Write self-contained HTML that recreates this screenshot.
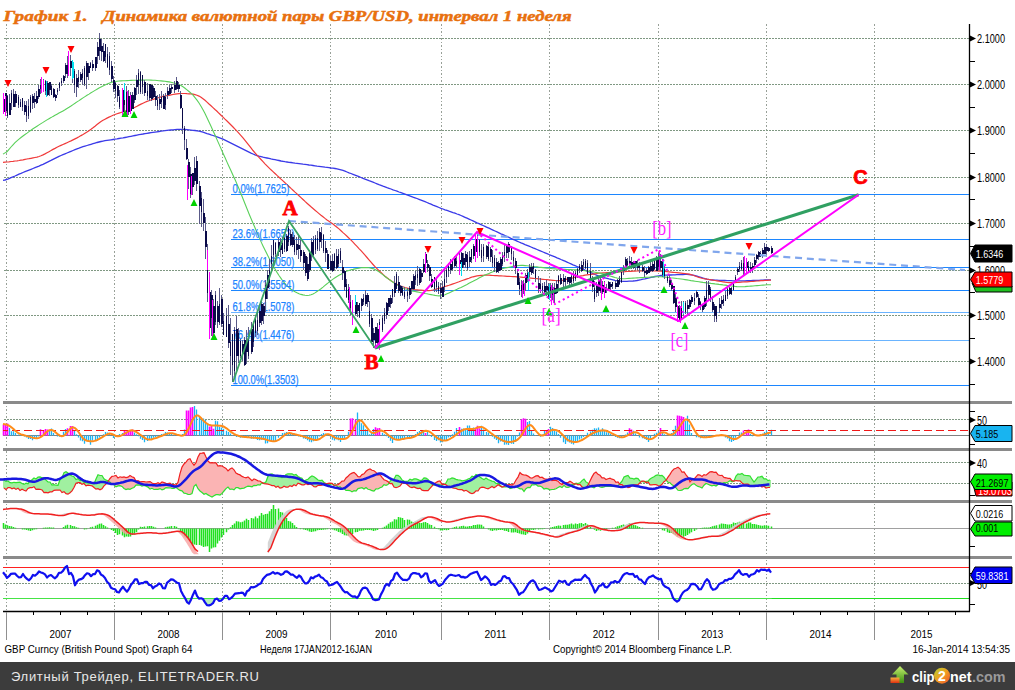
<!DOCTYPE html>
<html><head><meta charset="utf-8"><title>GBP/USD</title>
<style>html,body{margin:0;padding:0;background:#fff;width:1015px;height:690px;overflow:hidden;position:relative;font-family:"Liberation Sans",sans-serif}</style>
</head><body>
<svg width="1015" height="690" viewBox="0 0 1015 690" style="position:absolute;left:0;top:0"><path d="M6.5,24V611" stroke="#98a098" stroke-width="1" stroke-dasharray="1.5 2" shape-rendering="crispEdges"/><path d="M114.5,24V611" stroke="#98a098" stroke-width="1" stroke-dasharray="1.5 2" shape-rendering="crispEdges"/><path d="M222.5,24V611" stroke="#98a098" stroke-width="1" stroke-dasharray="1.5 2" shape-rendering="crispEdges"/><path d="M330.5,24V611" stroke="#98a098" stroke-width="1" stroke-dasharray="1.5 2" shape-rendering="crispEdges"/><path d="M441.5,24V611" stroke="#98a098" stroke-width="1" stroke-dasharray="1.5 2" shape-rendering="crispEdges"/><path d="M549.5,24V611" stroke="#98a098" stroke-width="1" stroke-dasharray="1.5 2" shape-rendering="crispEdges"/><path d="M658.5,24V611" stroke="#98a098" stroke-width="1" stroke-dasharray="1.5 2" shape-rendering="crispEdges"/><path d="M766.5,24V611" stroke="#98a098" stroke-width="1" stroke-dasharray="1.5 2" shape-rendering="crispEdges"/><path d="M874.5,24V611" stroke="#98a098" stroke-width="1" stroke-dasharray="1.5 2" shape-rendering="crispEdges"/><path d="M3,38.5H969" stroke="#7f9882" stroke-width="1" stroke-dasharray="2 1" stroke-dashoffset="2" shape-rendering="crispEdges"/><path d="M3,84.5H969" stroke="#7f9882" stroke-width="1" stroke-dasharray="2 1" stroke-dashoffset="2" shape-rendering="crispEdges"/><path d="M3,130.5H969" stroke="#7f9882" stroke-width="1" stroke-dasharray="2 1" stroke-dashoffset="2" shape-rendering="crispEdges"/><path d="M3,177.5H969" stroke="#7f9882" stroke-width="1" stroke-dasharray="2 1" stroke-dashoffset="2" shape-rendering="crispEdges"/><path d="M3,223.5H969" stroke="#7f9882" stroke-width="1" stroke-dasharray="2 1" stroke-dashoffset="2" shape-rendering="crispEdges"/><path d="M3,270.5H969" stroke="#7f9882" stroke-width="1" stroke-dasharray="2 1" stroke-dashoffset="2" shape-rendering="crispEdges"/><path d="M3,315.5H969" stroke="#7f9882" stroke-width="1" stroke-dasharray="2 1" stroke-dashoffset="2" shape-rendering="crispEdges"/><path d="M3,361.5H969" stroke="#7f9882" stroke-width="1" stroke-dasharray="2 1" stroke-dashoffset="2" shape-rendering="crispEdges"/><path d="M3,419.5H969" stroke="#7f9882" stroke-width="1" stroke-dasharray="2 1" stroke-dashoffset="2" shape-rendering="crispEdges"/><path d="M3,462.5H969" stroke="#7f9882" stroke-width="1" stroke-dasharray="2 1" stroke-dashoffset="2" shape-rendering="crispEdges"/><path d="M3,483.5H969" stroke="#7f9882" stroke-width="1" stroke-dasharray="2 1" stroke-dashoffset="2" shape-rendering="crispEdges"/><path d="M3,583.5H969" stroke="#7f9882" stroke-width="1" stroke-dasharray="2 1" stroke-dashoffset="2" shape-rendering="crispEdges"/><path d="M231,194.5H969" stroke="#1c86ff" stroke-width="1.2" shape-rendering="crispEdges"/><path d="M231,239.5H969" stroke="#1c86ff" stroke-width="1.2" shape-rendering="crispEdges"/><path d="M231,267.5H969" stroke="#1c86ff" stroke-width="1.2" shape-rendering="crispEdges"/><path d="M231,290.5H969" stroke="#1c86ff" stroke-width="1.2" shape-rendering="crispEdges"/><path d="M231,312.5H969" stroke="#6ab4ff" stroke-width="1.2" shape-rendering="crispEdges"/><path d="M231,340.5H969" stroke="#6ab4ff" stroke-width="1.2" shape-rendering="crispEdges"/><path d="M231,385.5H969" stroke="#1c86ff" stroke-width="1.2" shape-rendering="crispEdges"/><path d="M3.0,180.4 L5.0,180.0 L7.0,179.5 L9.0,178.6 L11.0,177.7 L13.0,176.8 L15.0,176.0 L17.0,175.1 L19.0,174.2 L21.0,173.4 L23.0,172.5 L25.0,171.7 L27.0,170.9 L29.0,170.1 L31.0,169.3 L33.0,168.5 L35.0,167.7 L37.0,166.9 L39.0,166.1 L41.0,165.2 L43.0,164.3 L45.0,163.3 L47.0,162.3 L49.0,161.3 L51.0,160.4 L53.0,159.4 L55.0,158.4 L57.0,157.4 L59.0,156.4 L61.0,155.5 L63.0,154.6 L65.0,153.8 L67.0,153.0 L69.0,152.2 L71.0,151.3 L73.0,150.5 L75.0,149.7 L77.0,148.9 L79.0,148.2 L81.0,147.4 L83.0,146.7 L85.0,146.1 L87.0,145.5 L89.0,144.9 L91.0,144.3 L93.0,143.7 L95.0,143.1 L97.0,142.5 L99.0,142.0 L101.0,141.5 L103.0,141.1 L105.0,140.7 L107.0,140.4 L109.0,140.1 L111.0,139.8 L113.0,139.5 L115.0,139.2 L117.0,138.9 L119.0,138.5 L121.0,138.2 L123.0,137.9 L125.0,137.5 L127.0,137.1 L129.0,136.7 L131.0,136.3 L133.0,135.9 L135.0,135.5 L137.0,135.1 L139.0,134.7 L141.0,134.3 L143.0,134.0 L145.0,133.6 L147.0,133.3 L149.0,133.0 L151.0,132.7 L153.0,132.4 L155.0,132.1 L157.0,131.8 L159.0,131.5 L161.0,131.2 L163.0,130.9 L165.0,130.7 L167.0,130.4 L169.0,130.2 L171.0,130.0 L173.0,129.8 L175.0,129.6 L177.0,129.4 L179.0,129.3 L181.0,129.3 L183.0,129.3 L185.0,129.5 L187.0,129.7 L189.0,129.9 L191.0,130.1 L193.0,130.3 L195.0,130.5 L197.0,130.8 L199.0,131.2 L201.0,131.7 L203.0,132.2 L205.0,132.9 L207.0,133.6 L209.0,134.2 L211.0,134.9 L213.0,135.5 L215.0,136.2 L217.0,136.9 L219.0,137.6 L221.0,138.3 L223.0,139.2 L225.0,140.1 L227.0,141.1 L229.0,142.1 L231.0,143.1 L233.0,144.1 L235.0,145.1 L237.0,146.1 L239.0,147.1 L241.0,148.1 L243.0,149.1 L245.0,150.1 L247.0,151.1 L249.0,152.1 L251.0,153.1 L253.0,154.0 L255.0,154.9 L257.0,155.6 L259.0,156.2 L261.0,156.7 L263.0,157.2 L265.0,157.6 L267.0,158.0 L269.0,158.4 L271.0,158.9 L273.0,159.3 L275.0,159.7 L277.0,160.1 L279.0,160.5 L281.0,161.0 L283.0,161.3 L285.0,161.7 L287.0,162.0 L289.0,162.3 L291.0,162.5 L293.0,162.8 L295.0,163.1 L297.0,163.3 L299.0,163.6 L301.0,163.9 L303.0,164.2 L305.0,164.4 L307.0,164.7 L309.0,165.0 L311.0,165.2 L313.0,165.5 L315.0,165.8 L317.0,166.1 L319.0,166.3 L321.0,166.6 L323.0,166.9 L325.0,167.2 L327.0,167.4 L329.0,167.7 L331.0,168.0 L333.0,168.2 L335.0,168.5 L337.0,168.8 L339.0,169.3 L341.0,169.8 L343.0,170.4 L345.0,171.2 L347.0,172.0 L349.0,172.8 L351.0,173.5 L353.0,174.3 L355.0,175.1 L357.0,175.9 L359.0,176.7 L361.0,177.5 L363.0,178.3 L365.0,179.1 L367.0,179.9 L369.0,180.7 L371.0,181.4 L373.0,182.2 L375.0,183.0 L377.0,183.8 L379.0,184.6 L381.0,185.3 L383.0,186.1 L385.0,186.8 L387.0,187.6 L389.0,188.3 L391.0,189.0 L393.0,189.8 L395.0,190.5 L397.0,191.2 L399.0,192.0 L401.0,192.7 L403.0,193.4 L405.0,194.1 L407.0,194.9 L409.0,195.6 L411.0,196.3 L413.0,197.1 L415.0,197.8 L417.0,198.5 L419.0,199.3 L421.0,200.1 L423.0,200.9 L425.0,201.7 L427.0,202.5 L429.0,203.4 L431.0,204.2 L433.0,205.1 L435.0,205.9 L437.0,206.7 L439.0,207.5 L441.0,208.3 L443.0,209.0 L445.0,209.8 L447.0,210.4 L449.0,211.2 L451.0,211.8 L453.0,212.6 L455.0,213.2 L457.0,214.0 L459.0,214.7 L461.0,215.5 L463.0,216.4 L465.0,217.3 L467.0,218.2 L469.0,219.1 L471.0,220.0 L473.0,220.9 L475.0,221.8 L477.0,222.8 L479.0,223.7 L481.0,224.6 L483.0,225.5 L485.0,226.4 L487.0,227.3 L489.0,228.2 L491.0,229.2 L493.0,230.1 L495.0,231.0 L497.0,231.9 L499.0,232.8 L501.0,233.8 L503.0,234.7 L505.0,235.6 L507.0,236.5 L509.0,237.4 L511.0,238.4 L513.0,239.3 L515.0,240.2 L517.0,241.1 L519.0,242.0 L521.0,242.9 L523.0,243.7 L525.0,244.6 L527.0,245.4 L529.0,246.2 L531.0,247.0 L533.0,247.9 L535.0,248.7 L537.0,249.5 L539.0,250.3 L541.0,251.2 L543.0,252.0 L545.0,252.8 L547.0,253.6 L549.0,254.5 L551.0,255.3 L553.0,256.1 L555.0,256.9 L557.0,257.8 L559.0,258.6 L561.0,259.5 L563.0,260.3 L565.0,261.2 L567.0,262.1 L569.0,263.0 L571.0,263.9 L573.0,264.8 L575.0,265.6 L577.0,266.5 L579.0,267.4 L581.0,268.3 L583.0,269.2 L585.0,270.1 L587.0,270.9 L589.0,271.8 L591.0,272.7 L593.0,273.6 L595.0,274.5 L597.0,275.3 L599.0,276.1 L601.0,276.8 L603.0,277.4 L605.0,277.9 L607.0,278.4 L609.0,278.9 L611.0,279.3 L613.0,279.8 L615.0,280.3 L617.0,280.7 L619.0,281.0 L621.0,281.2 L623.0,281.3 L625.0,281.3 L627.0,281.3 L629.0,281.2 L631.0,281.1 L633.0,281.0 L635.0,280.8 L637.0,280.5 L639.0,280.1 L641.0,279.7 L643.0,279.2 L645.0,278.8 L647.0,278.3 L649.0,277.9 L651.0,277.4 L653.0,277.0 L655.0,276.5 L657.0,276.1 L659.0,275.8 L661.0,275.5 L663.0,275.3 L665.0,275.2 L667.0,275.1 L669.0,275.0 L671.0,275.0 L673.0,274.9 L675.0,274.8 L677.0,274.7 L679.0,274.6 L681.0,274.6 L683.0,274.5 L685.0,274.4 L687.0,274.4 L689.0,274.5 L691.0,274.8 L693.0,275.1 L695.0,275.6 L697.0,276.2 L699.0,276.8 L701.0,277.4 L703.0,278.0 L705.0,278.6 L707.0,279.1 L709.0,279.5 L711.0,279.8 L713.0,280.0 L715.0,280.2 L717.0,280.2 L719.0,280.3 L721.0,280.4 L723.0,280.4 L725.0,280.5 L727.0,280.6 L729.0,280.6 L731.0,280.7 L733.0,280.8 L735.0,280.8 L737.0,280.9 L739.0,280.9 L741.0,280.9 L743.0,280.9 L745.0,280.8 L747.0,280.7 L749.0,280.7 L751.0,280.6 L753.0,280.5 L755.0,280.4 L757.0,280.3 L759.0,280.3 L761.0,280.2 L763.0,280.1 L765.0,280.0 L767.0,280.0 L769.0,279.9 L771.0,279.9" fill="none" stroke="#3a3ae8" stroke-width="1.3"/><path d="M3.0,162.3 L5.0,162.1 L7.0,162.0 L9.0,161.8 L11.0,161.5 L13.0,161.3 L15.0,161.0 L17.0,160.8 L19.0,160.5 L21.0,160.1 L23.0,159.8 L25.0,159.4 L27.0,159.0 L29.0,158.7 L31.0,158.3 L33.0,157.9 L35.0,157.5 L37.0,157.1 L39.0,156.5 L41.0,155.8 L43.0,154.9 L45.0,153.9 L47.0,152.8 L49.0,151.7 L51.0,150.6 L53.0,149.4 L55.0,148.4 L57.0,147.3 L59.0,146.3 L61.0,145.4 L63.0,144.5 L65.0,143.6 L67.0,142.7 L69.0,141.8 L71.0,140.9 L73.0,139.9 L75.0,138.9 L77.0,137.9 L79.0,136.8 L81.0,135.6 L83.0,134.5 L85.0,133.3 L87.0,132.1 L89.0,130.7 L91.0,129.3 L93.0,127.8 L95.0,126.2 L97.0,124.5 L99.0,123.0 L101.0,121.6 L103.0,120.3 L105.0,119.2 L107.0,118.1 L109.0,117.1 L111.0,116.2 L113.0,115.3 L115.0,114.5 L117.0,113.8 L119.0,113.1 L121.0,112.5 L123.0,111.9 L125.0,111.3 L127.0,110.6 L129.0,109.9 L131.0,109.0 L133.0,108.1 L135.0,107.2 L137.0,106.2 L139.0,105.1 L141.0,104.1 L143.0,103.2 L145.0,102.3 L147.0,101.4 L149.0,100.7 L151.0,100.0 L153.0,99.4 L155.0,98.7 L157.0,98.1 L159.0,97.5 L161.0,96.9 L163.0,96.4 L165.0,96.0 L167.0,95.6 L169.0,95.3 L171.0,94.9 L173.0,94.5 L175.0,94.2 L177.0,93.9 L179.0,93.7 L181.0,93.5 L183.0,93.5 L185.0,93.5 L187.0,93.7 L189.0,93.8 L191.0,93.9 L193.0,94.2 L195.0,94.7 L197.0,95.2 L199.0,96.1 L201.0,97.3 L203.0,98.7 L205.0,100.3 L207.0,102.1 L209.0,104.0 L211.0,105.8 L213.0,107.6 L215.0,109.5 L217.0,111.3 L219.0,113.3 L221.0,115.2 L223.0,117.1 L225.0,119.1 L227.0,121.0 L229.0,123.0 L231.0,125.0 L233.0,127.0 L235.0,129.1 L237.0,131.2 L239.0,133.4 L241.0,135.6 L243.0,137.9 L245.0,140.3 L247.0,142.8 L249.0,145.3 L251.0,147.9 L253.0,150.5 L255.0,152.9 L257.0,155.2 L259.0,157.4 L261.0,159.5 L263.0,161.6 L265.0,163.8 L267.0,165.8 L269.0,167.8 L271.0,169.8 L273.0,171.6 L275.0,173.5 L277.0,175.4 L279.0,177.2 L281.0,179.1 L283.0,180.9 L285.0,182.8 L287.0,184.6 L289.0,186.5 L291.0,188.4 L293.0,190.2 L295.0,192.1 L297.0,193.9 L299.0,195.8 L301.0,197.6 L303.0,199.5 L305.0,201.4 L307.0,203.2 L309.0,205.0 L311.0,206.8 L313.0,208.5 L315.0,210.2 L317.0,211.9 L319.0,213.6 L321.0,215.3 L323.0,216.8 L325.0,218.4 L327.0,219.9 L329.0,221.3 L331.0,222.7 L333.0,224.1 L335.0,225.7 L337.0,227.3 L339.0,228.9 L341.0,230.7 L343.0,232.6 L345.0,234.4 L347.0,236.3 L349.0,238.2 L351.0,240.2 L353.0,242.2 L355.0,244.3 L357.0,246.4 L359.0,248.6 L361.0,250.7 L363.0,252.9 L365.0,255.2 L367.0,257.5 L369.0,259.8 L371.0,262.2 L373.0,264.5 L375.0,266.7 L377.0,268.7 L379.0,270.7 L381.0,272.5 L383.0,274.4 L385.0,276.2 L387.0,277.8 L389.0,279.3 L391.0,280.7 L393.0,281.9 L395.0,283.1 L397.0,284.2 L399.0,285.2 L401.0,286.1 L403.0,286.8 L405.0,287.5 L407.0,288.0 L409.0,288.6 L411.0,289.0 L413.0,289.4 L415.0,289.7 L417.0,289.9 L419.0,290.1 L421.0,290.2 L423.0,290.4 L425.0,290.6 L427.0,290.7 L429.0,290.6 L431.0,290.4 L433.0,290.0 L435.0,289.5 L437.0,288.9 L439.0,288.3 L441.0,287.7 L443.0,287.1 L445.0,286.5 L447.0,285.9 L449.0,285.3 L451.0,284.6 L453.0,283.9 L455.0,283.2 L457.0,282.5 L459.0,281.8 L461.0,281.0 L463.0,280.3 L465.0,279.6 L467.0,278.9 L469.0,278.2 L471.0,277.4 L473.0,276.8 L475.0,276.3 L477.0,275.9 L479.0,275.6 L481.0,275.4 L483.0,275.3 L485.0,275.2 L487.0,275.2 L489.0,275.2 L491.0,275.3 L493.0,275.5 L495.0,275.6 L497.0,275.7 L499.0,275.8 L501.0,275.9 L503.0,276.0 L505.0,276.1 L507.0,276.3 L509.0,276.4 L511.0,276.5 L513.0,276.6 L515.0,276.7 L517.0,276.8 L519.0,277.0 L521.0,277.1 L523.0,277.3 L525.0,277.5 L527.0,277.7 L529.0,277.9 L531.0,278.1 L533.0,278.3 L535.0,278.5 L537.0,278.7 L539.0,278.9 L541.0,279.1 L543.0,279.3 L545.0,279.5 L547.0,279.7 L549.0,279.9 L551.0,280.1 L553.0,280.3 L555.0,280.5 L557.0,280.6 L559.0,280.6 L561.0,280.5 L563.0,280.2 L565.0,279.8 L567.0,279.2 L569.0,278.8 L571.0,278.2 L573.0,277.8 L575.0,277.2 L577.0,276.8 L579.0,276.3 L581.0,275.9 L583.0,275.6 L585.0,275.2 L587.0,274.9 L589.0,274.6 L591.0,274.4 L593.0,274.1 L595.0,273.8 L597.0,273.5 L599.0,273.2 L601.0,273.0 L603.0,272.9 L605.0,272.8 L607.0,272.6 L609.0,272.6 L611.0,272.4 L613.0,272.4 L615.0,272.2 L617.0,272.1 L619.0,272.0 L621.0,271.9 L623.0,271.8 L625.0,271.7 L627.0,271.5 L629.0,271.4 L631.0,271.3 L633.0,271.2 L635.0,271.1 L637.0,271.0 L639.0,271.0 L641.0,271.0 L643.0,271.0 L645.0,271.0 L647.0,271.0 L649.0,271.0 L651.0,271.0 L653.0,271.0 L655.0,271.0 L657.0,271.0 L659.0,271.1 L661.0,271.2 L663.0,271.3 L665.0,271.5 L667.0,271.7 L669.0,271.9 L671.0,272.1 L673.0,272.3 L675.0,272.5 L677.0,272.7 L679.0,272.9 L681.0,273.1 L683.0,273.3 L685.0,273.5 L687.0,273.8 L689.0,274.1 L691.0,274.6 L693.0,275.3 L695.0,276.0 L697.0,276.8 L699.0,277.4 L701.0,278.0 L703.0,278.5 L705.0,278.8 L707.0,279.2 L709.0,279.5 L711.0,279.8 L713.0,280.2 L715.0,280.5 L717.0,280.8 L719.0,281.2 L721.0,281.5 L723.0,281.8 L725.0,282.2 L727.0,282.5 L729.0,282.6 L731.0,282.7 L733.0,282.7 L735.0,282.6 L737.0,282.5 L739.0,282.3 L741.0,282.2 L743.0,282.0 L745.0,281.9 L747.0,281.8 L749.0,281.6 L751.0,281.5 L753.0,281.3 L755.0,281.2 L757.0,281.0 L759.0,280.9 L761.0,280.7 L763.0,280.6 L765.0,280.4 L767.0,280.3 L769.0,280.2 L771.0,280.1" fill="none" stroke="#f03a3a" stroke-width="1.2"/><path d="M3.0,154.1 L5.0,152.9 L7.0,151.7 L9.0,149.4 L11.0,147.0 L13.0,144.8 L15.0,142.7 L17.0,140.8 L19.0,139.1 L21.0,137.5 L23.0,136.0 L25.0,134.5 L27.0,133.1 L29.0,131.6 L31.0,130.2 L33.0,128.8 L35.0,127.5 L37.0,126.2 L39.0,124.9 L41.0,123.6 L43.0,122.4 L45.0,121.1 L47.0,119.9 L49.0,118.7 L51.0,117.6 L53.0,116.4 L55.0,115.3 L57.0,114.2 L59.0,113.1 L61.0,112.0 L63.0,110.9 L65.0,109.8 L67.0,108.5 L69.0,107.3 L71.0,106.0 L73.0,104.6 L75.0,103.3 L77.0,101.9 L79.0,100.6 L81.0,99.2 L83.0,97.9 L85.0,96.6 L87.0,95.3 L89.0,94.1 L91.0,92.8 L93.0,91.6 L95.0,90.4 L97.0,89.2 L99.0,88.0 L101.0,86.9 L103.0,85.9 L105.0,84.9 L107.0,84.1 L109.0,83.2 L111.0,82.5 L113.0,81.9 L115.0,81.5 L117.0,81.2 L119.0,81.0 L121.0,80.9 L123.0,80.8 L125.0,80.7 L127.0,80.6 L129.0,80.5 L131.0,80.4 L133.0,80.3 L135.0,80.2 L137.0,80.2 L139.0,80.1 L141.0,80.1 L143.0,80.1 L145.0,80.0 L147.0,80.0 L149.0,80.0 L151.0,80.1 L153.0,80.2 L155.0,80.3 L157.0,80.5 L159.0,80.7 L161.0,80.9 L163.0,81.1 L165.0,81.3 L167.0,81.6 L169.0,81.9 L171.0,82.3 L173.0,82.8 L175.0,83.2 L177.0,83.7 L179.0,84.5 L181.0,85.5 L183.0,86.7 L185.0,88.2 L187.0,89.8 L189.0,91.5 L191.0,93.2 L193.0,95.2 L195.0,97.6 L197.0,100.1 L199.0,103.0 L201.0,106.3 L203.0,109.8 L205.0,113.6 L207.0,117.7 L209.0,122.0 L211.0,126.3 L213.0,130.7 L215.0,135.1 L217.0,139.6 L219.0,144.1 L221.0,148.6 L223.0,153.2 L225.0,157.6 L227.0,162.1 L229.0,166.5 L231.0,170.8 L233.0,175.2 L235.0,179.6 L237.0,184.1 L239.0,188.8 L241.0,193.7 L243.0,198.7 L245.0,203.8 L247.0,208.8 L249.0,213.7 L251.0,218.5 L253.0,223.2 L255.0,227.8 L257.0,232.5 L259.0,237.1 L261.0,241.6 L263.0,245.9 L265.0,250.1 L267.0,254.1 L269.0,258.0 L271.0,261.9 L273.0,265.5 L275.0,269.0 L277.0,272.4 L279.0,275.5 L281.0,278.4 L283.0,281.2 L285.0,283.7 L287.0,285.8 L289.0,287.7 L291.0,289.2 L293.0,290.5 L295.0,291.8 L297.0,292.8 L299.0,293.7 L301.0,294.4 L303.0,294.9 L305.0,295.3 L307.0,295.5 L309.0,295.3 L311.0,294.8 L313.0,294.0 L315.0,292.9 L317.0,291.5 L319.0,290.1 L321.0,288.7 L323.0,287.1 L325.0,285.4 L327.0,283.8 L329.0,282.1 L331.0,280.6 L333.0,279.1 L335.0,277.7 L337.0,276.5 L339.0,275.3 L341.0,274.2 L343.0,273.0 L345.0,272.0 L347.0,271.1 L349.0,270.4 L351.0,269.8 L353.0,269.4 L355.0,268.9 L357.0,268.5 L359.0,268.1 L361.0,267.8 L363.0,267.6 L365.0,267.5 L367.0,267.6 L369.0,267.8 L371.0,268.1 L373.0,268.6 L375.0,269.5 L377.0,270.5 L379.0,271.9 L381.0,273.4 L383.0,274.9 L385.0,276.5 L387.0,278.0 L389.0,279.4 L391.0,280.8 L393.0,282.2 L395.0,283.6 L397.0,284.9 L399.0,286.0 L401.0,287.1 L403.0,287.9 L405.0,288.7 L407.0,289.3 L409.0,290.0 L411.0,290.6 L413.0,291.1 L415.0,291.5 L417.0,291.9 L419.0,292.3 L421.0,292.7 L423.0,293.1 L425.0,293.5 L427.0,293.8 L429.0,294.2 L431.0,294.6 L433.0,295.0 L435.0,295.4 L437.0,295.7 L439.0,295.9 L441.0,295.7 L443.0,295.3 L445.0,294.7 L447.0,293.8 L449.0,292.9 L451.0,292.0 L453.0,291.1 L455.0,290.2 L457.0,289.3 L459.0,288.3 L461.0,287.4 L463.0,286.4 L465.0,285.4 L467.0,284.4 L469.0,283.3 L471.0,282.3 L473.0,281.3 L475.0,280.2 L477.0,279.2 L479.0,278.1 L481.0,277.1 L483.0,276.1 L485.0,275.1 L487.0,274.2 L489.0,273.4 L491.0,272.6 L493.0,271.8 L495.0,271.0 L497.0,270.2 L499.0,269.6 L501.0,269.0 L503.0,268.4 L505.0,268.0 L507.0,267.6 L509.0,267.2 L511.0,266.8 L513.0,266.4 L515.0,266.0 L517.0,265.7 L519.0,265.5 L521.0,265.4 L523.0,265.4 L525.0,265.6 L527.0,265.8 L529.0,266.0 L531.0,266.3 L533.0,266.5 L535.0,266.7 L537.0,266.9 L539.0,267.2 L541.0,267.4 L543.0,267.6 L545.0,267.9 L547.0,268.1 L549.0,268.3 L551.0,268.5 L553.0,268.7 L555.0,268.9 L557.0,269.1 L559.0,269.2 L561.0,269.2 L563.0,269.3 L565.0,269.4 L567.0,269.5 L569.0,269.6 L571.0,269.6 L573.0,269.7 L575.0,269.8 L577.0,269.9 L579.0,270.0 L581.0,270.2 L583.0,270.5 L585.0,270.8 L587.0,271.1 L589.0,271.4 L591.0,271.6 L593.0,271.9 L595.0,272.2 L597.0,272.6 L599.0,273.0 L601.0,273.4 L603.0,273.9 L605.0,274.5 L607.0,275.1 L609.0,275.7 L611.0,276.3 L613.0,276.9 L615.0,277.5 L617.0,278.0 L619.0,278.4 L621.0,278.6 L623.0,278.7 L625.0,278.7 L627.0,278.5 L629.0,278.4 L631.0,278.3 L633.0,278.1 L635.0,278.0 L637.0,277.9 L639.0,277.8 L641.0,277.6 L643.0,277.5 L645.0,277.4 L647.0,277.3 L649.0,277.2 L651.0,277.0 L653.0,276.9 L655.0,276.8 L657.0,276.7 L659.0,276.7 L661.0,276.8 L663.0,276.9 L665.0,277.1 L667.0,277.3 L669.0,277.5 L671.0,277.8 L673.0,278.0 L675.0,278.2 L677.0,278.5 L679.0,278.7 L681.0,279.0 L683.0,279.3 L685.0,279.6 L687.0,279.9 L689.0,280.2 L691.0,280.6 L693.0,280.9 L695.0,281.2 L697.0,281.5 L699.0,281.8 L701.0,282.1 L703.0,282.4 L705.0,282.6 L707.0,282.9 L709.0,283.1 L711.0,283.4 L713.0,283.6 L715.0,283.9 L717.0,284.1 L719.0,284.4 L721.0,284.6 L723.0,284.9 L725.0,285.1 L727.0,285.4 L729.0,285.6 L731.0,285.9 L733.0,286.1 L735.0,286.4 L737.0,286.6 L739.0,286.7 L741.0,286.8 L743.0,286.7 L745.0,286.6 L747.0,286.4 L749.0,286.3 L751.0,286.1 L753.0,286.0 L755.0,285.8 L757.0,285.6 L759.0,285.5 L761.0,285.3 L763.0,285.1 L765.0,285.0 L767.0,284.8 L769.0,284.7 L771.0,284.7" fill="none" stroke="#5ad05a" stroke-width="1.1"/><text x="232.5" y="193" font-family="Liberation Sans, sans-serif" font-size="12.5" fill="#1c84ff" stroke="#1c84ff" stroke-width="0.25" textLength="57" lengthAdjust="spacingAndGlyphs">0.0%(1.7625)</text><text x="232.5" y="238" font-family="Liberation Sans, sans-serif" font-size="12.5" fill="#1c84ff" stroke="#1c84ff" stroke-width="0.25" textLength="62" lengthAdjust="spacingAndGlyphs">23.6%(1.6652)</text><text x="232.5" y="266" font-family="Liberation Sans, sans-serif" font-size="12.5" fill="#1c84ff" stroke="#1c84ff" stroke-width="0.25" textLength="62" lengthAdjust="spacingAndGlyphs">38.2%(1.6050)</text><text x="232.5" y="289" font-family="Liberation Sans, sans-serif" font-size="12.5" fill="#1c84ff" stroke="#1c84ff" stroke-width="0.25" textLength="62" lengthAdjust="spacingAndGlyphs">50.0%(1.5564)</text><text x="232.5" y="311" font-family="Liberation Sans, sans-serif" font-size="12.5" fill="#1c84ff" stroke="#1c84ff" stroke-width="0.25" textLength="62" lengthAdjust="spacingAndGlyphs">61.8%(1.5078)</text><text x="232.5" y="339" font-family="Liberation Sans, sans-serif" font-size="12.5" fill="#1c84ff" stroke="#1c84ff" stroke-width="0.25" textLength="62" lengthAdjust="spacingAndGlyphs">76.4%(1.4476)</text><text x="232.5" y="384" font-family="Liberation Sans, sans-serif" font-size="12.5" fill="#1c84ff" stroke="#1c84ff" stroke-width="0.25" textLength="66" lengthAdjust="spacingAndGlyphs">100.0%(1.3503)</text><path d="M3.5,92.6V112.5M5.5,92.5V115.4M7.5,94.6V118.2M9.5,94.1V115.1M11.5,90.1V110.3M13.5,89.4V107.4M15.5,91.3V106.7M18.5,95.2V108.0M20.5,98.5V106.9M22.5,97.6V111.4M24.5,100.8V115.3M26.5,101.4V122.0M28.5,99.1V118.9M30.5,95.2V113.2M32.5,93.8V108.7M34.5,93.2V107.6M36.5,90.5V104.2M38.5,84.9V98.6M40.5,78.6V94.2M43.5,79.1V92.4M45.5,79.8V95.3M47.5,80.8V95.5M49.5,82.2V95.8M51.5,84.4V95.4M53.5,88.3V97.5M55.5,94.4V100.6M57.5,88.4V95.1M59.5,82.4V91.3M61.5,77.9V86.0M63.5,74.9V83.1M65.5,63.2V78.2M67.5,55.5V78.1M70.5,54.9V76.3M72.5,62.7V83.2M74.5,69.3V93.0M76.5,73.6V96.5M78.5,69.8V88.2M80.5,71.9V82.4M82.5,69.2V85.0M84.5,65.9V86.2M86.5,61.4V88.5M88.5,62.5V79.8M90.5,62.2V68.2M92.5,59.9V70.9M95.5,56.5V71.2M97.5,41.7V64.0M99.5,32.7V59.8M101.5,38.5V61.3M103.5,43.3V62.4M105.5,43.7V62.5M107.5,47.3V68.3M109.5,52.2V74.8M111.5,61.4V82.1M113.5,75.8V91.6M115.5,82.4V98.2M117.5,85.3V102.1M119.5,90.1V109.0M122.5,88.8V112.2M124.5,83.4V116.7M126.5,85.7V117.0M128.5,90.1V114.5M130.5,92.2V113.5M132.5,92.4V109.3M134.5,86.9V103.3M136.5,75.4V94.5M138.5,69.4V93.6M140.5,71.0V93.5M142.5,74.7V94.4M144.5,79.7V95.9M147.5,83.4V100.1M149.5,83.6V100.7M151.5,84.9V100.9M153.5,86.4V98.2M155.5,91.4V105.8M157.5,94.8V110.3M159.5,93.6V109.7M161.5,91.3V108.0M163.5,94.1V109.0M165.5,93.0V110.0M167.5,86.7V98.7M169.5,84.5V94.8M171.5,84.4V93.2M174.5,81.2V92.8M176.5,76.7V90.3M178.5,82.0V91.8M180.5,90.9V109.4M182.5,107.5V133.7M184.5,125.8V150.1M186.5,139.3V160.4M188.5,158.6V188.7M190.5,167.3V197.7M192.5,173.2V194.6M194.5,157.3V184.5M196.5,155.6V191.1M199.5,180.5V224.0M201.5,192.4V226.9M203.5,199.1V231.3M205.5,216.8V258.6M207.5,243.5V302.2M209.5,272.8V336.6M211.5,290.4V336.2M213.5,299.1V334.9M215.5,291.3V325.4M217.5,301.1V327.9M219.5,287.9V325.3M221.5,295.1V327.3M223.5,312.5V334.7M226.5,308.3V336.7M228.5,304.7V348.3M230.5,317.5V374.7M232.5,333.5V381.5M234.5,327.3V376.4M236.5,316.1V370.3M238.5,327.8V362.9M240.5,338.8V357.9M242.5,339.5V360.5M244.5,337.4V365.6M246.5,330.1V363.5M248.5,327.0V359.3M251.5,322.0V354.4M253.5,321.2V346.6M255.5,315.4V336.5M257.5,309.7V334.6M259.5,304.6V327.3M261.5,301.3V325.1M263.5,302.9V323.7M265.5,279.6V312.2M267.5,269.8V298.5M269.5,258.9V286.5M271.5,244.7V271.9M273.5,239.6V263.5M275.5,241.8V257.4M278.5,238.3V256.1M280.5,237.7V256.8M282.5,236.5V254.4M284.5,237.3V252.3M286.5,233.5V251.7M288.5,226.1V245.6M290.5,229.5V245.6M292.5,232.4V246.7M294.5,234.6V254.7M296.5,237.0V255.4M298.5,236.3V258.5M300.5,240.0V261.7M303.5,249.9V269.9M305.5,253.8V276.2M307.5,256.8V281.3M309.5,250.1V271.8M311.5,237.5V261.2M313.5,236.4V258.0M315.5,234.8V254.0M317.5,231.2V250.6M319.5,228.0V250.8M321.5,227.3V248.4M323.5,233.7V253.4M325.5,240.6V262.2M327.5,249.9V269.0M330.5,255.5V271.4M332.5,253.7V272.1M334.5,252.5V269.5M336.5,248.8V268.8M338.5,249.3V266.5M340.5,248.0V263.4M342.5,259.8V279.5M344.5,270.0V291.1M346.5,278.8V297.7M348.5,284.4V303.3M350.5,294.8V315.3M352.5,301.3V322.3M355.5,295.7V315.3M357.5,301.6V317.2M359.5,302.5V318.2M361.5,297.5V311.2M363.5,293.7V305.2M365.5,289.9V306.4M367.5,293.0V307.0M369.5,301.1V326.7M371.5,313.8V342.2M373.5,328.4V347.5M375.5,326.5V346.1M377.5,322.9V344.8M379.5,319.4V340.5M382.5,315.0V332.4M384.5,308.1V323.8M386.5,302.2V318.5M388.5,298.0V310.5M390.5,295.1V307.9M392.5,288.5V302.5M394.5,276.4V296.9M396.5,271.6V289.4M398.5,276.1V292.8M400.5,284.5V296.0M402.5,286.4V295.8M404.5,287.3V298.6M407.5,287.5V301.9M409.5,285.5V299.4M411.5,280.7V293.9M413.5,274.0V289.6M415.5,270.7V285.2M417.5,266.4V285.9M419.5,268.0V285.0M421.5,270.1V281.6M423.5,259.2V272.9M425.5,252.1V268.2M427.5,259.5V271.9M429.5,264.6V281.2M431.5,273.5V287.6M434.5,277.3V292.1M436.5,278.6V292.4M438.5,282.1V293.5M440.5,283.0V298.8M442.5,280.8V297.3M444.5,270.4V292.0M446.5,266.2V283.1M448.5,263.0V276.5M450.5,259.3V273.7M452.5,260.0V270.6M454.5,256.4V268.2M456.5,255.2V268.4M459.5,252.3V270.1M461.5,252.2V269.6M463.5,252.9V268.1M465.5,251.1V268.0M467.5,251.6V269.5M469.5,251.2V266.6M471.5,248.6V263.2M473.5,243.5V258.8M475.5,237.7V258.0M477.5,234.2V255.4M479.5,238.8V256.1M481.5,243.5V261.7M483.5,244.2V262.4M486.5,244.5V259.2M488.5,243.7V261.4M490.5,246.9V262.3M492.5,250.4V267.3M494.5,255.2V271.7M496.5,258.1V272.5M498.5,260.5V272.5M500.5,257.1V271.2M502.5,252.4V265.7M504.5,245.4V261.8M506.5,245.4V257.9M508.5,242.1V257.5M511.5,246.3V259.8M513.5,251.4V266.5M515.5,258.2V274.3M517.5,268.9V285.2M519.5,278.1V295.4M521.5,280.1V297.2M523.5,279.9V293.5M525.5,272.6V290.8M527.5,268.9V281.6M529.5,263.9V276.9M531.5,263.0V274.9M533.5,263.3V274.0M535.5,268.6V281.5M538.5,275.9V293.3M540.5,278.3V292.8M542.5,282.5V293.3M544.5,281.9V294.0M546.5,280.1V296.0M548.5,283.4V298.8M550.5,282.6V297.6M552.5,282.7V299.6M554.5,283.1V302.6M556.5,280.4V293.8M558.5,275.3V289.2M560.5,274.3V285.4M563.5,273.7V286.9M565.5,275.7V285.7M567.5,276.9V283.9M569.5,276.5V287.4M571.5,274.0V285.2M573.5,270.9V283.3M575.5,270.8V280.7M577.5,267.8V277.8M579.5,264.4V272.8M581.5,261.4V271.9M583.5,258.7V268.7M585.5,258.7V269.0M587.5,260.4V274.4M590.5,263.3V281.1M592.5,275.6V292.2M594.5,281.1V301.6M596.5,281.8V296.9M598.5,278.1V295.5M600.5,278.0V293.2M602.5,281.3V293.5M604.5,280.7V296.5M606.5,283.6V293.3M608.5,280.7V289.9M610.5,281.5V291.4M612.5,281.6V288.7M615.5,280.2V288.8M617.5,279.3V286.9M619.5,276.1V284.5M621.5,272.1V282.7M623.5,265.4V274.5M625.5,256.7V267.7M627.5,257.9V266.0M629.5,256.3V268.3M631.5,256.9V269.3M633.5,260.5V268.8M635.5,260.8V269.7M637.5,260.1V269.6M639.5,262.2V272.9M642.5,265.1V272.3M644.5,265.7V277.1M646.5,268.1V274.5M648.5,266.1V273.4M650.5,262.2V271.6M652.5,259.7V271.7M654.5,258.6V269.8M656.5,256.4V270.9M658.5,253.1V269.9M660.5,254.2V271.3M662.5,258.6V276.5M664.5,266.3V278.5M667.5,275.7V283.1M669.5,274.7V287.3M671.5,279.8V290.5M673.5,286.0V303.7M675.5,293.2V311.6M677.5,305.2V318.3M679.5,304.5V321.4M681.5,301.0V319.9M683.5,301.1V315.9M685.5,301.3V313.6M687.5,299.8V314.5M689.5,299.2V309.4M691.5,294.8V303.5M694.5,292.7V304.9M696.5,290.0V298.0M698.5,294.1V306.5M700.5,301.0V309.6M702.5,304.2V312.0M704.5,295.9V309.2M706.5,280.8V305.8M708.5,280.5V300.1M710.5,287.2V301.8M712.5,295.7V311.8M714.5,303.7V322.2M716.5,305.5V321.8M719.5,298.0V312.7M721.5,296.1V309.2M723.5,294.7V305.7M725.5,291.2V300.8M727.5,285.6V298.8M729.5,286.6V295.4M731.5,286.9V294.9M733.5,282.9V291.2M735.5,274.8V280.8M737.5,267.1V275.0M739.5,261.6V272.4M741.5,259.9V271.2M743.5,257.2V274.8M746.5,258.5V273.4M748.5,260.7V273.4M750.5,261.8V273.0M752.5,262.8V272.6M754.5,257.0V267.7M756.5,253.8V263.2M758.5,250.9V259.7M760.5,251.1V257.4M762.5,248.0V258.1M764.5,242.6V254.3M766.5,243.7V255.0M768.5,246.5V252.1M771.5,245.5V254.2" fill="none" stroke="#5a5a88" stroke-width="1" shape-rendering="crispEdges"/><path d="M3.0,98.5h2V111.9h-2ZM5.0,92.9h2V111.0h-2ZM7.0,96.0h1V115.9h-1ZM9.0,103.3h2V114.7h-2ZM11.0,92.9h1V102.9h-1ZM13.0,93.9h2V106.9h-2ZM15.0,93.5h2V102.7h-2ZM18.0,96.6h1V104.7h-1ZM20.0,102.2h1V106.5h-1ZM22.0,97.8h1V107.3h-1ZM24.0,105.4h2V111.5h-2ZM26.0,105.8h1V115.9h-1ZM28.0,106.4h1V116.4h-1ZM30.0,96.6h1V112.3h-1ZM32.0,96.4h2V102.9h-2ZM34.0,98.5h2V102.0h-2ZM36.0,96.4h2V103.3h-2ZM38.0,88.5h2V97.0h-2ZM40.0,85.3h1V89.4h-1ZM43.0,84.5h1V87.7h-1ZM45.0,80.5h2V90.8h-2ZM47.0,83.0h2V95.1h-2ZM49.0,82.3h2V90.4h-2ZM51.0,86.2h1V94.8h-1ZM53.0,88.6h2V97.1h-2ZM55.0,94.5h2V97.9h-2ZM57.0,90.0h1V92.2h-1ZM59.0,83.1h1V88.2h-1ZM61.0,80.8h1V82.8h-1ZM63.0,75.7h2V81.2h-2ZM65.0,65.0h2V73.6h-2ZM67.0,65.2h2V74.4h-2ZM70.0,60.9h2V67.6h-2ZM72.0,63.5h1V77.1h-1ZM74.0,71.2h1V84.5h-1ZM76.0,77.7h2V86.7h-2ZM78.0,77.3h1V81.5h-1ZM80.0,73.6h2V79.9h-2ZM82.0,72.9h1V78.3h-1ZM84.0,68.2h1V83.6h-1ZM86.0,63.0h2V77.4h-2ZM88.0,65.8h2V72.7h-2ZM90.0,63.4h1V67.7h-1ZM92.0,63.5h2V68.1h-2ZM95.0,57.2h2V67.5h-2ZM97.0,47.3h2V56.4h-2ZM99.0,38.9h2V51.3h-2ZM101.0,45.6h2V52.3h-2ZM103.0,50.5h2V61.2h-2ZM105.0,44.3h1V56.8h-1ZM107.0,53.5h1V66.9h-1ZM109.0,56.2h1V69.8h-1ZM111.0,66.2h2V78.9h-2ZM113.0,79.8h2V88.5h-2ZM115.0,82.9h1V91.2h-1ZM117.0,85.6h2V96.2h-2ZM119.0,97.1h1V106.8h-1ZM122.0,89.7h2V111.6h-2ZM124.0,92.9h1V104.7h-1ZM126.0,92.1h1V112.2h-1ZM128.0,95.9h2V111.8h-2ZM130.0,95.2h2V110.5h-2ZM132.0,95.0h2V109.1h-2ZM134.0,88.3h2V99.8h-2ZM136.0,79.7h2V87.3h-2ZM138.0,73.1h1V84.6h-1ZM140.0,71.6h1V92.2h-1ZM142.0,75.4h1V86.9h-1ZM144.0,81.9h2V92.6h-2ZM147.0,90.7h1V96.0h-1ZM149.0,83.6h2V97.8h-2ZM151.0,84.9h2V99.0h-2ZM153.0,88.0h2V97.0h-2ZM155.0,96.1h2V100.1h-2ZM157.0,99.9h1V105.8h-1ZM159.0,98.9h2V103.8h-2ZM161.0,97.4h1V101.8h-1ZM163.0,95.6h2V108.8h-2ZM165.0,97.3h1V105.2h-1ZM167.0,91.0h2V94.7h-2ZM169.0,87.9h2V93.7h-2ZM171.0,87.3h2V89.3h-2ZM174.0,85.2h2V89.6h-2ZM176.0,81.3h2V88.5h-2ZM178.0,84.9h2V88.7h-2ZM180.0,94.8h2V108.4h-2ZM182.0,107.7h1V128.3h-1ZM184.0,128.1h1V139.8h-1ZM186.0,148.3h2V159.1h-2ZM188.0,161.7h2V176.5h-2ZM190.0,173.5h2V193.6h-2ZM192.0,173.2h2V187.4h-2ZM194.0,168.3h2V180.9h-2ZM196.0,161.4h2V184.3h-2ZM199.0,186.1h2V205.7h-2ZM201.0,198.2h1V212.1h-1ZM203.0,212.7h2V223.3h-2ZM205.0,231.0h2V246.5h-2ZM207.0,256.0h1V293.1h-1ZM209.0,291.6h2V328.0h-2ZM211.0,294.7h2V317.6h-2ZM213.0,306.3h2V332.6h-2ZM215.0,295.0h1V321.5h-1ZM217.0,306.1h2V321.6h-2ZM219.0,304.2h1V323.2h-1ZM221.0,299.0h2V323.7h-2ZM223.0,321.2h1V334.5h-1ZM226.0,315.8h1V336.7h-1ZM228.0,323.8h2V343.4h-2ZM230.0,341.7h1V356.1h-1ZM232.0,334.4h1V364.6h-1ZM234.0,330.1h1V370.8h-1ZM236.0,328.9h2V356.1h-2ZM238.0,332.6h1V355.6h-1ZM240.0,340.8h1V355.8h-1ZM242.0,344.2h2V354.1h-2ZM244.0,340.2h2V365.1h-2ZM246.0,342.1h2V352.4h-2ZM248.0,338.9h1V355.9h-1ZM251.0,329.2h2V351.7h-2ZM253.0,322.9h1V342.1h-1ZM255.0,316.0h1V332.8h-1ZM257.0,320.1h1V330.9h-1ZM259.0,311.4h2V323.4h-2ZM261.0,304.3h2V321.3h-2ZM263.0,306.2h2V316.0h-2ZM265.0,285.0h2V298.7h-2ZM267.0,275.1h2V288.0h-2ZM269.0,270.3h1V283.3h-1ZM271.0,256.4h1V264.4h-1ZM273.0,239.6h1V255.4h-1ZM275.0,243.4h1V254.1h-1ZM278.0,241.7h2V252.1h-2ZM280.0,244.7h2V250.1h-2ZM282.0,242.8h1V253.8h-1ZM284.0,237.5h1V248.6h-1ZM286.0,235.7h2V251.0h-2ZM288.0,228.2h1V242.0h-1ZM290.0,234.3h2V244.7h-2ZM292.0,237.2h2V245.4h-2ZM294.0,239.9h1V251.7h-1ZM296.0,243.7h2V250.0h-2ZM298.0,244.7h2V249.4h-2ZM300.0,249.5h2V256.0h-2ZM303.0,252.2h2V262.9h-2ZM305.0,256.0h2V272.5h-2ZM307.0,263.9h2V279.1h-2ZM309.0,253.1h2V269.9h-2ZM311.0,241.7h2V255.3h-2ZM313.0,240.4h1V255.2h-1ZM315.0,237.9h1V250.4h-1ZM317.0,237.6h1V248.8h-1ZM319.0,232.2h2V241.7h-2ZM321.0,233.4h1V239.8h-1ZM323.0,235.0h1V250.9h-1ZM325.0,248.4h2V252.8h-2ZM327.0,254.0h2V268.5h-2ZM330.0,261.4h2V270.3h-2ZM332.0,260.6h2V270.6h-2ZM334.0,253.5h1V267.6h-1ZM336.0,255.6h2V268.4h-2ZM338.0,254.1h1V264.1h-1ZM340.0,251.1h1V260.3h-1ZM342.0,266.6h2V272.6h-2ZM344.0,271.2h2V287.0h-2ZM346.0,284.2h1V297.0h-1ZM348.0,288.7h2V300.1h-2ZM350.0,301.5h1V307.8h-1ZM352.0,310.0h1V320.8h-1ZM355.0,302.4h2V313.9h-2ZM357.0,305.2h2V310.8h-2ZM359.0,302.7h1V316.9h-1ZM361.0,298.6h2V306.4h-2ZM363.0,298.2h1V302.3h-1ZM365.0,294.6h2V303.5h-2ZM367.0,295.2h2V302.2h-2ZM369.0,310.5h1V323.7h-1ZM371.0,317.8h2V342.2h-2ZM373.0,332.8h2V339.8h-2ZM375.0,326.5h2V342.9h-2ZM377.0,328.7h2V342.8h-2ZM379.0,321.7h1V339.1h-1ZM382.0,318.2h1V330.3h-1ZM384.0,312.6h1V320.6h-1ZM386.0,302.5h2V314.6h-2ZM388.0,298.1h2V307.4h-2ZM390.0,298.0h2V304.2h-2ZM392.0,288.8h1V296.9h-1ZM394.0,283.3h2V292.6h-2ZM396.0,273.5h1V289.1h-1ZM398.0,281.5h2V290.8h-2ZM400.0,285.9h2V292.7h-2ZM402.0,287.5h1V294.8h-1ZM404.0,291.7h1V296.9h-1ZM407.0,291.9h1V295.6h-1ZM409.0,288.3h2V294.9h-2ZM411.0,281.2h2V288.5h-2ZM413.0,276.4h2V288.6h-2ZM415.0,275.2h1V280.4h-1ZM417.0,273.6h1V278.1h-1ZM419.0,268.9h2V283.4h-2ZM421.0,273.4h2V277.3h-2ZM423.0,263.9h2V271.6h-2ZM425.0,254.1h2V263.0h-2ZM427.0,264.2h2V268.4h-2ZM429.0,267.2h2V275.9h-2ZM431.0,278.7h2V286.6h-2ZM434.0,277.3h1V288.9h-1ZM436.0,280.8h1V287.2h-1ZM438.0,285.7h1V290.9h-1ZM440.0,287.9h2V293.2h-2ZM442.0,287.4h2V296.7h-2ZM444.0,279.2h1V287.1h-1ZM446.0,270.3h1V277.4h-1ZM448.0,264.0h1V271.4h-1ZM450.0,264.3h2V270.0h-2ZM452.0,260.9h1V269.1h-1ZM454.0,257.7h2V266.4h-2ZM456.0,261.0h1V264.1h-1ZM459.0,260.2h2V263.7h-2ZM461.0,253.0h2V268.0h-2ZM463.0,257.6h2V264.7h-2ZM465.0,254.2h2V262.4h-2ZM467.0,255.0h1V267.7h-1ZM469.0,257.1h2V261.9h-2ZM471.0,249.2h1V260.4h-1ZM473.0,246.4h2V255.6h-2ZM475.0,239.3h2V252.0h-2ZM477.0,234.6h1V250.2h-1ZM479.0,239.5h1V251.6h-1ZM481.0,250.3h1V257.5h-1ZM483.0,247.4h1V256.2h-1ZM486.0,246.3h2V256.5h-2ZM488.0,246.5h1V259.3h-1ZM490.0,248.5h2V256.8h-2ZM492.0,256.5h1V262.5h-1ZM494.0,257.8h1V266.9h-1ZM496.0,261.6h2V271.7h-2ZM498.0,262.5h2V271.2h-2ZM500.0,258.9h2V269.7h-2ZM502.0,256.4h1V263.6h-1ZM504.0,252.1h1V256.0h-1ZM506.0,245.4h2V252.5h-2ZM508.0,243.8h2V252.1h-2ZM511.0,247.4h1V254.4h-1ZM513.0,256.8h1V260.8h-1ZM515.0,261.4h2V267.9h-2ZM517.0,272.5h2V284.8h-2ZM519.0,282.3h1V288.7h-1ZM521.0,285.2h2V290.7h-2ZM523.0,283.8h1V289.6h-1ZM525.0,275.3h2V282.8h-2ZM527.0,273.0h1V278.1h-1ZM529.0,267.0h2V272.4h-2ZM531.0,267.4h2V273.4h-2ZM533.0,265.7h1V269.3h-1ZM535.0,270.3h1V278.1h-1ZM538.0,282.8h2V289.0h-2ZM540.0,284.4h1V288.9h-1ZM542.0,285.5h1V290.3h-1ZM544.0,285.5h2V291.5h-2ZM546.0,285.7h2V289.5h-2ZM548.0,287.3h2V297.0h-2ZM550.0,286.9h1V291.3h-1ZM552.0,288.9h2V295.2h-2ZM554.0,288.3h2V294.4h-2ZM556.0,284.3h2V292.5h-2ZM558.0,276.0h1V283.1h-1ZM560.0,277.9h2V284.2h-2ZM563.0,277.9h2V281.8h-2ZM565.0,277.8h1V281.5h-1ZM567.0,276.9h2V281.8h-2ZM569.0,277.3h2V283.2h-2ZM571.0,276.2h1V281.8h-1ZM573.0,274.4h1V281.0h-1ZM575.0,273.3h1V279.4h-1ZM577.0,269.3h1V275.1h-1ZM579.0,266.0h1V269.5h-1ZM581.0,265.2h2V270.6h-2ZM583.0,262.4h1V264.7h-1ZM585.0,261.4h1V267.8h-1ZM587.0,262.6h1V273.9h-1ZM590.0,270.8h1V279.2h-1ZM592.0,277.5h2V286.6h-2ZM594.0,288.2h1V299.4h-1ZM596.0,285.0h2V292.9h-2ZM598.0,281.0h2V291.1h-2ZM600.0,284.8h1V290.6h-1ZM602.0,284.6h2V291.6h-2ZM604.0,286.9h2V293.0h-2ZM606.0,287.7h1V290.0h-1ZM608.0,281.6h2V289.1h-2ZM610.0,283.5h2V287.1h-2ZM612.0,282.0h1V285.6h-1ZM615.0,282.8h2V287.3h-2ZM617.0,280.0h2V286.7h-2ZM619.0,279.3h1V284.3h-1ZM621.0,272.4h1V282.0h-1ZM623.0,267.9h2V271.4h-2ZM625.0,259.1h2V266.8h-2ZM627.0,260.5h1V265.3h-1ZM629.0,261.0h2V263.5h-2ZM631.0,261.6h2V265.8h-2ZM633.0,262.8h2V268.2h-2ZM635.0,261.4h2V266.2h-2ZM637.0,263.7h2V268.2h-2ZM639.0,262.8h1V268.2h-1ZM642.0,266.6h2V271.4h-2ZM644.0,270.8h2V272.8h-2ZM646.0,270.2h2V273.6h-2ZM648.0,266.5h2V273.4h-2ZM650.0,266.1h2V270.7h-2ZM652.0,263.5h2V270.7h-2ZM654.0,260.0h1V268.7h-1ZM656.0,257.7h2V270.5h-2ZM658.0,259.2h1V267.4h-1ZM660.0,261.2h2V267.7h-2ZM662.0,261.5h1V275.1h-1ZM664.0,268.7h1V275.6h-1ZM667.0,276.8h1V280.7h-1ZM669.0,280.1h2V284.5h-2ZM671.0,284.4h2V289.4h-2ZM673.0,286.3h2V302.9h-2ZM675.0,298.0h2V307.3h-2ZM677.0,305.5h2V317.5h-2ZM679.0,307.6h1V320.4h-1ZM681.0,307.3h1V318.5h-1ZM683.0,306.7h1V312.4h-1ZM685.0,302.6h1V311.7h-1ZM687.0,305.2h2V308.9h-2ZM689.0,300.3h2V307.4h-2ZM691.0,296.5h2V301.5h-2ZM694.0,297.8h1V301.4h-1ZM696.0,292.3h2V297.1h-2ZM698.0,297.6h2V305.1h-2ZM700.0,302.2h1V307.1h-1ZM702.0,305.1h2V310.3h-2ZM704.0,297.7h2V306.8h-2ZM706.0,290.2h1V298.9h-1ZM708.0,284.6h2V295.3h-2ZM710.0,288.6h1V298.5h-1ZM712.0,301.9h2V310.1h-2ZM714.0,306.1h2V315.7h-2ZM716.0,306.0h1V318.9h-1ZM719.0,304.4h2V307.8h-2ZM721.0,299.7h2V304.2h-2ZM723.0,298.5h1V303.3h-1ZM725.0,294.9h1V300.7h-1ZM727.0,289.0h1V296.3h-1ZM729.0,288.4h2V293.6h-2ZM731.0,288.3h1V293.8h-1ZM733.0,283.6h1V290.1h-1ZM735.0,277.3h1V280.0h-1ZM737.0,268.7h2V271.8h-2ZM739.0,266.1h1V268.7h-1ZM741.0,263.4h1V269.2h-1ZM743.0,262.6h2V270.6h-2ZM746.0,262.3h2V267.5h-2ZM748.0,266.4h1V271.4h-1ZM750.0,266.7h2V268.9h-2ZM752.0,266.4h2V268.4h-2ZM754.0,259.5h2V265.2h-2ZM756.0,255.3h2V259.0h-2ZM758.0,252.1h2V256.9h-2ZM760.0,253.0h1V256.9h-1ZM762.0,250.4h2V253.5h-2ZM764.0,246.6h2V253.7h-2ZM766.0,246.8h2V250.9h-2ZM768.0,248.3h2V251.2h-2ZM771.0,247.8h2V252.8h-2Z" fill="#0a0a48" shape-rendering="crispEdges"/><path d="M3.5,93V114M5.5,96V116M41.5,77V93M43.5,80V92M68.5,51V76M122.5,88V116M127.5,91V116M130.5,95V114M187.5,165V200M191.5,176V195M207.5,250V270M209.5,272V339M212.5,300V337M349.5,287V310M352.5,300V325M379.5,325V350M425.5,253V273M459.5,255V275M475.5,233V262M477.5,236V258M522.5,281V298M524.5,283V296M551.5,285V305M553.5,287V303M601.5,279V300M604.5,282V298M659.5,250V270M677.5,305V322M680.5,306V323M744.5,256V275M746.5,258V274" stroke="#ff00ff" stroke-width="1.5" shape-rendering="crispEdges"/><path d="M46.5,81V97M72.5,60V79M73.5,62V78M124.5,83V100M355.5,295V305M461.5,262V276M528.5,272V290M549.5,284V300M663.5,259V277M683.5,302V314" stroke="#00e0f0" stroke-width="1.5" shape-rendering="crispEdges"/><path d="M289,221 L965,270" stroke="#80a6ec" stroke-width="2.2" stroke-dasharray="7 4.8" fill="none"/><path d="M233,382 L289,221 L375,348" stroke="#3aa464" stroke-width="1.8" fill="none"/><path d="M375,348 L858.6,194.7" stroke="#30a062" stroke-width="3.1" fill="none"/><path d="M375,348 L477,232 L679,321 L858.6,194.7" stroke="#ff00ff" stroke-width="2" fill="none"/><path d="M477,232 L555,304 L659,249 L685,318" stroke="#ff00ff" stroke-width="2" stroke-dasharray="2 3" fill="none"/><path d="M4.5,80 L11.5,80 L8,87ZM42.5,67 L49.5,67 L46,74ZM67.5,46 L74.5,46 L71,53ZM424.5,246 L431.5,246 L428,253ZM458.5,237 L465.5,237 L462,244ZM476.5,228 L483.5,228 L480,235ZM630.5,247 L637.5,247 L634,254ZM745.5,243 L752.5,243 L749,250Z" fill="#ff0000"/><path d="M121.5,117 L128.5,117 L125,110ZM130.5,118 L137.5,118 L134,111ZM190.5,206 L197.5,206 L194,199ZM210.5,340 L217.5,340 L214,333ZM352.5,333 L359.5,333 L356,326ZM377.5,362 L384.5,362 L381,355ZM524.5,304 L531.5,304 L528,297ZM545.5,315 L552.5,315 L549,308ZM602.5,312 L609.5,312 L606,305ZM660.5,293 L667.5,293 L664,286ZM681.5,329 L688.5,329 L685,322Z" fill="#00d000"/><text x="290" y="215" font-family="Liberation Serif, serif" font-weight="bold" font-size="21" fill="#ff0000" stroke="#ff0000" stroke-width="0.8" text-anchor="middle">A</text><text x="371.5" y="369" font-family="Liberation Serif, serif" font-weight="bold" font-size="21" fill="#ff0000" stroke="#ff0000" stroke-width="0.8" text-anchor="middle">B</text><text x="860.5" y="183.5" font-family="Liberation Sans, sans-serif" font-weight="bold" font-size="20" fill="#ff0000" stroke="#ff0000" stroke-width="0.7" text-anchor="middle">C</text><text x="551.1" y="321.5" font-family="Liberation Serif, serif" font-size="21" fill="#ff20ff" text-anchor="middle" textLength="19" lengthAdjust="spacingAndGlyphs">[a]</text><text x="661.9" y="235" font-family="Liberation Serif, serif" font-size="21" fill="#ff20ff" text-anchor="middle" textLength="19.5" lengthAdjust="spacingAndGlyphs">[b]</text><text x="679.4" y="347" font-family="Liberation Serif, serif" font-size="21" fill="#ff20ff" text-anchor="middle" textLength="18" lengthAdjust="spacingAndGlyphs">[c]</text><path d="M3,435.5H969" stroke="#808080" stroke-width="1" shape-rendering="crispEdges"/><path d="M9.5,435.5V428.1M11.5,435.5V431.2M13.5,435.5V431.2M15.5,435.5V433.0M18.5,435.5V434.4M20.5,435.5V434.9M24.5,435.5V436.4M26.5,435.5V437.5M28.5,435.5V438.9M30.5,435.5V438.9M32.5,435.5V440.3M34.5,435.5V438.7M36.5,435.5V438.7M38.5,435.5V436.4M49.5,435.5V429.9M51.5,435.5V428.6M53.5,435.5V433.1M57.5,435.5V436.5M59.5,435.5V436.8M61.5,435.5V436.2M63.5,435.5V431.7M65.5,435.5V429.0M74.5,435.5V430.5M76.5,435.5V434.3M78.5,435.5V437.6M80.5,435.5V440.4M82.5,435.5V441.2M84.5,435.5V443.7M86.5,435.5V441.1M88.5,435.5V442.0M90.5,435.5V444.7M92.5,435.5V440.6M95.5,435.5V440.3M97.5,435.5V439.6M99.5,435.5V437.6M103.5,435.5V434.2M105.5,435.5V432.0M107.5,435.5V432.6M109.5,435.5V433.6M113.5,435.5V437.9M115.5,435.5V437.0M119.5,435.5V434.0M122.5,435.5V433.1M134.5,435.5V432.5M136.5,435.5V434.3M138.5,435.5V436.2M140.5,435.5V438.8M142.5,435.5V440.0M144.5,435.5V442.3M147.5,435.5V441.1M149.5,435.5V439.5M151.5,435.5V439.0M153.5,435.5V437.7M155.5,435.5V437.1M157.5,435.5V436.6M161.5,435.5V434.1M163.5,435.5V433.7M165.5,435.5V431.9M167.5,435.5V432.4M169.5,435.5V432.9M171.5,435.5V434.0M174.5,435.5V434.8M180.5,435.5V436.3M182.5,435.5V434.1M184.5,435.5V429.4M194.5,435.5V406.0M196.5,435.5V409.4M199.5,435.5V416.9M201.5,435.5V419.2M203.5,435.5V418.6M205.5,435.5V420.0M207.5,435.5V424.6M215.5,435.5V420.8M217.5,435.5V421.3M219.5,435.5V426.9M221.5,435.5V427.6M223.5,435.5V428.8M226.5,435.5V430.8M228.5,435.5V432.1M230.5,435.5V433.4M232.5,435.5V434.9M236.5,435.5V436.9M238.5,435.5V436.7M240.5,435.5V437.7M242.5,435.5V437.6M244.5,435.5V438.1M246.5,435.5V437.6M248.5,435.5V438.1M251.5,435.5V438.8M253.5,435.5V438.4M255.5,435.5V437.9M257.5,435.5V439.9M259.5,435.5V440.3M261.5,435.5V439.8M263.5,435.5V439.6M265.5,435.5V443.5M267.5,435.5V443.3M269.5,435.5V441.0M271.5,435.5V442.0M273.5,435.5V441.0M275.5,435.5V441.4M278.5,435.5V437.8M280.5,435.5V436.1M282.5,435.5V432.9M284.5,435.5V432.7M286.5,435.5V432.0M288.5,435.5V433.1M290.5,435.5V433.3M292.5,435.5V434.0M294.5,435.5V435.0M298.5,435.5V436.6M300.5,435.5V437.1M303.5,435.5V438.6M305.5,435.5V439.1M307.5,435.5V440.2M309.5,435.5V441.8M311.5,435.5V442.3M313.5,435.5V441.2M315.5,435.5V439.4M317.5,435.5V439.6M319.5,435.5V436.5M321.5,435.5V434.1M323.5,435.5V433.1M325.5,435.5V433.6M327.5,435.5V434.7M330.5,435.5V436.9M332.5,435.5V439.8M334.5,435.5V440.4M336.5,435.5V439.2M338.5,435.5V440.3M340.5,435.5V441.9M342.5,435.5V440.1M344.5,435.5V438.3M346.5,435.5V436.1M348.5,435.5V431.7M357.5,435.5V412.4M359.5,435.5V420.6M361.5,435.5V423.3M363.5,435.5V425.2M365.5,435.5V429.2M367.5,435.5V430.6M369.5,435.5V434.2M371.5,435.5V432.5M373.5,435.5V428.9M382.5,435.5V432.8M384.5,435.5V434.3M386.5,435.5V436.3M388.5,435.5V438.0M390.5,435.5V440.7M392.5,435.5V443.1M394.5,435.5V439.9M396.5,435.5V440.1M398.5,435.5V439.8M400.5,435.5V438.9M402.5,435.5V438.2M404.5,435.5V438.4M407.5,435.5V437.9M409.5,435.5V438.4M411.5,435.5V437.0M415.5,435.5V433.9M417.5,435.5V432.1M419.5,435.5V431.0M421.5,435.5V430.5M423.5,435.5V429.9M427.5,435.5V431.7M429.5,435.5V434.7M431.5,435.5V436.9M434.5,435.5V440.0M436.5,435.5V441.1M438.5,435.5V440.2M440.5,435.5V442.6M442.5,435.5V442.3M444.5,435.5V440.1M446.5,435.5V440.0M448.5,435.5V437.6M450.5,435.5V436.9M452.5,435.5V434.2M454.5,435.5V431.7M456.5,435.5V428.1M461.5,435.5V428.8M463.5,435.5V428.6M465.5,435.5V429.3M467.5,435.5V425.5M469.5,435.5V425.4M471.5,435.5V428.3M473.5,435.5V427.5M481.5,435.5V425.7M483.5,435.5V429.6M486.5,435.5V431.9M488.5,435.5V432.6M492.5,435.5V436.8M494.5,435.5V438.7M496.5,435.5V439.9M498.5,435.5V443.2M500.5,435.5V441.6M502.5,435.5V441.4M504.5,435.5V444.8M506.5,435.5V444.5M508.5,435.5V444.9M511.5,435.5V443.7M513.5,435.5V443.9M515.5,435.5V441.9M517.5,435.5V436.5M519.5,435.5V432.5M527.5,435.5V422.1M529.5,435.5V421.0M531.5,435.5V430.0M533.5,435.5V433.6M535.5,435.5V434.9M540.5,435.5V436.8M542.5,435.5V434.4M544.5,435.5V430.3M550.5,435.5V426.8M552.5,435.5V428.0M554.5,435.5V429.9M556.5,435.5V431.5M558.5,435.5V434.0M560.5,435.5V437.7M563.5,435.5V442.2M565.5,435.5V444.0M567.5,435.5V441.4M569.5,435.5V442.5M571.5,435.5V443.8M573.5,435.5V444.4M575.5,435.5V442.4M577.5,435.5V440.9M579.5,435.5V439.4M581.5,435.5V438.4M583.5,435.5V436.9M585.5,435.5V434.9M587.5,435.5V432.7M590.5,435.5V431.4M592.5,435.5V429.7M594.5,435.5V428.2M596.5,435.5V428.5M598.5,435.5V427.5M600.5,435.5V430.4M602.5,435.5V428.3M604.5,435.5V430.0M606.5,435.5V432.2M608.5,435.5V433.0M610.5,435.5V434.1M615.5,435.5V437.0M617.5,435.5V437.8M619.5,435.5V438.3M621.5,435.5V437.5M625.5,435.5V434.5M627.5,435.5V432.6M633.5,435.5V430.8M635.5,435.5V433.5M639.5,435.5V437.4M642.5,435.5V438.3M644.5,435.5V438.7M646.5,435.5V439.9M648.5,435.5V442.1M650.5,435.5V438.6M654.5,435.5V433.7M656.5,435.5V432.7M658.5,435.5V431.6M662.5,435.5V432.5M664.5,435.5V434.2M669.5,435.5V434.5M671.5,435.5V433.0M673.5,435.5V429.7M675.5,435.5V425.8M685.5,435.5V420.9M687.5,435.5V415.7M689.5,435.5V424.4M691.5,435.5V432.9M696.5,435.5V437.2M698.5,435.5V437.3M700.5,435.5V438.3M702.5,435.5V437.8M704.5,435.5V438.1M706.5,435.5V437.0M708.5,435.5V437.1M710.5,435.5V436.1M719.5,435.5V434.9M725.5,435.5V437.6M727.5,435.5V438.6M729.5,435.5V441.2M731.5,435.5V441.9M733.5,435.5V441.0M735.5,435.5V437.7M739.5,435.5V432.4M741.5,435.5V432.4M750.5,435.5V434.0M752.5,435.5V436.3M754.5,435.5V436.1M760.5,435.5V433.9M762.5,435.5V433.7M764.5,435.5V432.1M766.5,435.5V430.4M768.5,435.5V432.0M771.5,435.5V429.8" stroke="#1ab4f4" stroke-width="1.3"/><path d="M3.5,435.5V424.6M5.5,435.5V424.8M7.5,435.5V423.5M40.5,435.5V429.2M43.5,435.5V429.9M45.5,435.5V429.0M47.5,435.5V429.4M67.5,435.5V428.3M70.5,435.5V426.0M72.5,435.5V426.1M124.5,435.5V430.0M126.5,435.5V431.4M128.5,435.5V430.0M130.5,435.5V429.9M132.5,435.5V429.5M186.5,435.5V410.6M188.5,435.5V410.5M190.5,435.5V407.5M192.5,435.5V407.1M209.5,435.5V426.4M211.5,435.5V425.7M213.5,435.5V428.7M350.5,435.5V418.6M352.5,435.5V418.2M355.5,435.5V419.8M375.5,435.5V427.3M377.5,435.5V428.3M379.5,435.5V428.0M425.5,435.5V433.0M459.5,435.5V427.0M475.5,435.5V428.4M477.5,435.5V425.7M479.5,435.5V428.3M521.5,435.5V419.2M523.5,435.5V418.3M525.5,435.5V418.7M546.5,435.5V431.1M548.5,435.5V429.1M629.5,435.5V428.3M631.5,435.5V429.5M660.5,435.5V428.0M677.5,435.5V415.6M679.5,435.5V415.8M681.5,435.5V416.2M683.5,435.5V417.0M743.5,435.5V430.4M746.5,435.5V431.7M748.5,435.5V429.5" stroke="#ff00ff" stroke-width="1.6"/><path d="M3,430.5H969" stroke="#f01818" stroke-width="1.5" stroke-dasharray="7.3 4.7" stroke-dashoffset="2.7" shape-rendering="crispEdges"/><path d="M3.0,424.0 L4.5,424.2 L6.0,424.5 L7.5,425.0 L9.0,425.7 L10.5,426.6 L12.0,427.7 L13.5,429.1 L15.0,430.5 L16.5,431.8 L18.0,432.9 L19.5,433.7 L21.0,434.4 L22.5,434.8 L24.0,435.2 L25.5,435.6 L27.0,436.1 L28.5,436.5 L30.0,436.9 L31.5,437.4 L33.0,437.8 L34.5,438.1 L36.0,438.3 L37.5,438.3 L39.0,437.9 L40.5,437.2 L42.0,436.2 L43.5,435.0 L45.0,433.5 L46.5,432.0 L48.0,430.9 L49.5,430.2 L51.0,430.0 L52.5,430.2 L54.0,431.1 L55.5,432.3 L57.0,433.6 L58.5,434.7 L60.0,435.6 L61.5,436.2 L63.0,436.1 L64.5,435.3 L66.0,433.8 L67.5,432.0 L69.0,430.2 L70.5,428.6 L72.0,427.5 L73.5,427.4 L75.0,428.2 L76.5,429.5 L78.0,431.3 L79.5,433.5 L81.0,435.7 L82.5,437.6 L84.0,439.1 L85.5,440.1 L87.0,440.8 L88.5,441.1 L90.0,441.2 L91.5,441.3 L93.0,441.2 L94.5,440.9 L96.0,440.5 L97.5,439.9 L99.0,439.0 L100.5,438.2 L102.0,437.3 L103.5,436.4 L105.0,435.5 L106.5,434.6 L108.0,433.9 L109.5,433.6 L111.0,433.7 L112.5,434.2 L114.0,434.9 L115.5,435.8 L117.0,436.2 L118.5,436.3 L120.0,436.1 L121.5,435.4 L123.0,434.6 L124.5,433.7 L126.0,432.9 L127.5,432.0 L129.0,431.0 L130.5,430.5 L132.0,430.3 L133.5,430.6 L135.0,431.2 L136.5,432.2 L138.0,433.2 L139.5,434.2 L141.0,435.3 L142.5,436.4 L144.0,437.4 L145.5,438.5 L147.0,439.1 L148.5,439.5 L150.0,439.6 L151.5,439.4 L153.0,438.9 L154.5,438.4 L156.0,438.0 L157.5,437.5 L159.0,436.9 L160.5,436.4 L162.0,435.8 L163.5,435.2 L165.0,434.5 L166.5,433.9 L168.0,433.5 L169.5,433.2 L171.0,433.2 L172.5,433.3 L174.0,433.7 L175.5,434.1 L177.0,434.6 L178.5,435.0 L180.0,435.4 L181.5,435.8 L183.0,435.6 L184.5,434.7 L186.0,433.1 L187.5,430.8 L189.0,427.8 L190.5,424.6 L192.0,421.3 L193.5,418.4 L195.0,416.5 L196.5,415.5 L198.0,415.4 L199.5,416.4 L201.0,418.0 L202.5,419.7 L204.0,421.2 L205.5,422.6 L207.0,423.7 L208.5,424.6 L210.0,425.1 L211.5,425.4 L213.0,425.6 L214.5,425.6 L216.0,425.6 L217.5,425.6 L219.0,425.7 L220.5,425.8 L222.0,426.0 L223.5,426.5 L225.0,427.3 L226.5,428.3 L228.0,429.5 L229.5,430.7 L231.0,431.9 L232.5,432.9 L234.0,433.8 L235.5,434.6 L237.0,435.3 L238.5,435.8 L240.0,436.2 L241.5,436.5 L243.0,436.8 L244.5,436.9 L246.0,437.0 L247.5,437.2 L249.0,437.3 L250.5,437.4 L252.0,437.6 L253.5,437.7 L255.0,437.8 L256.5,437.9 L258.0,438.1 L259.5,438.2 L261.0,438.4 L262.5,438.7 L264.0,439.0 L265.5,439.4 L267.0,439.9 L268.5,440.4 L270.0,440.7 L271.5,441.0 L273.0,441.2 L274.5,441.3 L276.0,441.0 L277.5,440.4 L279.0,439.6 L280.5,438.5 L282.0,437.2 L283.5,435.9 L285.0,434.7 L286.5,433.8 L288.0,433.3 L289.5,433.1 L291.0,433.3 L292.5,433.7 L294.0,434.0 L295.5,434.4 L297.0,434.8 L298.5,435.1 L300.0,435.5 L301.5,435.9 L303.0,436.4 L304.5,436.8 L306.0,437.2 L307.5,437.7 L309.0,438.2 L310.5,438.7 L312.0,439.2 L313.5,439.6 L315.0,439.9 L316.5,439.9 L318.0,439.6 L319.5,439.0 L321.0,438.0 L322.5,436.9 L324.0,435.9 L325.5,434.9 L327.0,434.3 L328.5,434.2 L330.0,434.6 L331.5,435.3 L333.0,436.3 L334.5,437.3 L336.0,438.1 L337.5,438.6 L339.0,438.8 L340.5,438.9 L342.0,439.1 L343.5,439.0 L345.0,438.8 L346.5,438.3 L348.0,437.3 L349.5,435.7 L351.0,433.5 L352.5,430.9 L354.0,427.7 L355.5,424.6 L357.0,422.1 L358.5,420.7 L360.0,420.2 L361.5,420.8 L363.0,422.3 L364.5,424.4 L366.0,426.4 L367.5,428.3 L369.0,430.2 L370.5,431.8 L372.0,432.7 L373.5,432.9 L375.0,432.7 L376.5,432.2 L378.0,431.4 L379.5,430.8 L381.0,430.6 L382.5,430.9 L384.0,431.6 L385.5,432.6 L387.0,433.9 L388.5,435.2 L390.0,436.3 L391.5,437.3 L393.0,438.3 L394.5,439.1 L396.0,439.6 L397.5,439.8 L399.0,439.8 L400.5,439.5 L402.0,439.1 L403.5,438.9 L405.0,438.6 L406.5,438.3 L408.0,438.1 L409.5,437.9 L411.0,437.7 L412.5,437.3 L414.0,436.7 L415.5,436.1 L417.0,435.2 L418.5,434.3 L420.0,433.4 L421.5,432.6 L423.0,431.7 L424.5,431.0 L426.0,430.7 L427.5,430.9 L429.0,431.4 L430.5,432.3 L432.0,433.5 L433.5,434.8 L435.0,436.0 L436.5,437.2 L438.0,438.3 L439.5,439.2 L441.0,440.0 L442.5,440.5 L444.0,440.6 L445.5,440.6 L447.0,440.2 L448.5,439.6 L450.0,438.9 L451.5,438.0 L453.0,437.1 L454.5,436.0 L456.0,434.8 L457.5,433.5 L459.0,432.3 L460.5,431.3 L462.0,430.5 L463.5,429.8 L465.0,429.3 L466.5,429.0 L468.0,428.9 L469.5,428.8 L471.0,428.9 L472.5,428.9 L474.0,428.8 L475.5,428.4 L477.0,427.7 L478.5,427.2 L480.0,426.9 L481.5,426.9 L483.0,427.4 L484.5,428.3 L486.0,429.4 L487.5,430.5 L489.0,431.6 L490.5,432.8 L492.0,433.9 L493.5,435.0 L495.0,436.0 L496.5,437.0 L498.0,437.9 L499.5,438.8 L501.0,439.6 L502.5,440.4 L504.0,441.0 L505.5,441.5 L507.0,441.8 L508.5,441.9 L510.0,441.9 L511.5,441.7 L513.0,441.4 L514.5,441.1 L516.0,440.5 L517.5,439.6 L519.0,438.3 L520.5,436.6 L522.0,434.4 L523.5,432.0 L525.0,429.6 L526.5,427.3 L528.0,425.8 L529.5,425.1 L531.0,425.2 L532.5,426.4 L534.0,428.3 L535.5,430.3 L537.0,432.1 L538.5,433.7 L540.0,435.0 L541.5,435.5 L543.0,435.4 L544.5,434.8 L546.0,433.9 L547.5,432.7 L549.0,431.5 L550.5,430.6 L552.0,430.0 L553.5,429.8 L555.0,429.9 L556.5,430.3 L558.0,430.9 L559.5,431.9 L561.0,433.2 L562.5,434.7 L564.0,436.4 L565.5,438.1 L567.0,439.4 L568.5,440.4 L570.0,441.1 L571.5,441.4 L573.0,441.7 L574.5,441.9 L576.0,441.9 L577.5,441.7 L579.0,441.4 L580.5,440.7 L582.0,440.0 L583.5,439.1 L585.0,438.2 L586.5,437.1 L588.0,436.1 L589.5,435.1 L591.0,434.2 L592.5,433.4 L594.0,432.7 L595.5,432.1 L597.0,431.5 L598.5,431.0 L600.0,430.7 L601.5,430.4 L603.0,430.3 L604.5,430.5 L606.0,430.8 L607.5,431.3 L609.0,432.0 L610.5,432.7 L612.0,433.5 L613.5,434.2 L615.0,434.9 L616.5,435.6 L618.0,436.3 L619.5,436.9 L621.0,437.2 L622.5,437.2 L624.0,437.0 L625.5,436.4 L627.0,435.6 L628.5,434.8 L630.0,434.0 L631.5,433.3 L633.0,432.5 L634.5,432.2 L636.0,432.2 L637.5,432.7 L639.0,433.6 L640.5,434.8 L642.0,435.8 L643.5,436.8 L645.0,437.6 L646.5,438.2 L648.0,438.9 L649.5,439.2 L651.0,439.1 L652.5,438.6 L654.0,437.7 L655.5,436.5 L657.0,435.3 L658.5,434.1 L660.0,433.1 L661.5,432.4 L663.0,432.2 L664.5,432.4 L666.0,432.9 L667.5,433.9 L669.0,434.6 L670.5,434.8 L672.0,434.5 L673.5,433.8 L675.0,432.7 L676.5,431.0 L678.0,429.1 L679.5,426.9 L681.0,424.6 L682.5,422.4 L684.0,420.5 L685.5,419.5 L687.0,419.6 L688.5,420.4 L690.0,422.1 L691.5,424.7 L693.0,427.5 L694.5,430.2 L696.0,432.6 L697.5,434.7 L699.0,436.0 L700.5,436.6 L702.0,437.0 L703.5,437.2 L705.0,437.2 L706.5,437.2 L708.0,437.1 L709.5,436.9 L711.0,436.7 L712.5,436.5 L714.0,436.1 L715.5,435.8 L717.0,435.6 L718.5,435.4 L720.0,435.2 L721.5,435.1 L723.0,435.2 L724.5,435.4 L726.0,435.8 L727.5,436.4 L729.0,437.1 L730.5,437.8 L732.0,438.6 L733.5,439.0 L735.0,439.1 L736.5,438.8 L738.0,438.0 L739.5,436.9 L741.0,435.6 L742.5,434.4 L744.0,433.5 L745.5,432.7 L747.0,432.0 L748.5,431.9 L750.0,432.1 L751.5,432.7 L753.0,433.6 L754.5,434.6 L756.0,435.3 L757.5,435.6 L759.0,435.6 L760.5,435.3 L762.0,435.0 L763.5,434.5 L765.0,434.1 L766.5,433.6 L768.0,433.0 L769.5,432.8 L771.0,432.5" fill="none" stroke="#ff8c1a" stroke-width="2"/><path d="M3.0,478.9 L4.0,479.9 L5.0,480.7 L6.0,481.4 L7.0,481.2 L8.0,481.0 L9.0,481.8 L10.0,482.6 L11.0,482.7 L12.0,482.9 L13.0,482.6 L14.0,482.3 L15.0,482.4 L16.0,482.6 L17.0,482.4 L18.0,482.3 L19.0,482.2 L20.0,482.2 L21.0,482.8 L22.0,483.5 L23.0,483.9 L24.0,484.4 L25.0,483.8 L26.0,483.2 L27.0,483.4 L28.0,483.7 L29.0,482.3 L30.0,481.0 L31.0,480.4 L32.0,479.7 L33.0,478.9 L34.0,478.0 L35.0,478.5 L36.0,479.0 L37.0,478.0 L38.0,477.1 L39.0,477.0 L40.0,476.9 L41.0,477.4 L42.0,477.8 L43.0,477.9 L44.0,477.9 L45.0,479.0 L46.0,480.1 L47.0,481.0 L48.0,481.9 L49.0,481.9 L50.0,482.0 L51.0,483.5 L52.0,485.0 L53.0,484.8 L54.0,484.6 L55.0,484.9 L56.0,485.2 L57.0,485.2 L58.0,485.3 L59.0,482.5 L60.0,479.7 L61.0,478.7 L62.0,477.7 L63.0,475.1 L64.0,472.6 L65.0,472.1 L66.0,471.7 L67.0,472.3 L68.0,472.9 L69.0,473.9 L70.0,475.0 L71.0,475.5 L72.0,476.0 L73.0,476.4 L74.0,476.8 L75.0,478.2 L76.0,479.5 L77.0,479.1 L78.0,478.6 L79.0,479.6 L80.0,480.6 L81.0,480.3 L82.0,479.9 L83.0,481.1 L84.0,482.4 L85.0,482.5 L86.0,482.7 L87.0,482.7 L88.0,482.8 L89.0,483.0 L90.0,483.2 L91.0,483.2 L92.0,483.2 L93.0,483.5 L94.0,483.9 L95.0,481.5 L96.0,479.0 L97.0,476.9 L98.0,474.8 L99.0,475.2 L100.0,475.5 L101.0,475.5 L102.0,475.5 L103.0,477.2 L104.0,478.8 L105.0,479.5 L106.0,480.2 L107.0,480.5 L108.0,480.7 L108.0,481.5 L107.0,482.8 L106.0,484.2 L105.0,485.0 L104.0,485.8 L103.0,487.3 L102.0,488.8 L101.0,489.3 L100.0,489.8 L99.0,489.3 L98.0,488.7 L97.0,488.9 L96.0,489.1 L95.0,488.3 L94.0,487.5 L93.0,486.7 L92.0,485.9 L91.0,485.7 L90.0,485.5 L89.0,485.3 L88.0,485.2 L87.0,485.5 L86.0,485.9 L85.0,484.7 L84.0,483.5 L83.0,484.0 L82.0,484.4 L81.0,483.5 L80.0,482.7 L79.0,482.6 L78.0,482.5 L77.0,482.9 L76.0,483.2 L75.0,485.3 L74.0,487.5 L73.0,489.2 L72.0,490.9 L71.0,491.8 L70.0,492.8 L69.0,493.5 L68.0,494.2 L67.0,493.9 L66.0,493.7 L65.0,492.7 L64.0,491.7 L63.0,492.1 L62.0,492.5 L61.0,491.3 L60.0,490.0 L59.0,490.0 L58.0,490.1 L57.0,490.1 L56.0,490.1 L55.0,490.2 L54.0,490.3 L53.0,491.1 L52.0,491.8 L51.0,491.8 L50.0,491.9 L49.0,492.3 L48.0,492.8 L47.0,492.6 L46.0,492.4 L45.0,492.5 L44.0,492.6 L43.0,491.3 L42.0,490.0 L41.0,489.6 L40.0,489.3 L39.0,489.2 L38.0,489.2 L37.0,489.3 L36.0,489.3 L35.0,488.0 L34.0,486.7 L33.0,487.2 L32.0,487.7 L31.0,487.7 L30.0,487.6 L29.0,488.1 L28.0,488.5 L27.0,489.8 L26.0,491.0 L25.0,490.7 L24.0,490.3 L23.0,489.8 L22.0,489.2 L21.0,489.8 L20.0,490.4 L19.0,489.3 L18.0,488.2 L17.0,488.8 L16.0,489.4 L15.0,488.7 L14.0,488.0 L13.0,488.4 L12.0,488.8 L11.0,488.1 L10.0,487.5 L9.0,487.6 L8.0,487.6 L7.0,488.6 L6.0,489.6 L5.0,488.8 L4.0,487.9 L3.0,488.4ZM262.0,482.4 L263.0,482.9 L264.0,483.3 L265.0,482.5 L266.0,481.8 L267.0,479.0 L268.0,476.2 L269.0,475.2 L270.0,474.3 L271.0,474.0 L272.0,473.8 L273.0,474.7 L274.0,475.5 L275.0,475.8 L276.0,476.1 L277.0,476.4 L278.0,476.6 L279.0,476.8 L280.0,477.0 L281.0,477.3 L282.0,477.7 L283.0,477.3 L284.0,477.0 L285.0,475.7 L286.0,474.5 L287.0,474.1 L288.0,473.8 L289.0,473.8 L290.0,473.8 L291.0,473.8 L292.0,473.8 L293.0,474.4 L294.0,475.0 L295.0,474.8 L296.0,474.5 L297.0,475.5 L298.0,476.4 L299.0,477.0 L300.0,477.6 L301.0,477.9 L302.0,478.3 L303.0,479.8 L304.0,481.3 L305.0,480.7 L306.0,480.0 L307.0,479.6 L308.0,479.2 L309.0,478.2 L310.0,477.3 L311.0,476.6 L312.0,475.9 L313.0,476.3 L314.0,476.7 L315.0,477.5 L316.0,478.2 L317.0,479.1 L318.0,480.0 L319.0,480.3 L320.0,480.6 L321.0,480.4 L322.0,480.2 L323.0,481.3 L324.0,482.5 L325.0,483.1 L326.0,483.6 L326.0,484.0 L325.0,483.7 L324.0,483.3 L323.0,484.3 L322.0,485.2 L321.0,485.3 L320.0,485.4 L319.0,485.4 L318.0,485.3 L317.0,486.1 L316.0,486.9 L315.0,486.7 L314.0,486.6 L313.0,485.7 L312.0,484.9 L311.0,484.4 L310.0,484.0 L309.0,484.3 L308.0,484.6 L307.0,484.1 L306.0,483.6 L305.0,484.2 L304.0,484.8 L303.0,484.8 L302.0,484.9 L301.0,484.4 L300.0,483.9 L299.0,483.6 L298.0,483.2 L297.0,484.5 L296.0,485.8 L295.0,485.3 L294.0,484.8 L293.0,485.7 L292.0,486.5 L291.0,486.1 L290.0,485.6 L289.0,486.4 L288.0,487.2 L287.0,487.1 L286.0,487.1 L285.0,486.6 L284.0,486.2 L283.0,487.0 L282.0,487.7 L281.0,487.9 L280.0,488.1 L279.0,487.1 L278.0,486.2 L277.0,486.7 L276.0,487.2 L275.0,486.4 L274.0,485.6 L273.0,485.6 L272.0,485.6 L271.0,485.2 L270.0,484.8 L269.0,484.4 L268.0,484.1 L267.0,484.0 L266.0,483.8 L265.0,483.7 L264.0,483.6 L263.0,483.1 L262.0,482.6ZM390.0,481.3 L391.0,480.3 L392.0,479.4 L393.0,479.3 L394.0,479.2 L395.0,477.2 L396.0,475.3 L397.0,475.4 L398.0,475.4 L399.0,476.1 L400.0,476.8 L401.0,478.3 L402.0,479.9 L403.0,480.5 L404.0,481.1 L405.0,481.2 L406.0,481.3 L407.0,481.2 L408.0,481.1 L409.0,480.1 L410.0,479.1 L411.0,479.5 L412.0,480.0 L413.0,479.4 L414.0,478.9 L415.0,478.9 L416.0,478.9 L417.0,479.2 L418.0,479.6 L419.0,480.1 L420.0,480.6 L421.0,480.4 L422.0,480.2 L423.0,479.0 L424.0,477.8 L425.0,477.9 L426.0,478.1 L427.0,478.7 L428.0,479.4 L429.0,480.8 L430.0,482.2 L431.0,483.2 L432.0,484.2 L433.0,484.7 L433.0,484.9 L432.0,486.1 L431.0,487.2 L430.0,488.4 L429.0,489.5 L428.0,490.7 L427.0,490.6 L426.0,490.6 L425.0,490.6 L424.0,490.6 L423.0,490.4 L422.0,490.2 L421.0,489.2 L420.0,488.1 L419.0,488.4 L418.0,488.6 L417.0,488.3 L416.0,487.9 L415.0,487.4 L414.0,486.9 L413.0,487.2 L412.0,487.6 L411.0,487.3 L410.0,487.0 L409.0,486.1 L408.0,485.2 L407.0,484.4 L406.0,483.6 L405.0,483.1 L404.0,482.6 L403.0,483.0 L402.0,483.3 L401.0,484.7 L400.0,486.1 L399.0,486.6 L398.0,487.0 L397.0,487.4 L396.0,487.7 L395.0,487.4 L394.0,487.1 L393.0,485.3 L392.0,483.4 L391.0,483.6 L390.0,483.7ZM445.0,483.7 L446.0,482.9 L447.0,480.9 L448.0,479.0 L449.0,479.0 L450.0,479.0 L451.0,478.5 L452.0,478.0 L453.0,478.2 L454.0,478.4 L455.0,478.9 L456.0,479.4 L457.0,479.6 L458.0,479.8 L459.0,479.9 L460.0,480.0 L461.0,480.4 L462.0,480.9 L463.0,480.7 L464.0,480.5 L465.0,480.3 L466.0,480.2 L467.0,479.6 L468.0,479.0 L469.0,478.7 L470.0,478.3 L471.0,477.3 L472.0,476.3 L473.0,476.6 L474.0,476.9 L475.0,475.8 L476.0,474.6 L477.0,475.1 L478.0,475.6 L479.0,476.4 L480.0,477.1 L481.0,477.8 L482.0,478.5 L483.0,479.0 L484.0,479.6 L485.0,478.8 L486.0,478.0 L487.0,478.7 L488.0,479.5 L489.0,479.8 L490.0,480.2 L491.0,480.7 L492.0,481.1 L493.0,481.3 L494.0,481.5 L495.0,482.5 L496.0,483.5 L497.0,483.4 L498.0,483.4 L499.0,484.2 L500.0,484.9 L501.0,486.0 L501.0,486.4 L500.0,485.9 L499.0,485.4 L498.0,484.8 L497.0,485.6 L496.0,486.4 L495.0,487.1 L494.0,487.8 L493.0,487.2 L492.0,486.5 L491.0,487.1 L490.0,487.7 L489.0,488.3 L488.0,488.8 L487.0,488.5 L486.0,488.2 L485.0,487.8 L484.0,487.4 L483.0,487.2 L482.0,487.1 L481.0,487.5 L480.0,487.9 L479.0,489.5 L478.0,491.0 L477.0,490.9 L476.0,490.9 L475.0,491.9 L474.0,492.9 L473.0,493.3 L472.0,493.7 L471.0,493.3 L470.0,492.9 L469.0,492.2 L468.0,491.5 L467.0,490.9 L466.0,490.3 L465.0,490.7 L464.0,491.1 L463.0,490.4 L462.0,489.7 L461.0,489.7 L460.0,489.6 L459.0,489.5 L458.0,489.5 L457.0,488.9 L456.0,488.4 L455.0,488.3 L454.0,488.2 L453.0,488.0 L452.0,487.8 L451.0,487.1 L450.0,486.4 L449.0,486.4 L448.0,486.4 L447.0,485.5 L446.0,484.7 L445.0,484.4ZM576.0,483.2 L577.0,483.4 L578.0,483.5 L579.0,483.2 L580.0,482.8 L581.0,481.7 L582.0,480.6 L583.0,479.9 L584.0,479.1 L585.0,480.5 L586.0,481.9 L587.0,482.5 L588.0,483.1 L588.0,485.2 L587.0,486.3 L586.0,487.3 L585.0,487.5 L584.0,487.7 L583.0,487.3 L582.0,486.9 L581.0,485.7 L580.0,484.5 L579.0,484.7 L578.0,484.9 L577.0,484.3 L576.0,483.8ZM620.0,483.5 L621.0,482.4 L622.0,481.2 L623.0,479.0 L624.0,476.9 L625.0,476.5 L626.0,476.1 L627.0,475.8 L628.0,475.5 L629.0,476.8 L630.0,478.1 L631.0,478.2 L632.0,478.3 L633.0,478.6 L634.0,479.0 L635.0,478.6 L636.0,478.2 L637.0,478.4 L638.0,478.6 L639.0,479.9 L640.0,481.2 L641.0,481.3 L641.0,481.9 L640.0,482.7 L639.0,483.7 L638.0,484.6 L637.0,484.8 L636.0,484.9 L635.0,484.9 L634.0,484.9 L633.0,485.2 L632.0,485.6 L631.0,486.5 L630.0,487.3 L629.0,487.5 L628.0,487.7 L627.0,486.7 L626.0,485.7 L625.0,486.1 L624.0,486.5 L623.0,485.5 L622.0,484.6 L621.0,484.6 L620.0,484.6ZM645.0,481.7 L646.0,481.3 L647.0,481.2 L648.0,481.1 L649.0,480.0 L650.0,479.0 L651.0,478.4 L652.0,477.8 L653.0,477.3 L654.0,476.8 L655.0,476.1 L656.0,475.3 L657.0,475.1 L658.0,474.8 L659.0,475.2 L660.0,475.6 L661.0,475.5 L662.0,475.4 L663.0,476.3 L664.0,477.2 L665.0,478.6 L666.0,480.0 L666.0,480.4 L665.0,481.1 L664.0,481.7 L663.0,483.0 L662.0,484.3 L661.0,485.1 L660.0,486.0 L659.0,485.8 L658.0,485.5 L657.0,485.1 L656.0,484.6 L655.0,484.6 L654.0,484.5 L653.0,484.7 L652.0,484.8 L651.0,484.8 L650.0,484.8 L649.0,483.4 L648.0,481.9 L647.0,482.2 L646.0,482.5 L645.0,481.8ZM734.0,481.0 L735.0,478.5 L736.0,476.1 L737.0,475.0 L738.0,473.9 L739.0,474.1 L740.0,474.4 L741.0,473.9 L742.0,473.4 L743.0,474.3 L744.0,475.2 L745.0,475.3 L746.0,475.5 L747.0,475.6 L748.0,475.6 L749.0,475.8 L750.0,476.0 L751.0,477.6 L752.0,479.2 L753.0,480.7 L754.0,482.1 L755.0,480.9 L756.0,479.6 L757.0,478.3 L758.0,477.0 L759.0,476.9 L760.0,476.8 L761.0,476.6 L762.0,476.3 L763.0,477.6 L764.0,478.9 L765.0,478.8 L766.0,478.8 L767.0,479.7 L768.0,480.6 L769.0,480.3 L770.0,480.0 L771.0,480.0 L771.0,487.3 L770.0,487.3 L769.0,487.4 L768.0,487.5 L767.0,487.8 L766.0,488.0 L765.0,487.1 L764.0,486.2 L763.0,486.6 L762.0,487.0 L761.0,486.0 L760.0,485.1 L759.0,485.8 L758.0,486.5 L757.0,486.1 L756.0,485.7 L755.0,485.5 L754.0,485.4 L753.0,485.9 L752.0,486.4 L751.0,485.9 L750.0,485.5 L749.0,484.8 L748.0,484.2 L747.0,484.1 L746.0,484.0 L745.0,484.1 L744.0,484.3 L743.0,483.7 L742.0,483.0 L741.0,481.9 L740.0,480.9 L739.0,480.9 L738.0,480.9 L737.0,480.7 L736.0,480.5 L735.0,480.8 L734.0,481.1Z" fill="#a0f0a0"/><path d="M109.0,481.5 L110.0,482.3 L111.0,483.2 L112.0,484.1 L113.0,484.4 L114.0,484.7 L115.0,485.8 L116.0,486.8 L117.0,486.4 L118.0,485.9 L119.0,485.8 L120.0,485.7 L121.0,486.0 L122.0,486.4 L123.0,487.4 L124.0,488.4 L125.0,489.0 L126.0,489.6 L127.0,489.2 L128.0,488.9 L129.0,489.1 L130.0,489.4 L131.0,488.8 L132.0,488.3 L133.0,487.9 L134.0,487.5 L135.0,486.3 L136.0,485.1 L137.0,484.9 L138.0,484.8 L139.0,485.0 L140.0,485.2 L141.0,485.6 L142.0,486.0 L143.0,485.7 L144.0,485.5 L145.0,485.8 L146.0,486.1 L147.0,486.6 L148.0,487.1 L149.0,488.1 L150.0,489.1 L151.0,488.7 L152.0,488.3 L153.0,488.9 L154.0,489.5 L155.0,489.5 L156.0,489.4 L157.0,489.4 L158.0,489.3 L159.0,489.0 L160.0,488.6 L161.0,489.2 L162.0,489.8 L163.0,489.5 L164.0,489.1 L165.0,488.3 L166.0,487.6 L167.0,487.7 L168.0,487.8 L169.0,487.8 L170.0,487.8 L171.0,488.1 L172.0,488.4 L173.0,488.4 L174.0,488.5 L175.0,487.8 L176.0,487.2 L177.0,488.1 L178.0,489.1 L179.0,489.7 L180.0,490.4 L181.0,490.7 L182.0,490.9 L183.0,492.0 L184.0,493.1 L185.0,493.3 L186.0,493.5 L187.0,493.9 L188.0,494.3 L189.0,494.4 L190.0,494.5 L191.0,494.1 L192.0,493.6 L193.0,490.0 L194.0,486.4 L195.0,485.5 L196.0,484.6 L197.0,486.7 L198.0,488.7 L199.0,489.8 L200.0,491.0 L201.0,491.7 L202.0,492.5 L203.0,493.4 L204.0,494.3 L205.0,493.9 L206.0,493.4 L207.0,494.1 L208.0,494.9 L209.0,495.4 L210.0,496.0 L211.0,496.5 L212.0,497.0 L213.0,496.3 L214.0,495.7 L215.0,495.2 L216.0,494.7 L217.0,494.6 L218.0,494.6 L219.0,494.8 L220.0,495.0 L221.0,494.2 L222.0,493.4 L223.0,492.2 L224.0,491.0 L225.0,489.8 L226.0,488.6 L227.0,487.8 L228.0,487.0 L229.0,488.2 L230.0,489.4 L231.0,489.2 L232.0,489.0 L233.0,489.4 L234.0,489.8 L235.0,488.8 L236.0,487.7 L237.0,487.7 L238.0,487.7 L239.0,488.3 L240.0,488.8 L241.0,488.5 L242.0,488.3 L243.0,488.2 L244.0,488.1 L245.0,487.5 L246.0,487.0 L247.0,486.6 L248.0,486.2 L249.0,486.3 L250.0,486.4 L251.0,486.6 L252.0,486.8 L253.0,486.1 L254.0,485.3 L255.0,485.5 L256.0,485.7 L257.0,485.1 L258.0,484.6 L259.0,484.8 L260.0,485.0 L261.0,483.7 L261.0,481.8 L260.0,481.0 L259.0,481.0 L258.0,480.9 L257.0,480.4 L256.0,479.8 L255.0,479.4 L254.0,479.0 L253.0,479.8 L252.0,480.6 L251.0,479.7 L250.0,478.8 L249.0,477.9 L248.0,476.9 L247.0,477.4 L246.0,477.8 L245.0,477.6 L244.0,477.3 L243.0,476.8 L242.0,476.4 L241.0,475.6 L240.0,474.9 L239.0,474.5 L238.0,474.1 L237.0,473.5 L236.0,473.0 L235.0,471.4 L234.0,469.8 L233.0,468.8 L232.0,467.9 L231.0,468.4 L230.0,469.0 L229.0,470.0 L228.0,470.9 L227.0,469.6 L226.0,468.4 L225.0,467.8 L224.0,467.3 L223.0,466.7 L222.0,466.0 L221.0,465.8 L220.0,465.6 L219.0,465.9 L218.0,466.1 L217.0,464.5 L216.0,462.9 L215.0,462.9 L214.0,462.8 L213.0,462.8 L212.0,462.7 L211.0,462.8 L210.0,462.8 L209.0,462.0 L208.0,461.1 L207.0,459.1 L206.0,457.1 L205.0,455.0 L204.0,452.8 L203.0,453.0 L202.0,453.2 L201.0,453.3 L200.0,453.4 L199.0,455.1 L198.0,456.9 L197.0,459.7 L196.0,462.6 L195.0,463.9 L194.0,465.2 L193.0,463.8 L192.0,462.5 L191.0,460.7 L190.0,458.8 L189.0,459.2 L188.0,459.5 L187.0,460.8 L186.0,462.1 L185.0,463.0 L184.0,464.0 L183.0,465.5 L182.0,467.1 L181.0,470.4 L180.0,473.7 L179.0,478.0 L178.0,482.3 L177.0,483.7 L176.0,485.2 L175.0,484.8 L174.0,484.5 L173.0,484.6 L172.0,484.7 L171.0,483.9 L170.0,483.2 L169.0,483.4 L168.0,483.7 L167.0,483.6 L166.0,483.4 L165.0,483.0 L164.0,482.6 L163.0,482.3 L162.0,482.0 L161.0,482.9 L160.0,483.7 L159.0,483.2 L158.0,482.7 L157.0,483.2 L156.0,483.7 L155.0,483.8 L154.0,483.8 L153.0,483.4 L152.0,483.0 L151.0,482.3 L150.0,481.6 L149.0,481.7 L148.0,481.8 L147.0,481.9 L146.0,482.0 L145.0,481.8 L144.0,481.7 L143.0,481.6 L142.0,481.5 L141.0,481.7 L140.0,481.8 L139.0,481.3 L138.0,480.7 L137.0,480.8 L136.0,481.0 L135.0,479.3 L134.0,477.6 L133.0,477.2 L132.0,476.8 L131.0,476.2 L130.0,475.6 L129.0,476.4 L128.0,477.2 L127.0,477.4 L126.0,477.6 L125.0,477.2 L124.0,476.9 L123.0,477.2 L122.0,477.4 L121.0,477.1 L120.0,476.8 L119.0,477.4 L118.0,478.0 L117.0,476.7 L116.0,475.4 L115.0,475.7 L114.0,476.0 L113.0,476.2 L112.0,476.4 L111.0,477.5 L110.0,478.5 L109.0,480.0ZM327.0,483.9 L328.0,484.2 L329.0,484.5 L330.0,484.9 L331.0,484.2 L332.0,483.6 L333.0,484.5 L334.0,485.4 L335.0,485.2 L336.0,485.1 L337.0,486.3 L338.0,487.4 L339.0,487.1 L340.0,486.7 L341.0,487.8 L342.0,488.8 L343.0,488.7 L344.0,488.6 L345.0,489.5 L346.0,490.5 L347.0,490.5 L348.0,490.4 L349.0,490.5 L350.0,490.6 L351.0,491.3 L352.0,491.9 L353.0,491.3 L354.0,490.7 L355.0,490.9 L356.0,491.1 L357.0,489.9 L358.0,488.6 L359.0,488.4 L360.0,488.1 L361.0,487.9 L362.0,487.7 L363.0,488.4 L364.0,489.1 L365.0,488.4 L366.0,487.6 L367.0,488.5 L368.0,489.3 L369.0,489.5 L370.0,489.6 L371.0,490.1 L372.0,490.7 L373.0,490.9 L374.0,491.2 L375.0,490.0 L376.0,488.9 L377.0,488.9 L378.0,489.0 L379.0,488.4 L380.0,487.8 L381.0,487.4 L382.0,487.0 L383.0,485.8 L384.0,484.7 L385.0,485.0 L386.0,485.3 L387.0,484.9 L388.0,484.6 L389.0,482.9 L389.0,482.7 L388.0,481.6 L387.0,481.1 L386.0,480.5 L385.0,480.1 L384.0,479.7 L383.0,478.5 L382.0,477.3 L381.0,476.0 L380.0,474.7 L379.0,474.9 L378.0,475.1 L377.0,473.7 L376.0,472.4 L375.0,471.5 L374.0,470.7 L373.0,470.5 L372.0,470.3 L371.0,469.6 L370.0,468.9 L369.0,469.3 L368.0,469.8 L367.0,470.5 L366.0,471.3 L365.0,472.5 L364.0,473.8 L363.0,474.2 L362.0,474.6 L361.0,475.7 L360.0,476.9 L359.0,476.7 L358.0,476.6 L357.0,475.4 L356.0,474.2 L355.0,473.3 L354.0,472.4 L353.0,472.8 L352.0,473.1 L351.0,473.7 L350.0,474.2 L349.0,475.2 L348.0,476.2 L347.0,477.1 L346.0,478.0 L345.0,479.5 L344.0,481.0 L343.0,481.1 L342.0,481.1 L341.0,482.1 L340.0,483.1 L339.0,483.8 L338.0,484.6 L337.0,484.8 L336.0,485.0 L335.0,485.1 L334.0,485.2 L333.0,484.3 L332.0,483.4 L331.0,483.3 L330.0,483.2 L329.0,483.3 L328.0,483.4 L327.0,483.7ZM434.0,485.1 L435.0,484.9 L436.0,484.7 L437.0,484.5 L438.0,484.4 L439.0,484.6 L440.0,484.9 L441.0,485.1 L442.0,485.4 L443.0,485.0 L444.0,484.6 L444.0,484.1 L443.0,484.2 L442.0,484.4 L441.0,482.7 L440.0,481.0 L439.0,481.2 L438.0,481.4 L437.0,482.0 L436.0,482.6 L435.0,483.1 L434.0,483.7ZM502.0,487.0 L503.0,487.0 L504.0,487.0 L505.0,486.9 L506.0,486.8 L507.0,486.6 L508.0,486.5 L509.0,487.5 L510.0,488.5 L511.0,488.2 L512.0,487.9 L513.0,487.3 L514.0,486.7 L515.0,486.8 L516.0,487.0 L517.0,487.4 L518.0,487.8 L519.0,488.3 L520.0,488.9 L521.0,488.9 L522.0,488.9 L523.0,490.1 L524.0,491.4 L525.0,490.0 L526.0,488.7 L527.0,488.0 L528.0,487.3 L529.0,487.4 L530.0,487.5 L531.0,486.1 L532.0,484.7 L533.0,484.9 L534.0,485.0 L535.0,484.8 L536.0,484.5 L537.0,485.3 L538.0,486.2 L539.0,486.1 L540.0,486.0 L541.0,486.5 L542.0,487.0 L543.0,488.0 L544.0,489.0 L545.0,488.7 L546.0,488.4 L547.0,488.7 L548.0,488.9 L549.0,489.4 L550.0,489.8 L551.0,489.7 L552.0,489.5 L553.0,489.4 L554.0,489.3 L555.0,489.1 L556.0,488.8 L557.0,488.2 L558.0,487.6 L559.0,487.0 L560.0,486.4 L561.0,487.0 L562.0,487.6 L563.0,486.4 L564.0,485.3 L565.0,486.2 L566.0,487.1 L567.0,487.2 L568.0,487.3 L569.0,487.0 L570.0,486.7 L571.0,485.5 L572.0,484.4 L573.0,484.7 L574.0,484.9 L575.0,484.0 L575.0,483.9 L574.0,484.1 L573.0,483.2 L572.0,482.4 L571.0,481.9 L570.0,481.3 L569.0,481.9 L568.0,482.6 L567.0,482.5 L566.0,482.5 L565.0,482.6 L564.0,482.7 L563.0,483.6 L562.0,484.4 L561.0,483.9 L560.0,483.3 L559.0,482.3 L558.0,481.2 L557.0,480.8 L556.0,480.4 L555.0,480.3 L554.0,480.1 L553.0,480.3 L552.0,480.5 L551.0,479.3 L550.0,478.1 L549.0,478.7 L548.0,479.4 L547.0,479.3 L546.0,479.2 L545.0,478.9 L544.0,478.6 L543.0,477.9 L542.0,477.2 L541.0,477.3 L540.0,477.5 L539.0,476.6 L538.0,475.7 L537.0,475.8 L536.0,475.9 L535.0,476.4 L534.0,477.0 L533.0,477.6 L532.0,478.2 L531.0,477.9 L530.0,477.6 L529.0,476.9 L528.0,476.1 L527.0,475.7 L526.0,475.2 L525.0,475.1 L524.0,475.0 L523.0,474.7 L522.0,474.4 L521.0,473.5 L520.0,472.5 L519.0,474.8 L518.0,477.1 L517.0,478.6 L516.0,480.0 L515.0,481.9 L514.0,483.7 L513.0,484.4 L512.0,485.1 L511.0,484.8 L510.0,484.4 L509.0,484.7 L508.0,484.9 L507.0,484.9 L506.0,484.9 L505.0,485.7 L504.0,486.5 L503.0,486.7 L502.0,487.0ZM589.0,484.6 L590.0,486.0 L591.0,486.5 L592.0,487.0 L593.0,487.4 L594.0,487.8 L595.0,487.0 L596.0,486.3 L597.0,485.9 L598.0,485.5 L599.0,486.2 L600.0,487.0 L601.0,487.2 L602.0,487.4 L603.0,487.2 L604.0,486.9 L605.0,486.5 L606.0,486.1 L607.0,486.2 L608.0,486.4 L609.0,486.4 L610.0,486.5 L611.0,486.5 L612.0,486.5 L613.0,485.9 L614.0,485.3 L615.0,485.8 L616.0,486.2 L617.0,485.9 L618.0,485.6 L619.0,484.6 L619.0,483.3 L618.0,482.0 L617.0,482.2 L616.0,482.4 L615.0,481.1 L614.0,479.7 L613.0,479.5 L612.0,479.2 L611.0,478.7 L610.0,478.2 L609.0,478.5 L608.0,478.8 L607.0,479.1 L606.0,479.5 L605.0,478.7 L604.0,477.8 L603.0,477.8 L602.0,477.9 L601.0,476.6 L600.0,475.3 L599.0,474.8 L598.0,474.3 L597.0,473.2 L596.0,472.1 L595.0,472.8 L594.0,473.4 L593.0,475.2 L592.0,476.9 L591.0,479.0 L590.0,481.0 L589.0,483.1ZM642.0,481.4 L643.0,481.8 L644.0,482.2 L644.0,481.1 L643.0,481.1 L642.0,481.1ZM667.0,481.1 L668.0,482.2 L669.0,482.5 L670.0,482.8 L671.0,483.8 L672.0,484.8 L673.0,485.4 L674.0,486.1 L675.0,487.0 L676.0,487.8 L677.0,489.1 L678.0,490.3 L679.0,490.4 L680.0,490.5 L681.0,490.4 L682.0,490.2 L683.0,489.5 L684.0,488.7 L685.0,488.5 L686.0,488.3 L687.0,488.5 L688.0,488.7 L689.0,487.5 L690.0,486.3 L691.0,485.4 L692.0,484.5 L693.0,484.1 L694.0,483.6 L695.0,484.4 L696.0,485.2 L697.0,485.8 L698.0,486.4 L699.0,486.7 L700.0,487.0 L701.0,487.5 L702.0,488.0 L703.0,486.6 L704.0,485.2 L705.0,484.4 L706.0,483.5 L707.0,483.8 L708.0,484.2 L709.0,484.6 L710.0,485.1 L711.0,485.5 L712.0,485.8 L713.0,485.5 L714.0,485.2 L715.0,485.7 L716.0,486.1 L717.0,485.4 L718.0,484.6 L719.0,483.7 L720.0,482.8 L721.0,483.2 L722.0,483.5 L723.0,483.1 L724.0,482.7 L725.0,482.8 L726.0,482.8 L727.0,482.4 L728.0,482.0 L729.0,481.4 L730.0,480.7 L731.0,481.3 L732.0,481.8 L733.0,481.4 L733.0,480.9 L732.0,480.7 L731.0,479.5 L730.0,478.3 L729.0,478.4 L728.0,478.4 L727.0,478.1 L726.0,477.8 L725.0,477.6 L724.0,477.4 L723.0,476.4 L722.0,475.4 L721.0,475.5 L720.0,475.5 L719.0,475.1 L718.0,474.7 L717.0,473.5 L716.0,472.2 L715.0,472.3 L714.0,472.4 L713.0,472.1 L712.0,471.7 L711.0,471.8 L710.0,471.8 L709.0,472.6 L708.0,473.5 L707.0,474.3 L706.0,475.2 L705.0,474.9 L704.0,474.6 L703.0,475.5 L702.0,476.4 L701.0,475.8 L700.0,475.1 L699.0,474.9 L698.0,474.7 L697.0,475.8 L696.0,476.9 L695.0,478.0 L694.0,479.1 L693.0,479.4 L692.0,479.6 L691.0,480.7 L690.0,481.8 L689.0,479.6 L688.0,477.3 L687.0,476.1 L686.0,474.8 L685.0,473.4 L684.0,472.0 L683.0,472.1 L682.0,472.2 L681.0,470.5 L680.0,468.8 L679.0,468.1 L678.0,467.3 L677.0,467.7 L676.0,468.2 L675.0,468.6 L674.0,469.0 L673.0,470.0 L672.0,471.0 L671.0,472.7 L670.0,474.3 L669.0,475.7 L668.0,477.1 L667.0,478.7Z" fill="#fbb4b4"/><path d="M4.0,479.9 L6.0,481.4 L8.0,481.0 L10.0,482.6 L12.0,482.9 L14.0,482.3 L16.0,482.6 L18.0,482.3 L20.0,482.2 L22.0,483.5 L24.0,484.4 L26.0,483.2 L28.0,483.7 L30.0,481.0 L32.0,479.7 L34.0,478.0 L36.0,479.0 L38.0,477.1 L40.0,476.9 L42.0,477.8 L44.0,477.9 L46.0,480.1 L48.0,481.9 L50.0,482.0 L52.0,485.0 L54.0,484.6 L56.0,485.2 L58.0,485.3 L60.0,479.7 L62.0,477.7 L64.0,472.6 L66.0,471.7 L68.0,472.9 L70.0,475.0 L72.0,476.0 L74.0,476.8 L76.0,479.5 L78.0,478.6 L80.0,480.6 L82.0,479.9 L84.0,482.4 L86.0,482.7 L88.0,482.8 L90.0,483.2 L92.0,483.2 L94.0,483.9 L96.0,479.0 L98.0,474.8 L100.0,475.5 L102.0,475.5 L104.0,478.8 L106.0,480.2 L108.0,480.7 L110.0,482.3 L112.0,484.1 L114.0,484.7 L116.0,486.8 L118.0,485.9 L120.0,485.7 L122.0,486.4 L124.0,488.4 L126.0,489.6 L128.0,488.9 L130.0,489.4 L132.0,488.3 L134.0,487.5 L136.0,485.1 L138.0,484.8 L140.0,485.2 L142.0,486.0 L144.0,485.5 L146.0,486.1 L148.0,487.1 L150.0,489.1 L152.0,488.3 L154.0,489.5 L156.0,489.4 L158.0,489.3 L160.0,488.6 L162.0,489.8 L164.0,489.1 L166.0,487.6 L168.0,487.8 L170.0,487.8 L172.0,488.4 L174.0,488.5 L176.0,487.2 L178.0,489.1 L180.0,490.4 L182.0,490.9 L184.0,493.1 L186.0,493.5 L188.0,494.3 L190.0,494.5 L192.0,493.6 L194.0,486.4 L196.0,484.6 L198.0,488.7 L200.0,491.0 L202.0,492.5 L204.0,494.3 L206.0,493.4 L208.0,494.9 L210.0,496.0 L212.0,497.0 L214.0,495.7 L216.0,494.7 L218.0,494.6 L220.0,495.0 L222.0,493.4 L224.0,491.0 L226.0,488.6 L228.0,487.0 L230.0,489.4 L232.0,489.0 L234.0,489.8 L236.0,487.7 L238.0,487.7 L240.0,488.8 L242.0,488.3 L244.0,488.1 L246.0,487.0 L248.0,486.2 L250.0,486.4 L252.0,486.8 L254.0,485.3 L256.0,485.7 L258.0,484.6 L260.0,485.0 L262.0,482.4 L264.0,483.3 L266.0,481.8 L268.0,476.2 L270.0,474.3 L272.0,473.8 L274.0,475.5 L276.0,476.1 L278.0,476.6 L280.0,477.0 L282.0,477.7 L284.0,477.0 L286.0,474.5 L288.0,473.8 L290.0,473.8 L292.0,473.8 L294.0,475.0 L296.0,474.5 L298.0,476.4 L300.0,477.6 L302.0,478.3 L304.0,481.3 L306.0,480.0 L308.0,479.2 L310.0,477.3 L312.0,475.9 L314.0,476.7 L316.0,478.2 L318.0,480.0 L320.0,480.6 L322.0,480.2 L324.0,482.5 L326.0,483.6 L328.0,484.2 L330.0,484.9 L332.0,483.6 L334.0,485.4 L336.0,485.1 L338.0,487.4 L340.0,486.7 L342.0,488.8 L344.0,488.6 L346.0,490.5 L348.0,490.4 L350.0,490.6 L352.0,491.9 L354.0,490.7 L356.0,491.1 L358.0,488.6 L360.0,488.1 L362.0,487.7 L364.0,489.1 L366.0,487.6 L368.0,489.3 L370.0,489.6 L372.0,490.7 L374.0,491.2 L376.0,488.9 L378.0,489.0 L380.0,487.8 L382.0,487.0 L384.0,484.7 L386.0,485.3 L388.0,484.6 L390.0,481.3 L392.0,479.4 L394.0,479.2 L396.0,475.3 L398.0,475.4 L400.0,476.8 L402.0,479.9 L404.0,481.1 L406.0,481.3 L408.0,481.1 L410.0,479.1 L412.0,480.0 L414.0,478.9 L416.0,478.9 L418.0,479.6 L420.0,480.6 L422.0,480.2 L424.0,477.8 L426.0,478.1 L428.0,479.4 L430.0,482.2 L432.0,484.2 L434.0,485.1 L436.0,484.7 L438.0,484.4 L440.0,484.9 L442.0,485.4 L444.0,484.6 L446.0,482.9 L448.0,479.0 L450.0,479.0 L452.0,478.0 L454.0,478.4 L456.0,479.4 L458.0,479.8 L460.0,480.0 L462.0,480.9 L464.0,480.5 L466.0,480.2 L468.0,479.0 L470.0,478.3 L472.0,476.3 L474.0,476.9 L476.0,474.6 L478.0,475.6 L480.0,477.1 L482.0,478.5 L484.0,479.6 L486.0,478.0 L488.0,479.5 L490.0,480.2 L492.0,481.1 L494.0,481.5 L496.0,483.5 L498.0,483.4 L500.0,484.9 L502.0,487.0 L504.0,487.0 L506.0,486.8 L508.0,486.5 L510.0,488.5 L512.0,487.9 L514.0,486.7 L516.0,487.0 L518.0,487.8 L520.0,488.9 L522.0,488.9 L524.0,491.4 L526.0,488.7 L528.0,487.3 L530.0,487.5 L532.0,484.7 L534.0,485.0 L536.0,484.5 L538.0,486.2 L540.0,486.0 L542.0,487.0 L544.0,489.0 L546.0,488.4 L548.0,488.9 L550.0,489.8 L552.0,489.5 L554.0,489.3 L556.0,488.8 L558.0,487.6 L560.0,486.4 L562.0,487.6 L564.0,485.3 L566.0,487.1 L568.0,487.3 L570.0,486.7 L572.0,484.4 L574.0,484.9 L576.0,483.2 L578.0,483.5 L580.0,482.8 L582.0,480.6 L584.0,479.1 L586.0,481.9 L588.0,483.1 L590.0,486.0 L592.0,487.0 L594.0,487.8 L596.0,486.3 L598.0,485.5 L600.0,487.0 L602.0,487.4 L604.0,486.9 L606.0,486.1 L608.0,486.4 L610.0,486.5 L612.0,486.5 L614.0,485.3 L616.0,486.2 L618.0,485.6 L620.0,483.5 L622.0,481.2 L624.0,476.9 L626.0,476.1 L628.0,475.5 L630.0,478.1 L632.0,478.3 L634.0,479.0 L636.0,478.2 L638.0,478.6 L640.0,481.2 L642.0,481.4 L644.0,482.2 L646.0,481.3 L648.0,481.1 L650.0,479.0 L652.0,477.8 L654.0,476.8 L656.0,475.3 L658.0,474.8 L660.0,475.6 L662.0,475.4 L664.0,477.2 L666.0,480.0 L668.0,482.2 L670.0,482.8 L672.0,484.8 L674.0,486.1 L676.0,487.8 L678.0,490.3 L680.0,490.5 L682.0,490.2 L684.0,488.7 L686.0,488.3 L688.0,488.7 L690.0,486.3 L692.0,484.5 L694.0,483.6 L696.0,485.2 L698.0,486.4 L700.0,487.0 L702.0,488.0 L704.0,485.2 L706.0,483.5 L708.0,484.2 L710.0,485.1 L712.0,485.8 L714.0,485.2 L716.0,486.1 L718.0,484.6 L720.0,482.8 L722.0,483.5 L724.0,482.7 L726.0,482.8 L728.0,482.0 L730.0,480.7 L732.0,481.8 L734.0,481.0 L736.0,476.1 L738.0,473.9 L740.0,474.4 L742.0,473.4 L744.0,475.2 L746.0,475.5 L748.0,475.6 L750.0,476.0 L752.0,479.2 L754.0,482.1 L756.0,479.6 L758.0,477.0 L760.0,476.8 L762.0,476.3 L764.0,478.9 L766.0,478.8 L768.0,480.6 L770.0,480.0" fill="none" stroke="#30e030" stroke-width="1.2"/><path d="M4.0,487.9 L6.0,489.6 L8.0,487.6 L10.0,487.5 L12.0,488.8 L14.0,488.0 L16.0,489.4 L18.0,488.2 L20.0,490.4 L22.0,489.2 L24.0,490.3 L26.0,491.0 L28.0,488.5 L30.0,487.6 L32.0,487.7 L34.0,486.7 L36.0,489.3 L38.0,489.2 L40.0,489.3 L42.0,490.0 L44.0,492.6 L46.0,492.4 L48.0,492.8 L50.0,491.9 L52.0,491.8 L54.0,490.3 L56.0,490.1 L58.0,490.1 L60.0,490.0 L62.0,492.5 L64.0,491.7 L66.0,493.7 L68.0,494.2 L70.0,492.8 L72.0,490.9 L74.0,487.5 L76.0,483.2 L78.0,482.5 L80.0,482.7 L82.0,484.4 L84.0,483.5 L86.0,485.9 L88.0,485.2 L90.0,485.5 L92.0,485.9 L94.0,487.5 L96.0,489.1 L98.0,488.7 L100.0,489.8 L102.0,488.8 L104.0,485.8 L106.0,484.2 L108.0,481.5 L110.0,478.5 L112.0,476.4 L114.0,476.0 L116.0,475.4 L118.0,478.0 L120.0,476.8 L122.0,477.4 L124.0,476.9 L126.0,477.6 L128.0,477.2 L130.0,475.6 L132.0,476.8 L134.0,477.6 L136.0,481.0 L138.0,480.7 L140.0,481.8 L142.0,481.5 L144.0,481.7 L146.0,482.0 L148.0,481.8 L150.0,481.6 L152.0,483.0 L154.0,483.8 L156.0,483.7 L158.0,482.7 L160.0,483.7 L162.0,482.0 L164.0,482.6 L166.0,483.4 L168.0,483.7 L170.0,483.2 L172.0,484.7 L174.0,484.5 L176.0,485.2 L178.0,482.3 L180.0,473.7 L182.0,467.1 L184.0,464.0 L186.0,462.1 L188.0,459.5 L190.0,458.8 L192.0,462.5 L194.0,465.2 L196.0,462.6 L198.0,456.9 L200.0,453.4 L202.0,453.2 L204.0,452.8 L206.0,457.1 L208.0,461.1 L210.0,462.8 L212.0,462.7 L214.0,462.8 L216.0,462.9 L218.0,466.1 L220.0,465.6 L222.0,466.0 L224.0,467.3 L226.0,468.4 L228.0,470.9 L230.0,469.0 L232.0,467.9 L234.0,469.8 L236.0,473.0 L238.0,474.1 L240.0,474.9 L242.0,476.4 L244.0,477.3 L246.0,477.8 L248.0,476.9 L250.0,478.8 L252.0,480.6 L254.0,479.0 L256.0,479.8 L258.0,480.9 L260.0,481.0 L262.0,482.6 L264.0,483.6 L266.0,483.8 L268.0,484.1 L270.0,484.8 L272.0,485.6 L274.0,485.6 L276.0,487.2 L278.0,486.2 L280.0,488.1 L282.0,487.7 L284.0,486.2 L286.0,487.1 L288.0,487.2 L290.0,485.6 L292.0,486.5 L294.0,484.8 L296.0,485.8 L298.0,483.2 L300.0,483.9 L302.0,484.9 L304.0,484.8 L306.0,483.6 L308.0,484.6 L310.0,484.0 L312.0,484.9 L314.0,486.6 L316.0,486.9 L318.0,485.3 L320.0,485.4 L322.0,485.2 L324.0,483.3 L326.0,484.0 L328.0,483.4 L330.0,483.2 L332.0,483.4 L334.0,485.2 L336.0,485.0 L338.0,484.6 L340.0,483.1 L342.0,481.1 L344.0,481.0 L346.0,478.0 L348.0,476.2 L350.0,474.2 L352.0,473.1 L354.0,472.4 L356.0,474.2 L358.0,476.6 L360.0,476.9 L362.0,474.6 L364.0,473.8 L366.0,471.3 L368.0,469.8 L370.0,468.9 L372.0,470.3 L374.0,470.7 L376.0,472.4 L378.0,475.1 L380.0,474.7 L382.0,477.3 L384.0,479.7 L386.0,480.5 L388.0,481.6 L390.0,483.7 L392.0,483.4 L394.0,487.1 L396.0,487.7 L398.0,487.0 L400.0,486.1 L402.0,483.3 L404.0,482.6 L406.0,483.6 L408.0,485.2 L410.0,487.0 L412.0,487.6 L414.0,486.9 L416.0,487.9 L418.0,488.6 L420.0,488.1 L422.0,490.2 L424.0,490.6 L426.0,490.6 L428.0,490.7 L430.0,488.4 L432.0,486.1 L434.0,483.7 L436.0,482.6 L438.0,481.4 L440.0,481.0 L442.0,484.4 L444.0,484.1 L446.0,484.7 L448.0,486.4 L450.0,486.4 L452.0,487.8 L454.0,488.2 L456.0,488.4 L458.0,489.5 L460.0,489.6 L462.0,489.7 L464.0,491.1 L466.0,490.3 L468.0,491.5 L470.0,492.9 L472.0,493.7 L474.0,492.9 L476.0,490.9 L478.0,491.0 L480.0,487.9 L482.0,487.1 L484.0,487.4 L486.0,488.2 L488.0,488.8 L490.0,487.7 L492.0,486.5 L494.0,487.8 L496.0,486.4 L498.0,484.8 L500.0,485.9 L502.0,487.0 L504.0,486.5 L506.0,484.9 L508.0,484.9 L510.0,484.4 L512.0,485.1 L514.0,483.7 L516.0,480.0 L518.0,477.1 L520.0,472.5 L522.0,474.4 L524.0,475.0 L526.0,475.2 L528.0,476.1 L530.0,477.6 L532.0,478.2 L534.0,477.0 L536.0,475.9 L538.0,475.7 L540.0,477.5 L542.0,477.2 L544.0,478.6 L546.0,479.2 L548.0,479.4 L550.0,478.1 L552.0,480.5 L554.0,480.1 L556.0,480.4 L558.0,481.2 L560.0,483.3 L562.0,484.4 L564.0,482.7 L566.0,482.5 L568.0,482.6 L570.0,481.3 L572.0,482.4 L574.0,484.1 L576.0,483.8 L578.0,484.9 L580.0,484.5 L582.0,486.9 L584.0,487.7 L586.0,487.3 L588.0,485.2 L590.0,481.0 L592.0,476.9 L594.0,473.4 L596.0,472.1 L598.0,474.3 L600.0,475.3 L602.0,477.9 L604.0,477.8 L606.0,479.5 L608.0,478.8 L610.0,478.2 L612.0,479.2 L614.0,479.7 L616.0,482.4 L618.0,482.0 L620.0,484.6 L622.0,484.6 L624.0,486.5 L626.0,485.7 L628.0,487.7 L630.0,487.3 L632.0,485.6 L634.0,484.9 L636.0,484.9 L638.0,484.6 L640.0,482.7 L642.0,481.1 L644.0,481.1 L646.0,482.5 L648.0,481.9 L650.0,484.8 L652.0,484.8 L654.0,484.5 L656.0,484.6 L658.0,485.5 L660.0,486.0 L662.0,484.3 L664.0,481.7 L666.0,480.4 L668.0,477.1 L670.0,474.3 L672.0,471.0 L674.0,469.0 L676.0,468.2 L678.0,467.3 L680.0,468.8 L682.0,472.2 L684.0,472.0 L686.0,474.8 L688.0,477.3 L690.0,481.8 L692.0,479.6 L694.0,479.1 L696.0,476.9 L698.0,474.7 L700.0,475.1 L702.0,476.4 L704.0,474.6 L706.0,475.2 L708.0,473.5 L710.0,471.8 L712.0,471.7 L714.0,472.4 L716.0,472.2 L718.0,474.7 L720.0,475.5 L722.0,475.4 L724.0,477.4 L726.0,477.8 L728.0,478.4 L730.0,478.3 L732.0,480.7 L734.0,481.1 L736.0,480.5 L738.0,480.9 L740.0,480.9 L742.0,483.0 L744.0,484.3 L746.0,484.0 L748.0,484.2 L750.0,485.5 L752.0,486.4 L754.0,485.4 L756.0,485.7 L758.0,486.5 L760.0,485.1 L762.0,487.0 L764.0,486.2 L766.0,488.0 L768.0,487.5 L770.0,487.3" fill="none" stroke="#f02020" stroke-width="1.2"/><path d="M0.0,479.5 L1.5,479.5 L3.0,479.4 L4.5,479.3 L6.0,479.2 L7.5,479.1 L9.0,479.0 L10.5,478.9 L12.0,478.8 L13.5,478.8 L15.0,478.7 L16.5,478.8 L18.0,478.9 L19.5,479.0 L21.0,479.1 L22.5,479.3 L24.0,479.5 L25.5,479.8 L27.0,480.2 L28.5,480.7 L30.0,481.2 L31.5,481.6 L33.0,481.8 L34.5,481.7 L36.0,481.4 L37.5,480.8 L39.0,480.2 L40.5,479.6 L42.0,479.0 L43.5,478.5 L45.0,478.2 L46.5,478.2 L48.0,478.3 L49.5,478.6 L51.0,479.0 L52.5,479.4 L54.0,479.8 L55.5,479.9 L57.0,479.7 L58.5,479.3 L60.0,478.7 L61.5,477.7 L63.0,476.9 L64.5,476.1 L66.0,475.4 L67.5,474.7 L69.0,474.1 L70.5,473.7 L72.0,473.6 L73.5,473.9 L75.0,474.5 L76.5,475.5 L78.0,476.7 L79.5,477.9 L81.0,478.9 L82.5,479.8 L84.0,480.6 L85.5,481.2 L87.0,481.6 L88.5,481.9 L90.0,482.3 L91.5,482.7 L93.0,483.0 L94.5,483.0 L96.0,483.0 L97.5,482.8 L99.0,482.4 L100.5,482.1 L102.0,482.0 L103.5,482.1 L105.0,482.3 L106.5,482.7 L108.0,483.2 L109.5,483.6 L111.0,483.9 L112.5,484.0 L114.0,484.0 L115.5,483.8 L117.0,483.5 L118.5,483.2 L120.0,482.9 L121.5,482.5 L123.0,482.2 L124.5,481.8 L126.0,481.3 L127.5,480.9 L129.0,480.5 L130.5,480.3 L132.0,480.3 L133.5,480.6 L135.0,481.1 L136.5,481.8 L138.0,482.5 L139.5,483.2 L141.0,483.8 L142.5,484.2 L144.0,484.5 L145.5,484.7 L147.0,484.8 L148.5,484.9 L150.0,485.0 L151.5,485.1 L153.0,485.2 L154.5,485.3 L156.0,485.4 L157.5,485.4 L159.0,485.3 L160.5,485.2 L162.0,485.1 L163.5,484.9 L165.0,484.8 L166.5,484.8 L168.0,484.9 L169.5,485.2 L171.0,485.5 L172.5,486.0 L174.0,486.4 L175.5,486.6 L177.0,486.4 L178.5,485.8 L180.0,484.9 L181.5,483.6 L183.0,482.2 L184.5,480.7 L186.0,479.1 L187.5,477.4 L189.0,475.6 L190.5,473.8 L192.0,472.3 L193.5,471.0 L195.0,470.0 L196.5,469.2 L198.0,468.4 L199.5,467.4 L201.0,466.2 L202.5,464.8 L204.0,463.2 L205.5,461.5 L207.0,459.9 L208.5,458.3 L210.0,456.9 L211.5,455.5 L213.0,454.2 L214.5,453.3 L216.0,452.7 L217.5,452.3 L219.0,452.3 L220.5,452.4 L222.0,452.5 L223.5,452.6 L225.0,452.7 L226.5,452.9 L228.0,453.2 L229.5,453.5 L231.0,453.8 L232.5,454.2 L234.0,454.7 L235.5,455.2 L237.0,455.8 L238.5,456.5 L240.0,457.2 L241.5,458.0 L243.0,458.8 L244.5,459.6 L246.0,460.6 L247.5,461.7 L249.0,462.9 L250.5,464.1 L252.0,465.3 L253.5,466.5 L255.0,467.6 L256.5,468.7 L258.0,469.8 L259.5,470.8 L261.0,471.9 L262.5,472.9 L264.0,473.7 L265.5,474.3 L267.0,474.7 L268.5,475.0 L270.0,475.1 L271.5,475.3 L273.0,475.4 L274.5,475.6 L276.0,475.7 L277.5,475.8 L279.0,476.0 L280.5,476.1 L282.0,476.2 L283.5,476.3 L285.0,476.5 L286.5,476.6 L288.0,476.8 L289.5,476.9 L291.0,477.1 L292.5,477.2 L294.0,477.4 L295.5,477.7 L297.0,478.2 L298.5,478.7 L300.0,479.4 L301.5,480.1 L303.0,480.9 L304.5,481.6 L306.0,482.3 L307.5,482.8 L309.0,483.2 L310.5,483.3 L312.0,483.4 L313.5,483.3 L315.0,483.3 L316.5,483.2 L318.0,483.2 L319.5,483.4 L321.0,483.6 L322.5,484.0 L324.0,484.5 L325.5,485.0 L327.0,485.5 L328.5,486.0 L330.0,486.4 L331.5,486.8 L333.0,487.1 L334.5,487.5 L336.0,487.8 L337.5,488.1 L339.0,488.4 L340.5,488.7 L342.0,488.8 L343.5,488.4 L345.0,487.8 L346.5,486.8 L348.0,485.5 L349.5,484.2 L351.0,482.9 L352.5,481.9 L354.0,481.1 L355.5,480.5 L357.0,480.2 L358.5,480.1 L360.0,479.9 L361.5,479.7 L363.0,479.4 L364.5,479.0 L366.0,478.5 L367.5,477.9 L369.0,477.3 L370.5,476.7 L372.0,476.1 L373.5,475.5 L375.0,474.9 L376.5,474.4 L378.0,473.8 L379.5,473.6 L381.0,473.6 L382.5,474.0 L384.0,474.6 L385.5,475.6 L387.0,476.5 L388.5,477.5 L390.0,478.4 L391.5,479.1 L393.0,479.7 L394.5,480.2 L396.0,480.6 L397.5,481.0 L399.0,481.4 L400.5,481.7 L402.0,482.1 L403.5,482.3 L405.0,482.6 L406.5,482.7 L408.0,482.9 L409.5,483.0 L411.0,483.1 L412.5,483.2 L414.0,483.3 L415.5,483.2 L417.0,483.0 L418.5,482.7 L420.0,482.4 L421.5,482.0 L423.0,481.6 L424.5,481.2 L426.0,481.1 L427.5,481.2 L429.0,481.6 L430.5,482.1 L432.0,482.9 L433.5,483.7 L435.0,484.4 L436.5,485.1 L438.0,485.7 L439.5,486.2 L441.0,486.6 L442.5,486.8 L444.0,486.9 L445.5,487.1 L447.0,487.1 L448.5,487.1 L450.0,486.9 L451.5,486.7 L453.0,486.3 L454.5,485.8 L456.0,485.4 L457.5,485.0 L459.0,484.6 L460.5,484.1 L462.0,483.7 L463.5,483.1 L465.0,482.6 L466.5,482.0 L468.0,481.4 L469.5,480.8 L471.0,480.1 L472.5,479.3 L474.0,478.3 L475.5,477.1 L477.0,476.2 L478.5,475.4 L480.0,475.0 L481.5,474.9 L483.0,475.0 L484.5,475.1 L486.0,475.2 L487.5,475.4 L489.0,475.7 L490.5,476.3 L492.0,477.0 L493.5,478.0 L495.0,479.1 L496.5,480.2 L498.0,481.1 L499.5,482.1 L501.0,482.9 L502.5,483.6 L504.0,484.4 L505.5,485.1 L507.0,485.9 L508.5,486.5 L510.0,486.8 L511.5,487.0 L513.0,487.1 L514.5,486.9 L516.0,486.6 L517.5,486.2 L519.0,485.6 L520.5,484.8 L522.0,483.9 L523.5,483.1 L525.0,482.5 L526.5,482.1 L528.0,482.0 L529.5,482.1 L531.0,482.4 L532.5,482.6 L534.0,482.9 L535.5,483.1 L537.0,483.1 L538.5,482.9 L540.0,482.7 L541.5,482.2 L543.0,481.7 L544.5,481.2 L546.0,480.7 L547.5,480.3 L549.0,479.8 L550.5,479.4 L552.0,479.0 L553.5,478.6 L555.0,478.3 L556.5,478.4 L558.0,478.7 L559.5,479.4 L561.0,480.4 L562.5,481.5 L564.0,482.5 L565.5,483.3 L567.0,484.1 L568.5,484.8 L570.0,485.3 L571.5,485.9 L573.0,486.5 L574.5,487.1 L576.0,487.6 L577.5,488.2 L579.0,488.5 L580.5,488.7 L582.0,488.6 L583.5,488.3 L585.0,487.9 L586.5,487.5 L588.0,487.0 L589.5,486.6 L591.0,486.3 L592.5,486.1 L594.0,485.9 L595.5,485.7 L597.0,485.6 L598.5,485.5 L600.0,485.3 L601.5,485.3 L603.0,485.2 L604.5,485.2 L606.0,485.2 L607.5,485.2 L609.0,485.2 L610.5,485.3 L612.0,485.5 L613.5,485.7 L615.0,485.9 L616.5,486.2 L618.0,486.5 L619.5,486.8 L621.0,486.9 L622.5,486.9 L624.0,486.8 L625.5,486.5 L627.0,486.2 L628.5,485.9 L630.0,485.7 L631.5,485.6 L633.0,485.6 L634.5,485.7 L636.0,486.0 L637.5,486.3 L639.0,486.6 L640.5,486.9 L642.0,487.2 L643.5,487.5 L645.0,487.8 L646.5,488.1 L648.0,488.4 L649.5,488.7 L651.0,488.8 L652.5,488.9 L654.0,488.7 L655.5,488.5 L657.0,488.0 L658.5,487.6 L660.0,487.1 L661.5,486.9 L663.0,486.8 L664.5,487.0 L666.0,487.3 L667.5,487.8 L669.0,488.3 L670.5,488.3 L672.0,488.0 L673.5,487.3 L675.0,486.2 L676.5,484.9 L678.0,483.7 L679.5,482.6 L681.0,481.6 L682.5,480.7 L684.0,480.0 L685.5,479.3 L687.0,478.9 L688.5,478.6 L690.0,478.6 L691.5,478.9 L693.0,479.2 L694.5,479.5 L696.0,479.6 L697.5,479.6 L699.0,479.5 L700.5,479.4 L702.0,479.5 L703.5,479.7 L705.0,480.0 L706.5,480.5 L708.0,481.1 L709.5,481.6 L711.0,482.0 L712.5,482.4 L714.0,482.7 L715.5,482.9 L717.0,483.2 L718.5,483.4 L720.0,483.7 L721.5,484.0 L723.0,484.3 L724.5,484.7 L726.0,485.1 L727.5,485.5 L729.0,486.0 L730.5,486.4 L732.0,486.7 L733.5,486.8 L735.0,486.8 L736.5,486.7 L738.0,486.4 L739.5,486.1 L741.0,485.8 L742.5,485.6 L744.0,485.5 L745.5,485.5 L747.0,485.6 L748.5,485.8 L750.0,485.9 L751.5,486.0 L753.0,486.0 L754.5,485.9 L756.0,485.8 L757.5,485.7 L759.0,485.5 L760.5,485.4 L762.0,485.2 L763.5,485.1 L765.0,484.9 L766.5,484.7 L768.0,484.6 L769.5,484.5" fill="none" stroke="#1818e0" stroke-width="2.5"/><path d="M3,528.5H969" stroke="#a0a0a0" stroke-width="1" shape-rendering="crispEdges"/><path d="M3.5,528.5V523.0M5.5,528.5V524.5M7.5,528.5V525.3M9.5,528.5V525.9M11.5,528.5V526.3M13.5,528.5V527.1M15.5,528.5V527.8M22.5,528.5V529.4M24.5,528.5V529.6M26.5,528.5V530.1M28.5,528.5V530.4M30.5,528.5V531.0M32.5,528.5V530.2M34.5,528.5V529.5M36.5,528.5V529.2M43.5,528.5V527.7M45.5,528.5V527.5M47.5,528.5V527.6M49.5,528.5V527.3M51.5,528.5V527.4M53.5,528.5V527.6M63.5,528.5V526.9M65.5,528.5V525.6M67.5,528.5V524.7M70.5,528.5V524.9M72.5,528.5V526.0M74.5,528.5V526.3M76.5,528.5V527.3M78.5,528.5V527.8M84.5,528.5V529.6M86.5,528.5V529.3M90.5,528.5V527.3M92.5,528.5V526.7M95.5,528.5V525.7M97.5,528.5V524.7M99.5,528.5V523.8M101.5,528.5V523.6M103.5,528.5V525.1M105.5,528.5V526.3M107.5,528.5V527.6M111.5,528.5V530.1M113.5,528.5V531.1M115.5,528.5V532.9M117.5,528.5V534.9M119.5,528.5V534.2M122.5,528.5V535.5M124.5,528.5V537.3M126.5,528.5V536.5M128.5,528.5V536.8M130.5,528.5V536.5M132.5,528.5V534.9M134.5,528.5V534.4M136.5,528.5V532.3M138.5,528.5V529.6M140.5,528.5V526.8M142.5,528.5V527.1M144.5,528.5V526.6M147.5,528.5V526.3M149.5,528.5V526.0M151.5,528.5V526.1M153.5,528.5V526.8M155.5,528.5V527.5M165.5,528.5V527.3M167.5,528.5V526.8M169.5,528.5V526.4M171.5,528.5V525.9M174.5,528.5V525.9M176.5,528.5V526.8M178.5,528.5V529.3M180.5,528.5V531.5M182.5,528.5V534.3M184.5,528.5V536.6M186.5,528.5V537.9M188.5,528.5V540.2M190.5,528.5V541.5M192.5,528.5V546.0M194.5,528.5V544.6M196.5,528.5V544.9M199.5,528.5V545.0M201.5,528.5V545.7M203.5,528.5V547.1M205.5,528.5V546.4M207.5,528.5V546.2M209.5,528.5V552.0M211.5,528.5V548.4M213.5,528.5V547.5M215.5,528.5V547.2M217.5,528.5V543.5M219.5,528.5V540.7M221.5,528.5V537.6M223.5,528.5V535.1M226.5,528.5V532.2M228.5,528.5V529.6M230.5,528.5V527.3M232.5,528.5V524.9M234.5,528.5V523.6M236.5,528.5V521.3M238.5,528.5V521.6M240.5,528.5V522.3M242.5,528.5V521.7M244.5,528.5V520.4M246.5,528.5V518.7M248.5,528.5V519.9M251.5,528.5V518.0M253.5,528.5V518.5M255.5,528.5V516.4M257.5,528.5V518.3M259.5,528.5V515.8M261.5,528.5V513.0M263.5,528.5V514.8M265.5,528.5V514.0M267.5,528.5V513.7M269.5,528.5V511.3M271.5,528.5V509.1M273.5,528.5V504.9M275.5,528.5V509.0M278.5,528.5V508.6M280.5,528.5V512.0M282.5,528.5V512.6M284.5,528.5V514.5M286.5,528.5V517.9M288.5,528.5V520.9M290.5,528.5V521.4M292.5,528.5V523.0M294.5,528.5V525.3M296.5,528.5V527.1M300.5,528.5V529.2M303.5,528.5V529.6M305.5,528.5V530.1M307.5,528.5V530.6M309.5,528.5V531.5M311.5,528.5V532.0M313.5,528.5V531.4M315.5,528.5V531.2M317.5,528.5V530.3M319.5,528.5V530.0M321.5,528.5V529.9M323.5,528.5V529.7M325.5,528.5V529.4M327.5,528.5V529.3M332.5,528.5V529.4M334.5,528.5V530.3M336.5,528.5V530.8M338.5,528.5V532.1M340.5,528.5V532.5M342.5,528.5V533.9M344.5,528.5V535.2M346.5,528.5V535.6M348.5,528.5V535.7M350.5,528.5V533.6M352.5,528.5V534.0M355.5,528.5V532.2M357.5,528.5V532.0M359.5,528.5V530.8M361.5,528.5V530.8M363.5,528.5V530.5M365.5,528.5V529.9M367.5,528.5V529.9M369.5,528.5V530.1M371.5,528.5V530.3M373.5,528.5V530.9M375.5,528.5V530.4M377.5,528.5V529.9M382.5,528.5V527.7M384.5,528.5V526.7M386.5,528.5V525.5M388.5,528.5V523.8M390.5,528.5V522.2M392.5,528.5V521.6M394.5,528.5V519.3M396.5,528.5V519.4M398.5,528.5V516.9M400.5,528.5V517.4M402.5,528.5V518.1M404.5,528.5V520.1M407.5,528.5V519.6M409.5,528.5V519.8M411.5,528.5V521.5M413.5,528.5V522.0M415.5,528.5V521.6M417.5,528.5V520.9M419.5,528.5V522.7M421.5,528.5V523.1M423.5,528.5V522.3M425.5,528.5V522.1M427.5,528.5V523.0M429.5,528.5V524.6M431.5,528.5V524.9M434.5,528.5V526.7M436.5,528.5V527.9M438.5,528.5V529.2M440.5,528.5V530.4M442.5,528.5V530.4M444.5,528.5V530.1M446.5,528.5V530.2M448.5,528.5V529.9M452.5,528.5V527.8M454.5,528.5V527.0M456.5,528.5V526.4M459.5,528.5V526.4M461.5,528.5V525.9M463.5,528.5V525.8M465.5,528.5V526.4M467.5,528.5V526.5M469.5,528.5V525.9M471.5,528.5V526.1M473.5,528.5V525.1M475.5,528.5V525.1M477.5,528.5V524.6M479.5,528.5V524.6M481.5,528.5V524.8M483.5,528.5V526.6M488.5,528.5V529.4M490.5,528.5V530.4M492.5,528.5V530.9M494.5,528.5V530.2M496.5,528.5V530.4M498.5,528.5V530.1M500.5,528.5V530.1M502.5,528.5V530.1M504.5,528.5V530.8M506.5,528.5V531.1M508.5,528.5V531.9M511.5,528.5V532.4M513.5,528.5V532.5M515.5,528.5V532.3M517.5,528.5V532.9M519.5,528.5V533.5M521.5,528.5V534.3M523.5,528.5V534.5M525.5,528.5V534.9M527.5,528.5V533.5M529.5,528.5V530.9M531.5,528.5V529.8M533.5,528.5V529.9M535.5,528.5V529.5M538.5,528.5V529.5M540.5,528.5V529.2M542.5,528.5V529.3M544.5,528.5V529.1M550.5,528.5V527.4M552.5,528.5V527.1M554.5,528.5V526.5M556.5,528.5V526.0M558.5,528.5V525.4M560.5,528.5V525.8M563.5,528.5V525.0M565.5,528.5V524.8M567.5,528.5V524.7M569.5,528.5V524.3M571.5,528.5V523.6M573.5,528.5V524.4M575.5,528.5V523.4M577.5,528.5V524.0M579.5,528.5V523.2M581.5,528.5V522.9M583.5,528.5V523.9M585.5,528.5V523.0M587.5,528.5V524.6M590.5,528.5V526.9M594.5,528.5V529.7M596.5,528.5V531.1M598.5,528.5V530.3M600.5,528.5V530.7M602.5,528.5V530.0M604.5,528.5V530.1M606.5,528.5V529.4M612.5,528.5V527.8M615.5,528.5V527.2M617.5,528.5V526.3M619.5,528.5V525.8M621.5,528.5V525.1M623.5,528.5V524.4M625.5,528.5V525.1M627.5,528.5V524.4M629.5,528.5V523.0M631.5,528.5V523.4M633.5,528.5V525.1M635.5,528.5V525.3M637.5,528.5V526.3M639.5,528.5V526.9M642.5,528.5V527.8M662.5,528.5V530.2M664.5,528.5V530.8M667.5,528.5V532.3M669.5,528.5V533.0M671.5,528.5V533.0M673.5,528.5V534.0M675.5,528.5V534.9M677.5,528.5V536.5M679.5,528.5V535.9M681.5,528.5V535.6M683.5,528.5V536.7M685.5,528.5V535.9M687.5,528.5V534.9M689.5,528.5V533.5M691.5,528.5V532.2M694.5,528.5V531.0M696.5,528.5V529.5M700.5,528.5V527.9M702.5,528.5V527.7M704.5,528.5V527.5M706.5,528.5V527.4M708.5,528.5V527.4M710.5,528.5V526.9M712.5,528.5V526.3M714.5,528.5V525.8M716.5,528.5V525.2M719.5,528.5V524.4M721.5,528.5V523.6M723.5,528.5V523.7M725.5,528.5V523.9M727.5,528.5V524.4M729.5,528.5V524.5M731.5,528.5V524.1M733.5,528.5V522.6M735.5,528.5V523.0M737.5,528.5V522.4M739.5,528.5V521.8M741.5,528.5V522.4M743.5,528.5V521.0M746.5,528.5V523.4M748.5,528.5V522.6M750.5,528.5V522.5M752.5,528.5V524.0M754.5,528.5V523.9M756.5,528.5V524.6M758.5,528.5V525.1M760.5,528.5V525.5M762.5,528.5V525.8M764.5,528.5V525.3M766.5,528.5V525.5M768.5,528.5V525.7M771.5,528.5V526.5" stroke="#20e020" stroke-width="1.5"/><path d="M12.0,508.5 L13.0,508.5 L14.0,508.4 L15.0,508.4 L16.0,508.4 L17.0,508.5 L18.0,508.6 L19.0,508.8 L20.0,508.9 L21.0,509.1 L22.0,509.3 L23.0,509.5 L24.0,509.9 L25.0,510.3 L26.0,510.8 L27.0,511.4 L28.0,511.9 L29.0,512.4 L30.0,512.9 L31.0,513.3 L32.0,513.6 L33.0,513.7 L34.0,513.8 L35.0,513.8 L36.0,513.8 L37.0,513.8 L38.0,513.8 L39.0,513.8 L40.0,513.8 L41.0,513.9 L42.0,513.9 L43.0,513.9 L44.0,514.0 L45.0,514.0 L46.0,514.0 L47.0,514.1 L48.0,514.1 L49.0,514.1 L50.0,514.2 L51.0,514.3 L52.0,514.4 L53.0,514.6 L54.0,514.8 L55.0,515.0 L56.0,515.2 L57.0,515.4 L58.0,515.5 L58.0,515.5 L57.0,515.6 L56.0,515.7 L55.0,515.7 L54.0,515.6 L53.0,515.5 L52.0,515.4 L51.0,515.2 L50.0,515.0 L49.0,514.8 L48.0,514.6 L47.0,514.4 L46.0,514.3 L45.0,514.2 L44.0,514.1 L43.0,514.1 L42.0,514.1 L41.0,514.0 L40.0,514.0 L39.0,514.0 L38.0,513.9 L37.0,513.9 L36.0,513.9 L35.0,513.8 L34.0,513.8 L33.0,513.8 L32.0,513.8 L31.0,513.8 L30.0,513.8 L29.0,513.8 L28.0,513.7 L27.0,513.6 L26.0,513.3 L25.0,512.9 L24.0,512.4 L23.0,511.9 L22.0,511.4 L21.0,510.8 L20.0,510.3 L19.0,509.9 L18.0,509.5 L17.0,509.3 L16.0,509.1 L15.0,508.9 L14.0,508.8 L13.0,508.6 L12.0,508.5ZM69.0,513.6 L70.0,513.3 L71.0,513.2 L72.0,513.1 L73.0,513.2 L74.0,513.3 L75.0,513.5 L76.0,513.7 L77.0,513.9 L78.0,514.1 L79.0,514.2 L80.0,514.4 L81.0,514.5 L82.0,514.7 L83.0,514.8 L84.0,515.0 L85.0,515.1 L85.0,515.2 L84.0,515.3 L83.0,515.3 L82.0,515.3 L81.0,515.2 L80.0,515.1 L79.0,515.0 L78.0,514.8 L77.0,514.7 L76.0,514.5 L75.0,514.4 L74.0,514.2 L73.0,514.1 L72.0,513.9 L71.0,513.7 L70.0,513.5 L69.0,513.3ZM98.0,514.3 L99.0,514.0 L100.0,513.8 L101.0,513.7 L102.0,513.7 L103.0,513.8 L104.0,514.0 L105.0,514.2 L106.0,514.4 L107.0,514.6 L108.0,515.0 L109.0,515.5 L110.0,516.2 L111.0,517.0 L112.0,517.8 L113.0,518.6 L114.0,519.5 L115.0,520.3 L116.0,521.2 L117.0,522.1 L118.0,522.9 L119.0,523.8 L120.0,524.7 L121.0,525.6 L122.0,526.5 L123.0,527.4 L124.0,528.4 L125.0,529.4 L126.0,530.4 L127.0,531.5 L128.0,532.5 L129.0,533.3 L130.0,533.8 L130.0,533.9 L129.0,534.0 L128.0,534.2 L127.0,534.3 L126.0,534.2 L125.0,533.8 L124.0,533.3 L123.0,532.5 L122.0,531.5 L121.0,530.4 L120.0,529.4 L119.0,528.4 L118.0,527.4 L117.0,526.5 L116.0,525.6 L115.0,524.7 L114.0,523.8 L113.0,522.9 L112.0,522.1 L111.0,521.2 L110.0,520.3 L109.0,519.5 L108.0,518.6 L107.0,517.8 L106.0,517.0 L105.0,516.2 L104.0,515.5 L103.0,515.0 L102.0,514.6 L101.0,514.4 L100.0,514.2 L99.0,514.0 L98.0,513.8ZM147.0,532.8 L148.0,532.8 L149.0,532.7 L150.0,532.7 L151.0,532.7 L152.0,532.8 L153.0,532.9 L154.0,533.0 L155.0,533.0 L156.0,533.1 L157.0,533.2 L158.0,533.3 L158.0,533.4 L157.0,533.5 L156.0,533.5 L155.0,533.4 L154.0,533.4 L153.0,533.3 L152.0,533.2 L151.0,533.1 L150.0,533.0 L149.0,533.0 L148.0,532.9 L147.0,532.8ZM175.0,531.5 L176.0,531.3 L177.0,531.1 L178.0,531.0 L179.0,531.0 L180.0,531.2 L181.0,531.5 L182.0,532.0 L183.0,532.5 L184.0,533.1 L185.0,534.0 L186.0,535.1 L187.0,536.3 L188.0,537.8 L189.0,539.3 L190.0,540.8 L191.0,542.3 L192.0,543.8 L193.0,545.4 L194.0,547.1 L195.0,548.8 L196.0,550.6 L197.0,552.4 L198.0,553.3 L198.0,554.2 L197.0,554.2 L196.0,554.2 L195.0,554.2 L194.0,554.2 L193.0,553.3 L192.0,552.4 L191.0,550.6 L190.0,548.8 L189.0,547.1 L188.0,545.4 L187.0,543.8 L186.0,542.3 L185.0,540.8 L184.0,539.3 L183.0,537.8 L182.0,536.3 L181.0,535.1 L180.0,534.0 L179.0,533.1 L178.0,532.5 L177.0,532.0 L176.0,531.5 L175.0,531.2Z" fill="#f8a0a0" opacity="0.8"/><path d="M3.0,509.6 L4.0,509.4 L5.0,509.3 L6.0,509.1 L7.0,508.9 L8.0,508.8 L9.0,508.7 L10.0,508.7 L11.0,508.6 L12.0,508.5 L12.0,508.5 L11.0,508.4 L10.0,508.4 L9.0,508.4 L8.0,508.5 L7.0,508.5 L6.0,508.6 L5.0,508.7 L4.0,508.7 L3.0,508.8ZM58.0,515.5 L59.0,515.6 L60.0,515.7 L61.0,515.7 L62.0,515.6 L63.0,515.5 L64.0,515.4 L65.0,515.2 L66.0,514.9 L67.0,514.5 L68.0,514.1 L69.0,513.6 L69.0,513.3 L68.0,513.2 L67.0,513.1 L66.0,513.2 L65.0,513.3 L64.0,513.6 L63.0,514.1 L62.0,514.5 L61.0,514.9 L60.0,515.2 L59.0,515.4 L58.0,515.5ZM85.0,515.1 L86.0,515.2 L87.0,515.3 L88.0,515.3 L89.0,515.3 L90.0,515.2 L91.0,515.1 L92.0,515.1 L93.0,515.0 L94.0,515.0 L95.0,514.9 L96.0,514.7 L97.0,514.5 L98.0,514.3 L98.0,513.8 L97.0,513.7 L96.0,513.7 L95.0,513.8 L94.0,514.0 L93.0,514.3 L92.0,514.5 L91.0,514.7 L90.0,514.9 L89.0,515.0 L88.0,515.0 L87.0,515.1 L86.0,515.1 L85.0,515.2ZM130.0,533.8 L131.0,534.2 L132.0,534.3 L133.0,534.2 L134.0,534.0 L135.0,533.9 L136.0,533.8 L137.0,533.7 L138.0,533.6 L139.0,533.5 L140.0,533.4 L141.0,533.3 L142.0,533.3 L143.0,533.2 L144.0,533.1 L145.0,533.0 L146.0,532.9 L147.0,532.8 L147.0,532.8 L146.0,532.7 L145.0,532.7 L144.0,532.7 L143.0,532.8 L142.0,532.8 L141.0,532.9 L140.0,533.0 L139.0,533.1 L138.0,533.2 L137.0,533.3 L136.0,533.3 L135.0,533.4 L134.0,533.5 L133.0,533.6 L132.0,533.7 L131.0,533.8 L130.0,533.9ZM158.0,533.3 L159.0,533.4 L160.0,533.4 L161.0,533.5 L162.0,533.5 L163.0,533.4 L164.0,533.3 L165.0,533.2 L166.0,533.0 L167.0,532.9 L168.0,532.8 L169.0,532.6 L170.0,532.5 L171.0,532.3 L172.0,532.1 L173.0,531.9 L174.0,531.7 L175.0,531.5 L175.0,531.2 L174.0,531.0 L173.0,531.0 L172.0,531.1 L171.0,531.3 L170.0,531.5 L169.0,531.7 L168.0,531.9 L167.0,532.1 L166.0,532.3 L165.0,532.5 L164.0,532.6 L163.0,532.8 L162.0,532.9 L161.0,533.0 L160.0,533.2 L159.0,533.3 L158.0,533.4ZM198.0,553.3 L199.0,554.2 L199.0,554.2 L198.0,554.2Z" fill="#d0d0d0" opacity="0.9"/><path d="M295.8,509.3 L296.8,509.2 L297.8,509.1 L298.8,509.1 L299.8,509.2 L300.8,509.3 L301.8,509.5 L302.8,509.7 L303.8,510.0 L304.8,510.4 L305.8,510.9 L306.8,511.6 L307.8,512.2 L308.8,512.8 L309.8,513.3 L310.8,513.8 L311.8,514.1 L312.8,514.3 L313.8,514.5 L314.8,514.7 L315.8,514.9 L316.8,515.1 L317.8,515.3 L318.8,515.5 L319.8,515.6 L320.8,515.8 L321.8,515.9 L322.8,516.1 L323.8,516.2 L324.8,516.4 L325.8,516.5 L326.8,516.7 L327.8,517.0 L328.8,517.4 L329.8,518.0 L330.8,518.6 L331.8,519.2 L332.8,519.8 L333.8,520.4 L334.8,521.0 L335.8,521.6 L336.8,522.2 L337.8,522.7 L338.8,523.2 L339.8,523.7 L340.8,524.2 L341.8,524.8 L342.8,525.4 L343.8,526.2 L344.8,527.0 L345.8,528.0 L346.8,529.2 L347.8,530.3 L348.8,531.4 L349.8,532.5 L350.8,533.6 L351.8,534.6 L352.8,535.7 L353.8,536.7 L354.8,537.7 L355.8,538.7 L356.8,539.7 L357.8,540.7 L358.8,541.5 L359.8,542.1 L360.8,542.6 L361.8,543.0 L362.8,543.2 L363.8,543.5 L364.8,543.8 L365.8,544.0 L366.8,544.3 L367.8,544.6 L368.8,545.0 L369.8,545.3 L370.8,545.7 L371.8,546.1 L372.8,546.5 L373.8,546.9 L374.8,547.3 L375.8,547.7 L376.8,548.2 L377.8,548.7 L378.8,549.2 L378.8,549.5 L377.8,549.8 L376.8,549.9 L375.8,549.8 L374.8,549.6 L373.8,549.2 L372.8,548.7 L371.8,548.2 L370.8,547.7 L369.8,547.3 L368.8,546.9 L367.8,546.5 L366.8,546.1 L365.8,545.7 L364.8,545.3 L363.8,545.0 L362.8,544.6 L361.8,544.3 L360.8,544.0 L359.8,543.8 L358.8,543.5 L357.8,543.2 L356.8,543.0 L355.8,542.6 L354.8,542.1 L353.8,541.5 L352.8,540.7 L351.8,539.7 L350.8,538.7 L349.8,537.7 L348.8,536.7 L347.8,535.7 L346.8,534.6 L345.8,533.6 L344.8,532.5 L343.8,531.4 L342.8,530.3 L341.8,529.2 L340.8,528.0 L339.8,527.0 L338.8,526.2 L337.8,525.4 L336.8,524.8 L335.8,524.2 L334.8,523.7 L333.8,523.2 L332.8,522.7 L331.8,522.2 L330.8,521.6 L329.8,521.0 L328.8,520.4 L327.8,519.8 L326.8,519.2 L325.8,518.6 L324.8,518.0 L323.8,517.4 L322.8,517.0 L321.8,516.7 L320.8,516.5 L319.8,516.4 L318.8,516.2 L317.8,516.1 L316.8,515.9 L315.8,515.8 L314.8,515.6 L313.8,515.5 L312.8,515.3 L311.8,515.1 L310.8,514.9 L309.8,514.7 L308.8,514.5 L307.8,514.3 L306.8,514.1 L305.8,513.8 L304.8,513.3 L303.8,512.8 L302.8,512.2 L301.8,511.6 L300.8,510.9 L299.8,510.4 L298.8,510.0 L297.8,509.7 L296.8,509.5 L295.8,509.3ZM427.8,517.0 L428.8,516.9 L429.8,516.8 L430.8,516.8 L431.8,516.9 L432.8,517.0 L433.8,517.3 L434.8,517.6 L435.8,518.1 L436.8,518.6 L437.8,519.0 L438.8,519.5 L439.8,520.0 L440.8,520.4 L441.8,520.8 L442.8,521.2 L443.8,521.5 L444.8,521.8 L444.8,521.9 L443.8,521.9 L442.8,522.0 L441.8,522.0 L440.8,521.9 L439.8,521.8 L438.8,521.5 L437.8,521.2 L436.8,520.8 L435.8,520.4 L434.8,520.0 L433.8,519.5 L432.8,519.0 L431.8,518.6 L430.8,518.1 L429.8,517.6 L428.8,517.3 L427.8,517.0ZM475.8,516.3 L476.8,516.1 L477.8,516.0 L478.8,516.0 L479.8,516.0 L480.8,516.0 L481.8,516.1 L482.8,516.2 L483.8,516.3 L484.8,516.4 L485.8,516.5 L486.8,516.7 L487.8,516.8 L488.8,517.1 L489.8,517.3 L490.8,517.7 L491.8,518.0 L492.8,518.4 L493.8,518.8 L494.8,519.1 L495.8,519.5 L496.8,519.8 L497.8,520.1 L498.8,520.3 L499.8,520.6 L500.8,520.9 L501.8,521.1 L502.8,521.3 L503.8,521.5 L504.8,521.7 L505.8,521.9 L506.8,522.0 L507.8,522.1 L508.8,522.2 L509.8,522.3 L510.8,522.4 L511.8,522.5 L512.8,522.7 L513.8,523.1 L514.8,523.6 L515.8,524.3 L516.8,525.1 L517.8,526.0 L518.8,526.9 L519.8,527.8 L520.8,528.5 L521.8,529.2 L522.8,529.7 L523.8,530.1 L524.8,530.3 L525.8,530.6 L526.8,530.8 L527.8,531.1 L528.8,531.3 L529.8,531.5 L530.8,531.7 L531.8,531.9 L532.8,532.0 L533.8,532.1 L534.8,532.2 L535.8,532.4 L536.8,532.5 L537.8,532.7 L538.8,532.9 L539.8,533.1 L540.8,533.4 L541.8,533.6 L542.8,533.9 L543.8,534.1 L544.8,534.4 L545.8,534.6 L546.8,534.8 L547.8,535.1 L548.8,535.3 L549.8,535.6 L550.8,535.8 L551.8,536.1 L552.8,536.3 L553.8,536.6 L553.8,536.8 L552.8,537.0 L551.8,537.1 L550.8,537.1 L549.8,536.9 L548.8,536.6 L547.8,536.3 L546.8,536.1 L545.8,535.8 L544.8,535.6 L543.8,535.3 L542.8,535.1 L541.8,534.8 L540.8,534.6 L539.8,534.4 L538.8,534.1 L537.8,533.9 L536.8,533.6 L535.8,533.4 L534.8,533.1 L533.8,532.9 L532.8,532.7 L531.8,532.5 L530.8,532.4 L529.8,532.2 L528.8,532.1 L527.8,532.0 L526.8,531.9 L525.8,531.7 L524.8,531.5 L523.8,531.3 L522.8,531.1 L521.8,530.8 L520.8,530.6 L519.8,530.3 L518.8,530.1 L517.8,529.7 L516.8,529.2 L515.8,528.5 L514.8,527.8 L513.8,526.9 L512.8,526.0 L511.8,525.1 L510.8,524.3 L509.8,523.6 L508.8,523.1 L507.8,522.7 L506.8,522.5 L505.8,522.4 L504.8,522.3 L503.8,522.2 L502.8,522.1 L501.8,522.0 L500.8,521.9 L499.8,521.7 L498.8,521.5 L497.8,521.3 L496.8,521.1 L495.8,520.9 L494.8,520.6 L493.8,520.3 L492.8,520.1 L491.8,519.8 L490.8,519.5 L489.8,519.1 L488.8,518.8 L487.8,518.4 L486.8,518.0 L485.8,517.7 L484.8,517.3 L483.8,517.1 L482.8,516.8 L481.8,516.7 L480.8,516.5 L479.8,516.4 L478.8,516.3 L477.8,516.2 L476.8,516.1 L475.8,516.0ZM587.8,526.2 L588.8,525.8 L589.8,525.5 L590.8,525.3 L591.8,525.4 L592.8,525.7 L593.8,526.1 L594.8,526.5 L595.8,526.9 L596.8,527.3 L597.8,527.7 L598.8,528.1 L599.8,528.5 L600.8,528.8 L601.8,529.1 L602.8,529.3 L603.8,529.5 L604.8,529.7 L605.8,529.9 L606.8,530.1 L607.8,530.3 L608.8,530.5 L609.8,530.7 L609.8,530.7 L608.8,530.8 L607.8,530.8 L606.8,530.8 L605.8,530.8 L604.8,530.7 L603.8,530.5 L602.8,530.3 L601.8,530.1 L600.8,529.9 L599.8,529.7 L598.8,529.5 L597.8,529.3 L596.8,529.1 L595.8,528.8 L594.8,528.5 L593.8,528.1 L592.8,527.7 L591.8,527.3 L590.8,526.9 L589.8,526.5 L588.8,526.1 L587.8,525.7ZM638.8,522.6 L639.8,522.5 L640.8,522.4 L641.8,522.4 L642.8,522.5 L643.8,522.6 L644.8,522.6 L645.8,522.7 L646.8,522.8 L647.8,522.8 L648.8,522.9 L649.8,523.0 L650.8,523.1 L651.8,523.1 L652.8,523.2 L653.8,523.2 L653.8,523.2 L652.8,523.2 L651.8,523.2 L650.8,523.2 L649.8,523.2 L648.8,523.2 L647.8,523.2 L646.8,523.1 L645.8,523.1 L644.8,523.0 L643.8,522.9 L642.8,522.8 L641.8,522.8 L640.8,522.7 L639.8,522.6 L638.8,522.6ZM655.8,523.2 L656.8,523.2 L657.8,523.2 L658.8,523.2 L659.8,523.2 L660.8,523.2 L661.8,523.3 L662.8,523.4 L663.8,523.7 L664.8,524.0 L665.8,524.4 L666.8,524.8 L667.8,525.3 L668.8,525.7 L669.8,526.2 L670.8,526.9 L671.8,527.7 L672.8,528.6 L673.8,529.7 L674.8,530.8 L675.8,532.0 L676.8,533.0 L677.8,534.0 L678.8,534.8 L679.8,535.6 L680.8,536.3 L681.8,536.9 L682.8,537.6 L683.8,538.1 L684.8,538.6 L685.8,538.9 L686.8,539.3 L687.8,539.6 L687.8,539.8 L686.8,539.9 L685.8,540.0 L684.8,540.0 L683.8,539.8 L682.8,539.6 L681.8,539.3 L680.8,538.9 L679.8,538.6 L678.8,538.1 L677.8,537.6 L676.8,536.9 L675.8,536.3 L674.8,535.6 L673.8,534.8 L672.8,534.0 L671.8,533.0 L670.8,532.0 L669.8,530.8 L668.8,529.7 L667.8,528.6 L666.8,527.7 L665.8,526.9 L664.8,526.2 L663.8,525.7 L662.8,525.3 L661.8,524.8 L660.8,524.4 L659.8,524.0 L658.8,523.7 L657.8,523.4 L656.8,523.3 L655.8,523.2Z" fill="#f8a0a0" opacity="0.8"/><path d="M267.8,553.3 L268.8,552.0 L269.8,550.6 L270.8,548.0 L271.8,545.3 L272.8,542.6 L273.8,540.0 L274.8,537.5 L275.8,535.0 L276.8,532.6 L277.8,530.2 L278.8,528.0 L279.8,525.9 L280.8,524.0 L281.8,522.3 L282.8,520.8 L283.8,519.4 L284.8,518.1 L285.8,516.9 L286.8,515.7 L287.8,514.6 L288.8,513.5 L289.8,512.6 L290.8,511.6 L291.8,510.8 L292.8,510.2 L293.8,509.8 L294.8,509.5 L295.8,509.3 L295.8,509.3 L294.8,509.2 L293.8,509.1 L292.8,509.1 L291.8,509.2 L290.8,509.3 L289.8,509.5 L288.8,509.8 L287.8,510.2 L286.8,510.8 L285.8,511.6 L284.8,512.6 L283.8,513.5 L282.8,514.6 L281.8,515.7 L280.8,516.9 L279.8,518.1 L278.8,519.4 L277.8,520.8 L276.8,522.3 L275.8,524.0 L274.8,525.9 L273.8,528.0 L272.8,530.2 L271.8,532.6 L270.8,535.0 L269.8,537.5 L268.8,540.0 L267.8,542.6ZM378.8,549.2 L379.8,549.6 L380.8,549.8 L381.8,549.9 L382.8,549.8 L383.8,549.5 L384.8,549.3 L385.8,549.0 L386.8,548.6 L387.8,548.0 L388.8,547.2 L389.8,546.2 L390.8,545.1 L391.8,544.0 L392.8,542.9 L393.8,541.8 L394.8,540.6 L395.8,539.6 L396.8,538.5 L397.8,537.5 L398.8,536.5 L399.8,535.4 L400.8,534.4 L401.8,533.4 L402.8,532.5 L403.8,531.6 L404.8,530.7 L405.8,530.0 L406.8,529.2 L407.8,528.5 L408.8,527.7 L409.8,527.0 L410.8,526.3 L411.8,525.7 L412.8,525.1 L413.8,524.5 L414.8,524.0 L415.8,523.5 L416.8,523.0 L417.8,522.5 L418.8,522.0 L419.8,521.4 L420.8,520.8 L421.8,520.2 L422.8,519.6 L423.8,519.0 L424.8,518.4 L425.8,517.8 L426.8,517.4 L427.8,517.0 L427.8,517.0 L426.8,516.9 L425.8,516.8 L424.8,516.8 L423.8,516.9 L422.8,517.0 L421.8,517.4 L420.8,517.8 L419.8,518.4 L418.8,519.0 L417.8,519.6 L416.8,520.2 L415.8,520.8 L414.8,521.4 L413.8,522.0 L412.8,522.5 L411.8,523.0 L410.8,523.5 L409.8,524.0 L408.8,524.5 L407.8,525.1 L406.8,525.7 L405.8,526.3 L404.8,527.0 L403.8,527.7 L402.8,528.5 L401.8,529.2 L400.8,530.0 L399.8,530.7 L398.8,531.6 L397.8,532.5 L396.8,533.4 L395.8,534.4 L394.8,535.4 L393.8,536.5 L392.8,537.5 L391.8,538.5 L390.8,539.6 L389.8,540.6 L388.8,541.8 L387.8,542.9 L386.8,544.0 L385.8,545.1 L384.8,546.2 L383.8,547.2 L382.8,548.0 L381.8,548.6 L380.8,549.0 L379.8,549.3 L378.8,549.5ZM444.8,521.8 L445.8,521.9 L446.8,522.0 L447.8,522.0 L448.8,521.9 L449.8,521.9 L450.8,521.8 L451.8,521.7 L452.8,521.6 L453.8,521.4 L454.8,521.1 L455.8,520.8 L456.8,520.5 L457.8,520.2 L458.8,519.9 L459.8,519.6 L460.8,519.3 L461.8,519.0 L462.8,518.8 L463.8,518.5 L464.8,518.3 L465.8,518.1 L466.8,517.9 L467.8,517.7 L468.8,517.5 L469.8,517.3 L470.8,517.1 L471.8,517.0 L472.8,516.8 L473.8,516.6 L474.8,516.4 L475.8,516.3 L475.8,516.0 L474.8,516.0 L473.8,516.0 L472.8,516.0 L471.8,516.1 L470.8,516.3 L469.8,516.4 L468.8,516.6 L467.8,516.8 L466.8,517.0 L465.8,517.1 L464.8,517.3 L463.8,517.5 L462.8,517.7 L461.8,517.9 L460.8,518.1 L459.8,518.3 L458.8,518.5 L457.8,518.8 L456.8,519.0 L455.8,519.3 L454.8,519.6 L453.8,519.9 L452.8,520.2 L451.8,520.5 L450.8,520.8 L449.8,521.1 L448.8,521.4 L447.8,521.6 L446.8,521.7 L445.8,521.8 L444.8,521.9ZM553.8,536.6 L554.8,536.9 L555.8,537.1 L556.8,537.1 L557.8,537.0 L558.8,536.8 L559.8,536.5 L560.8,536.1 L561.8,535.7 L562.8,535.3 L563.8,534.9 L564.8,534.5 L565.8,534.2 L566.8,533.8 L567.8,533.5 L568.8,533.2 L569.8,532.9 L570.8,532.6 L571.8,532.3 L572.8,532.1 L573.8,531.8 L574.8,531.5 L575.8,531.2 L576.8,531.0 L577.8,530.7 L578.8,530.4 L579.8,530.0 L580.8,529.7 L581.8,529.2 L582.8,528.8 L583.8,528.2 L584.8,527.8 L585.8,527.2 L586.8,526.8 L587.8,526.2 L587.8,525.7 L586.8,525.4 L585.8,525.3 L584.8,525.5 L583.8,525.8 L582.8,526.2 L581.8,526.8 L580.8,527.2 L579.8,527.8 L578.8,528.2 L577.8,528.8 L576.8,529.2 L575.8,529.7 L574.8,530.0 L573.8,530.4 L572.8,530.7 L571.8,531.0 L570.8,531.2 L569.8,531.5 L568.8,531.8 L567.8,532.1 L566.8,532.3 L565.8,532.6 L564.8,532.9 L563.8,533.2 L562.8,533.5 L561.8,533.8 L560.8,534.2 L559.8,534.5 L558.8,534.9 L557.8,535.3 L556.8,535.7 L555.8,536.1 L554.8,536.5 L553.8,536.8ZM609.8,530.7 L610.8,530.8 L611.8,530.8 L612.8,530.8 L613.8,530.8 L614.8,530.7 L615.8,530.6 L616.8,530.5 L617.8,530.4 L618.8,530.3 L619.8,530.2 L620.8,530.0 L621.8,529.7 L622.8,529.3 L623.8,528.7 L624.8,528.2 L625.8,527.6 L626.8,527.0 L627.8,526.4 L628.8,525.8 L629.8,525.2 L630.8,524.6 L631.8,524.2 L632.8,523.8 L633.8,523.5 L634.8,523.3 L635.8,523.1 L636.8,522.9 L637.8,522.8 L638.8,522.6 L638.8,522.6 L637.8,522.5 L636.8,522.4 L635.8,522.4 L634.8,522.5 L633.8,522.6 L632.8,522.8 L631.8,522.9 L630.8,523.1 L629.8,523.3 L628.8,523.5 L627.8,523.8 L626.8,524.2 L625.8,524.6 L624.8,525.2 L623.8,525.8 L622.8,526.4 L621.8,527.0 L620.8,527.6 L619.8,528.2 L618.8,528.7 L617.8,529.3 L616.8,529.7 L615.8,530.0 L614.8,530.2 L613.8,530.3 L612.8,530.4 L611.8,530.5 L610.8,530.6 L609.8,530.7ZM653.8,523.2 L654.8,523.2 L655.8,523.2 L655.8,523.2 L654.8,523.2 L653.8,523.2ZM687.8,539.6 L688.8,539.8 L689.8,540.0 L690.8,540.0 L691.8,539.9 L692.8,539.8 L693.8,539.6 L694.8,539.4 L695.8,539.2 L696.8,539.0 L697.8,538.8 L698.8,538.6 L699.8,538.4 L700.8,538.2 L701.8,538.0 L702.8,537.8 L703.8,537.6 L704.8,537.4 L705.8,537.2 L706.8,537.0 L707.8,536.8 L708.8,536.6 L709.8,536.4 L710.8,536.3 L711.8,536.2 L712.8,536.2 L713.8,536.2 L714.8,536.2 L715.8,536.2 L716.8,536.2 L717.8,536.2 L718.8,536.2 L719.8,536.1 L720.8,535.9 L721.8,535.7 L722.8,535.3 L723.8,534.8 L724.8,534.3 L725.8,533.8 L726.8,533.3 L727.8,532.8 L728.8,532.3 L729.8,531.8 L730.8,531.2 L731.8,530.6 L732.8,530.0 L733.8,529.3 L734.8,528.6 L735.8,527.9 L736.8,527.2 L737.8,526.5 L738.8,525.8 L739.8,525.1 L740.8,524.5 L741.8,523.9 L742.8,523.3 L743.8,522.8 L744.8,522.2 L745.8,521.8 L746.8,521.2 L747.8,520.8 L748.8,520.2 L749.8,519.8 L750.8,519.3 L751.8,518.8 L752.8,518.4 L753.8,518.0 L754.8,517.6 L755.8,517.2 L756.8,516.8 L757.8,516.5 L758.8,516.1 L759.8,515.8 L760.8,515.5 L761.8,515.2 L762.8,515.0 L763.8,514.8 L764.8,514.6 L765.8,514.4 L766.8,514.2 L767.8,514.0 L768.8,513.9 L769.8,513.8 L769.8,513.8 L768.8,513.8 L767.8,513.8 L766.8,513.8 L765.8,513.8 L764.8,513.8 L763.8,513.9 L762.8,514.0 L761.8,514.2 L760.8,514.4 L759.8,514.6 L758.8,514.8 L757.8,515.0 L756.8,515.2 L755.8,515.5 L754.8,515.8 L753.8,516.1 L752.8,516.5 L751.8,516.8 L750.8,517.2 L749.8,517.6 L748.8,518.0 L747.8,518.4 L746.8,518.8 L745.8,519.3 L744.8,519.8 L743.8,520.2 L742.8,520.8 L741.8,521.2 L740.8,521.8 L739.8,522.2 L738.8,522.8 L737.8,523.3 L736.8,523.9 L735.8,524.5 L734.8,525.1 L733.8,525.8 L732.8,526.5 L731.8,527.2 L730.8,527.9 L729.8,528.6 L728.8,529.3 L727.8,530.0 L726.8,530.6 L725.8,531.2 L724.8,531.8 L723.8,532.3 L722.8,532.8 L721.8,533.3 L720.8,533.8 L719.8,534.3 L718.8,534.8 L717.8,535.3 L716.8,535.7 L715.8,535.9 L714.8,536.1 L713.8,536.2 L712.8,536.2 L711.8,536.2 L710.8,536.2 L709.8,536.2 L708.8,536.2 L707.8,536.2 L706.8,536.2 L705.8,536.3 L704.8,536.4 L703.8,536.6 L702.8,536.8 L701.8,537.0 L700.8,537.2 L699.8,537.4 L698.8,537.6 L697.8,537.8 L696.8,538.0 L695.8,538.2 L694.8,538.4 L693.8,538.6 L692.8,538.8 L691.8,539.0 L690.8,539.2 L689.8,539.4 L688.8,539.6 L687.8,539.8Z" fill="#d0d0d0" opacity="0.9"/><path d="M3.0,509.4 L4.5,509.2 L6.0,509.1 L7.5,508.9 L9.0,508.7 L10.5,508.6 L12.0,508.5 L13.5,508.5 L15.0,508.5 L16.5,508.5 L18.0,508.7 L19.5,508.9 L21.0,509.1 L22.5,509.5 L24.0,510.0 L25.5,510.6 L27.0,511.4 L28.5,512.2 L30.0,512.8 L31.5,513.3 L33.0,513.6 L34.5,513.8 L36.0,513.8 L37.5,513.8 L39.0,513.8 L40.5,513.9 L42.0,513.9 L43.5,513.9 L45.0,514.0 L46.5,514.0 L48.0,514.1 L49.5,514.2 L51.0,514.3 L52.5,514.5 L54.0,514.8 L55.5,515.1 L57.0,515.3 L58.5,515.5 L60.0,515.6 L61.5,515.6 L63.0,515.5 L64.5,515.2 L66.0,514.8 L67.5,514.3 L69.0,513.8 L70.5,513.4 L72.0,513.3 L73.5,513.3 L75.0,513.5 L76.5,513.8 L78.0,514.0 L79.5,514.3 L81.0,514.5 L82.5,514.8 L84.0,515.0 L85.5,515.1 L87.0,515.2 L88.5,515.2 L90.0,515.2 L91.5,515.1 L93.0,515.0 L94.5,514.9 L96.0,514.6 L97.5,514.3 L99.0,514.1 L100.5,513.9 L102.0,513.8 L103.5,513.9 L105.0,514.2 L106.5,514.6 L108.0,515.2 L109.5,516.0 L111.0,517.0 L112.5,518.2 L114.0,519.5 L115.5,520.8 L117.0,522.1 L118.5,523.4 L120.0,524.7 L121.5,526.1 L123.0,527.5 L124.5,528.9 L126.0,530.4 L127.5,531.9 L129.0,532.9 L130.5,533.7 L132.0,534.0 L133.5,534.1 L135.0,533.9 L136.5,533.8 L138.0,533.6 L139.5,533.5 L141.0,533.3 L142.5,533.2 L144.0,533.1 L145.5,533.0 L147.0,532.8 L148.5,532.8 L150.0,532.8 L151.5,532.8 L153.0,532.9 L154.5,533.0 L156.0,533.1 L157.5,533.3 L159.0,533.4 L160.5,533.4 L162.0,533.4 L163.5,533.3 L165.0,533.2 L166.5,533.0 L168.0,532.8 L169.5,532.5 L171.0,532.3 L172.5,532.0 L174.0,531.7 L175.5,531.4 L177.0,531.2 L178.5,531.2 L180.0,531.4 L181.5,531.8 L183.0,532.6 L184.5,533.9 L186.0,535.4 L187.5,537.2 L189.0,539.3 L190.5,541.5 L192.0,543.9 L193.5,546.3 L195.0,548.9 L196.5,550.2 L198.0,551.5" fill="none" stroke="#f02020" stroke-width="1.5"/><path d="M267.8,552.0 L269.3,550.0 L270.8,548.0 L272.3,544.0 L273.8,540.1 L275.3,536.3 L276.8,532.6 L278.3,529.2 L279.8,526.2 L281.3,523.4 L282.8,520.9 L284.3,518.8 L285.8,517.0 L287.3,515.2 L288.8,513.6 L290.3,512.2 L291.8,511.1 L293.3,510.2 L294.8,509.6 L296.3,509.3 L297.8,509.2 L299.3,509.2 L300.8,509.3 L302.3,509.7 L303.8,510.2 L305.3,510.8 L306.8,511.6 L308.3,512.4 L309.8,513.2 L311.3,513.8 L312.8,514.3 L314.3,514.6 L315.8,514.9 L317.3,515.2 L318.8,515.5 L320.3,515.7 L321.8,515.9 L323.3,516.1 L324.8,516.4 L326.3,516.7 L327.8,517.2 L329.3,517.8 L330.8,518.6 L332.3,519.5 L333.8,520.4 L335.3,521.3 L336.8,522.1 L338.3,523.0 L339.8,523.7 L341.3,524.6 L342.8,525.6 L344.3,526.8 L345.8,528.1 L347.3,529.7 L348.8,531.4 L350.3,533.0 L351.8,534.6 L353.3,536.2 L354.8,537.7 L356.3,539.2 L357.8,540.5 L359.3,541.6 L360.8,542.5 L362.3,543.1 L363.8,543.5 L365.3,543.9 L366.8,544.4 L368.3,544.8 L369.8,545.4 L371.3,545.9 L372.8,546.5 L374.3,547.1 L375.8,547.8 L377.3,548.5 L378.8,549.1 L380.3,549.5 L381.8,549.6 L383.3,549.6 L384.8,549.3 L386.3,548.6 L387.8,547.7 L389.3,546.5 L390.8,545.1 L392.3,543.4 L393.8,541.8 L395.3,540.1 L396.8,538.5 L398.3,537.0 L399.8,535.4 L401.3,534.0 L402.8,532.6 L404.3,531.2 L405.8,530.0 L407.3,528.8 L408.8,527.7 L410.3,526.7 L411.8,525.7 L413.3,524.8 L414.8,524.0 L416.3,523.3 L417.8,522.5 L419.3,521.7 L420.8,520.8 L422.3,519.9 L423.8,519.0 L425.3,518.2 L426.8,517.5 L428.3,517.1 L429.8,516.9 L431.3,516.9 L432.8,517.2 L434.3,517.6 L435.8,518.1 L437.3,518.8 L438.8,519.5 L440.3,520.2 L441.8,520.8 L443.3,521.3 L444.8,521.6 L446.3,521.9 L447.8,521.9 L449.3,521.9 L450.8,521.8 L452.3,521.6 L453.8,521.3 L455.3,520.9 L456.8,520.5 L458.3,520.1 L459.8,519.6 L461.3,519.2 L462.8,518.8 L464.3,518.4 L465.8,518.1 L467.3,517.8 L468.8,517.5 L470.3,517.2 L471.8,517.0 L473.3,516.7 L474.8,516.4 L476.3,516.2 L477.8,516.1 L479.3,516.0 L480.8,516.1 L482.3,516.2 L483.8,516.3 L485.3,516.5 L486.8,516.7 L488.3,517.0 L489.8,517.4 L491.3,517.9 L492.8,518.4 L494.3,518.9 L495.8,519.4 L497.3,519.9 L498.8,520.3 L500.3,520.7 L501.8,521.1 L503.3,521.4 L504.8,521.7 L506.3,521.9 L507.8,522.1 L509.3,522.2 L510.8,522.4 L512.3,522.7 L513.8,523.3 L515.3,524.1 L516.8,525.2 L518.3,526.5 L519.8,527.7 L521.3,528.7 L522.8,529.5 L524.3,530.1 L525.8,530.6 L527.3,531.0 L528.8,531.3 L530.3,531.6 L531.8,531.8 L533.3,532.0 L534.8,532.2 L536.3,532.5 L537.8,532.7 L539.3,533.0 L540.8,533.4 L542.3,533.7 L543.8,534.1 L545.3,534.5 L546.8,534.8 L548.3,535.2 L549.8,535.6 L551.3,536.0 L552.8,536.3 L554.3,536.7 L555.8,536.9 L557.3,536.9 L558.8,536.7 L560.3,536.3 L561.8,535.7 L563.3,535.1 L564.8,534.6 L566.3,534.0 L567.8,533.5 L569.3,533.0 L570.8,532.6 L572.3,532.2 L573.8,531.8 L575.3,531.4 L576.8,531.0 L578.3,530.5 L579.8,530.0 L581.3,529.4 L582.8,528.7 L584.3,528.0 L585.8,527.2 L587.3,526.5 L588.8,525.9 L590.3,525.7 L591.8,525.7 L593.3,525.9 L594.8,526.5 L596.3,527.1 L597.8,527.7 L599.3,528.3 L600.8,528.7 L602.3,529.2 L603.8,529.5 L605.3,529.8 L606.8,530.1 L608.3,530.4 L609.8,530.6 L611.3,530.7 L612.8,530.8 L614.3,530.7 L615.8,530.6 L617.3,530.4 L618.8,530.3 L620.3,530.0 L621.8,529.5 L623.3,528.9 L624.8,528.2 L626.3,527.3 L627.8,526.4 L629.3,525.5 L630.8,524.7 L632.3,524.1 L633.8,523.6 L635.3,523.2 L636.8,522.9 L638.3,522.7 L639.8,522.6 L641.3,522.5 L642.8,522.5 L644.3,522.6 L645.8,522.7 L647.3,522.8 L648.8,522.9 L650.3,523.0 L651.8,523.1 L653.3,523.1 L654.8,523.2 L656.3,523.2 L657.8,523.2 L659.3,523.2 L660.8,523.3 L662.3,523.5 L663.8,523.8 L665.3,524.3 L666.8,524.8 L668.3,525.5 L669.8,526.4 L671.3,527.5 L672.8,528.8 L674.3,530.3 L675.8,531.9 L677.3,533.4 L678.8,534.7 L680.3,535.9 L681.8,536.9 L683.3,537.7 L684.8,538.4 L686.3,539.1 L687.8,539.5 L689.3,539.8 L690.8,539.8 L692.3,539.8 L693.8,539.6 L695.3,539.3 L696.8,539.0 L698.3,538.7 L699.8,538.4 L701.3,538.1 L702.8,537.8 L704.3,537.5 L705.8,537.2 L707.3,536.9 L708.8,536.6 L710.3,536.4 L711.8,536.3 L713.3,536.2 L714.8,536.2 L716.3,536.2 L717.8,536.2 L719.3,536.1 L720.8,535.8 L722.3,535.4 L723.8,534.8 L725.3,534.1 L726.8,533.3 L728.3,532.5 L729.8,531.7 L731.3,530.9 L732.8,530.0 L734.3,529.0 L735.8,527.9 L737.3,526.9 L738.8,525.8 L740.3,524.8 L741.8,523.9 L743.3,523.1 L744.8,522.2 L746.3,521.5 L747.8,520.8 L749.3,520.0 L750.8,519.3 L752.3,518.6 L753.8,518.0 L755.3,517.4 L756.8,516.8 L758.3,516.3 L759.8,515.8 L761.3,515.4 L762.8,515.0 L764.3,514.7 L765.8,514.4 L767.3,514.1 L768.8,513.9 L770.3,513.8" fill="none" stroke="#f02020" stroke-width="1.5"/><path d="M3,567.5H969" stroke="#ff2020" stroke-width="1" shape-rendering="crispEdges"/><path d="M3,598.5H969" stroke="#20e020" stroke-width="1" shape-rendering="crispEdges"/><clipPath id="below30"><rect x="3" y="598.5" width="966" height="12"/></clipPath><path d="M3.0,572.4 L7.9,577.7 L11.8,572.8 L15.8,574.7 L19.7,577.7 L22.7,574.7 L27.6,580.7 L33.5,575.7 L39.4,570.8 L47.3,577.7 L51.2,575.7 L55.2,579.7 L59.1,572.8 L63.1,570.8 L66.6,564.5 L69.0,573.7 L71.9,572.8 L74.9,584.2 L77.8,578.7 L82.8,578.7 L86.7,573.7 L90.6,575.7 L94.6,573.7 L98.5,568.8 L102.5,576.7 L106.4,579.7 L112.3,588.5 L118.2,592.5 L123.2,587.6 L126.1,591.5 L132.0,584.6 L136.0,579.1 L139.9,584.6 L145.8,581.6 L153.7,588.5 L159.6,583.6 L164.5,588.5 L168.5,580.3 L174.4,579.7 L179.3,584.6 L183.3,596.4 L189.2,604.3 L194.9,591.5 L198.9,599.4 L201.8,597.4 L204.8,602.4 L209.7,605.9 L215.6,599.4 L222.5,600.0 L226.5,594.5 L230.4,600.0 L234.3,592.5 L245.2,594.5 L248.1,590.5 L252.1,586.6 L258.0,586.2 L261.9,581.6 L267.8,573.7 L274.7,572.4 L280.6,575.7 L286.5,571.8 L296.4,577.7 L299.4,573.7 L304.3,582.6 L308.2,585.0 L310.2,579.1 L317.1,574.7 L324.0,578.7 L330.9,586.2 L336.8,580.7 L343.7,590.5 L353.5,596.0 L357.5,597.4 L362.4,587.6 L367.3,588.2 L372.3,598.8 L379.2,598.8 L385.9,583.6 L388.9,585.0 L393.8,577.7 L396.7,571.8 L400.7,578.7 L406.6,580.3 L411.5,574.7 L418.4,572.8 L420.4,579.1 L424.3,572.8 L427.3,573.7 L430.2,584.2 L434.2,579.7 L438.1,585.6 L443.1,582.6 L448.0,576.3 L453.9,575.1 L458.8,574.3 L464.7,578.7 L470.6,574.7 L476.6,570.8 L480.5,579.7 L484.4,575.7 L492.3,585.6 L498.2,583.0 L504.1,576.7 L510.0,579.7 L518.9,594.5 L523.8,591.5 L529.8,580.3 L534.7,581.6 L538.6,591.5 L543.5,587.6 L552.4,591.5 L558.3,581.0 L563.2,580.7 L569.2,584.6 L576.2,578.2 L580.3,580.9 L584.5,573.6 L588.6,577.8 L594.8,592.2 L599.0,585.6 L603.1,584.0 L606.2,587.1 L611.4,581.9 L619.7,580.9 L625.9,572.6 L630.0,573.6 L638.3,577.8 L644.5,584.0 L647.6,579.4 L652.8,574.7 L656.9,577.8 L661.0,578.8 L665.2,588.1 L669.3,588.5 L673.5,598.5 L677.6,602.2 L681.7,594.3 L687.9,588.1 L694.1,581.9 L700.4,591.2 L706.6,578.2 L713.8,591.2 L719.0,584.0 L727.3,580.2 L735.5,574.7 L738.6,570.5 L741.7,574.7 L745.9,572.6 L749.0,577.3 L756.2,571.1 L764.5,570.5 L769.7,569.9 L771.7,574.7 L771.7,598.5 L3.0,598.5Z" fill="#b8f0b8" clip-path="url(#below30)"/><path d="M3.0,572.3 L5.0,574.7 L7.0,577.8 L9.0,576.2 L11.0,573.8 L13.0,573.6 L15.0,573.5 L17.0,575.7 L19.0,577.5 L21.0,577.2 L23.0,574.0 L25.0,577.0 L27.0,578.9 L29.0,580.3 L31.0,578.3 L33.0,574.9 L35.0,575.7 L37.0,574.0 L39.0,571.5 L41.0,572.5 L43.0,573.1 L45.0,574.4 L47.0,577.5 L49.0,575.7 L51.0,575.0 L53.0,576.8 L55.0,578.3 L57.0,576.4 L59.0,572.8 L61.0,572.7 L63.0,570.9 L65.0,567.7 L67.0,566.0 L69.0,574.1 L71.0,573.0 L73.0,576.4 L75.0,585.3 L77.0,581.5 L79.0,579.6 L81.0,579.2 L83.0,578.0 L85.0,575.2 L87.0,573.3 L89.0,573.8 L91.0,576.2 L93.0,574.2 L95.0,574.1 L97.0,570.4 L99.0,571.0 L101.0,574.6 L103.0,575.8 L105.0,577.9 L107.0,581.7 L109.0,583.5 L111.0,587.8 L113.0,588.7 L115.0,589.2 L117.0,592.0 L119.0,592.4 L121.0,589.2 L123.0,586.7 L125.0,589.6 L127.0,591.7 L129.0,588.8 L131.0,584.8 L133.0,582.6 L135.0,579.4 L137.0,579.4 L139.0,584.1 L141.0,583.2 L143.0,583.2 L145.0,581.9 L147.0,581.8 L149.0,585.0 L151.0,585.2 L153.0,588.3 L155.0,586.4 L157.0,585.6 L159.0,583.4 L161.0,584.4 L163.0,588.2 L165.0,588.3 L167.0,582.9 L169.0,581.2 L171.0,579.3 L173.0,579.6 L175.0,581.2 L177.0,582.7 L179.0,583.3 L181.0,590.9 L183.0,594.8 L185.0,598.0 L187.0,602.1 L189.0,603.6 L191.0,599.7 L193.0,594.7 L195.0,590.6 L197.0,595.9 L199.0,598.7 L201.0,598.2 L203.0,599.1 L205.0,602.4 L207.0,605.2 L209.0,605.4 L211.0,604.7 L213.0,603.2 L215.0,599.2 L217.0,598.6 L219.0,600.8 L221.0,600.7 L223.0,598.7 L225.0,595.8 L227.0,595.8 L229.0,599.2 L231.0,598.1 L233.0,596.2 L235.0,593.6 L237.0,593.3 L239.0,593.2 L241.0,592.7 L243.0,592.9 L245.0,595.7 L247.0,591.3 L249.0,590.2 L251.0,587.0 L253.0,587.4 L255.0,586.7 L257.0,585.7 L259.0,584.2 L261.0,583.2 L263.0,579.0 L265.0,576.7 L267.0,574.9 L269.0,574.4 L271.0,573.4 L273.0,572.1 L275.0,573.7 L277.0,572.9 L279.0,573.5 L281.0,574.8 L283.0,574.0 L285.0,571.6 L287.0,571.3 L289.0,572.9 L291.0,574.7 L293.0,574.7 L295.0,576.5 L297.0,577.9 L299.0,575.5 L301.0,577.0 L303.0,580.7 L305.0,583.3 L307.0,583.3 L309.0,581.4 L311.0,577.3 L313.0,578.4 L315.0,576.6 L317.0,576.0 L319.0,574.6 L321.0,577.3 L323.0,578.1 L325.0,580.4 L327.0,581.5 L329.0,585.4 L331.0,585.0 L333.0,584.4 L335.0,583.0 L337.0,582.0 L339.0,584.4 L341.0,587.2 L343.0,590.3 L345.0,592.3 L347.0,592.0 L349.0,594.0 L351.0,595.6 L353.0,596.7 L355.0,596.3 L357.0,598.0 L359.0,595.3 L361.0,590.6 L363.0,588.0 L365.0,587.6 L367.0,588.4 L369.0,592.1 L371.0,595.0 L373.0,599.2 L375.0,600.1 L377.0,599.8 L379.0,599.4 L381.0,594.4 L383.0,590.8 L385.0,585.9 L387.0,584.0 L389.0,585.7 L391.0,580.8 L393.0,579.5 L395.0,574.0 L397.0,572.6 L399.0,575.7 L401.0,578.1 L403.0,579.8 L405.0,579.9 L407.0,580.1 L409.0,578.7 L411.0,574.6 L413.0,573.0 L415.0,573.2 L417.0,573.6 L419.0,573.9 L421.0,577.3 L423.0,576.0 L425.0,573.4 L427.0,573.5 L429.0,580.9 L431.0,582.9 L433.0,581.5 L435.0,580.1 L437.0,583.8 L439.0,585.9 L441.0,584.9 L443.0,583.6 L445.0,579.9 L447.0,577.8 L449.0,575.6 L451.0,574.7 L453.0,575.3 L455.0,575.8 L457.0,575.5 L459.0,575.0 L461.0,577.1 L463.0,576.9 L465.0,577.6 L467.0,577.0 L469.0,575.2 L471.0,573.7 L473.0,572.9 L475.0,572.2 L477.0,571.7 L479.0,575.8 L481.0,580.1 L483.0,578.4 L485.0,576.3 L487.0,577.9 L489.0,580.2 L491.0,584.9 L493.0,584.1 L495.0,585.0 L497.0,583.7 L499.0,581.6 L501.0,580.8 L503.0,576.6 L505.0,576.2 L507.0,578.1 L509.0,578.0 L511.0,582.2 L513.0,584.0 L515.0,587.1 L517.0,590.2 L519.0,594.8 L521.0,593.1 L523.0,592.3 L525.0,589.7 L527.0,586.3 L529.0,583.0 L531.0,581.1 L533.0,580.4 L535.0,582.3 L537.0,586.6 L539.0,589.9 L541.0,589.5 L543.0,588.6 L545.0,587.4 L547.0,588.5 L549.0,589.6 L551.0,591.4 L553.0,590.5 L555.0,587.2 L557.0,584.0 L559.0,580.7 L561.0,581.6 L563.0,581.8 L565.0,580.8 L567.0,584.3 L569.0,585.0 L571.0,582.0 L573.0,581.0 L575.0,579.6 L577.0,579.8 L579.0,579.7 L581.0,579.9 L583.0,577.2 L585.0,574.9 L587.0,577.3 L589.0,578.6 L591.0,583.8 L593.0,587.3 L595.0,592.5 L597.0,589.6 L599.0,586.0 L601.0,585.4 L603.0,583.3 L605.0,586.9 L607.0,587.5 L609.0,585.5 L611.0,582.4 L613.0,582.5 L615.0,581.0 L617.0,582.3 L619.0,581.9 L621.0,578.8 L623.0,575.4 L625.0,573.7 L627.0,573.0 L629.0,574.1 L631.0,574.1 L633.0,573.9 L635.0,576.9 L637.0,576.0 L639.0,579.3 L641.0,579.6 L643.0,582.1 L645.0,584.0 L647.0,579.4 L649.0,577.2 L651.0,576.4 L653.0,575.4 L655.0,577.2 L657.0,578.3 L659.0,579.5 L661.0,578.8 L663.0,584.4 L665.0,586.6 L667.0,587.6 L669.0,588.5 L671.0,592.0 L673.0,597.9 L675.0,600.2 L677.0,601.7 L679.0,600.4 L681.0,595.8 L683.0,592.5 L685.0,590.7 L687.0,589.9 L689.0,588.0 L691.0,584.2 L693.0,583.9 L695.0,584.4 L697.0,586.2 L699.0,589.3 L701.0,589.2 L703.0,585.8 L705.0,581.6 L707.0,579.2 L709.0,581.3 L711.0,587.4 L713.0,589.8 L715.0,589.3 L717.0,587.6 L719.0,584.2 L721.0,583.1 L723.0,582.7 L725.0,580.1 L727.0,580.4 L729.0,578.8 L731.0,578.9 L733.0,577.5 L735.0,574.4 L737.0,572.6 L739.0,570.1 L741.0,573.6 L743.0,574.9 L745.0,574.1 L747.0,574.2 L749.0,576.8 L751.0,574.8 L753.0,574.2 L755.0,573.2 L757.0,570.1 L759.0,571.6 L761.0,569.5 L763.0,569.8 L765.0,569.7 L767.0,570.7 L769.0,569.5 L771.0,572.6" fill="none" stroke="#1010f0" stroke-width="2.2" stroke-linejoin="round"/><rect x="3" y="401" width="1009" height="3" fill="#8a8a8a"/><rect x="3" y="448" width="1009" height="3" fill="#8a8a8a"/><rect x="3" y="500" width="1009" height="3" fill="#8a8a8a"/><rect x="3" y="556" width="1009" height="3" fill="#8a8a8a"/><path d="M969.5,24V611.5" stroke="#000" stroke-width="1.3"/><path d="M3,611.5H970" stroke="#000" stroke-width="1.5"/><path d="M6.5,612V640" stroke="#909090" stroke-width="1" shape-rendering="crispEdges"/><path d="M114.5,612V640" stroke="#909090" stroke-width="1" shape-rendering="crispEdges"/><path d="M222.5,612V640" stroke="#909090" stroke-width="1" shape-rendering="crispEdges"/><path d="M330.5,612V640" stroke="#909090" stroke-width="1" shape-rendering="crispEdges"/><path d="M441.5,612V640" stroke="#909090" stroke-width="1" shape-rendering="crispEdges"/><path d="M549.5,612V640" stroke="#909090" stroke-width="1" shape-rendering="crispEdges"/><path d="M658.5,612V640" stroke="#909090" stroke-width="1" shape-rendering="crispEdges"/><path d="M766.5,612V640" stroke="#909090" stroke-width="1" shape-rendering="crispEdges"/><path d="M874.5,612V640" stroke="#909090" stroke-width="1" shape-rendering="crispEdges"/><path d="M33.5,612V615" stroke="#000" stroke-width="1" shape-rendering="crispEdges"/><path d="M60.5,612V615" stroke="#000" stroke-width="1" shape-rendering="crispEdges"/><path d="M87.5,612V615" stroke="#000" stroke-width="1" shape-rendering="crispEdges"/><path d="M141.5,612V615" stroke="#000" stroke-width="1" shape-rendering="crispEdges"/><path d="M168.5,612V615" stroke="#000" stroke-width="1" shape-rendering="crispEdges"/><path d="M195.5,612V615" stroke="#000" stroke-width="1" shape-rendering="crispEdges"/><path d="M249.5,612V615" stroke="#000" stroke-width="1" shape-rendering="crispEdges"/><path d="M276.5,612V615" stroke="#000" stroke-width="1" shape-rendering="crispEdges"/><path d="M303.5,612V615" stroke="#000" stroke-width="1" shape-rendering="crispEdges"/><path d="M358.5,612V615" stroke="#000" stroke-width="1" shape-rendering="crispEdges"/><path d="M386.5,612V615" stroke="#000" stroke-width="1" shape-rendering="crispEdges"/><path d="M413.5,612V615" stroke="#000" stroke-width="1" shape-rendering="crispEdges"/><path d="M468.5,612V615" stroke="#000" stroke-width="1" shape-rendering="crispEdges"/><path d="M495.5,612V615" stroke="#000" stroke-width="1" shape-rendering="crispEdges"/><path d="M522.5,612V615" stroke="#000" stroke-width="1" shape-rendering="crispEdges"/><path d="M576.5,612V615" stroke="#000" stroke-width="1" shape-rendering="crispEdges"/><path d="M603.5,612V615" stroke="#000" stroke-width="1" shape-rendering="crispEdges"/><path d="M630.5,612V615" stroke="#000" stroke-width="1" shape-rendering="crispEdges"/><path d="M685.5,612V615" stroke="#000" stroke-width="1" shape-rendering="crispEdges"/><path d="M712.5,612V615" stroke="#000" stroke-width="1" shape-rendering="crispEdges"/><path d="M739.5,612V615" stroke="#000" stroke-width="1" shape-rendering="crispEdges"/><path d="M793.5,612V615" stroke="#000" stroke-width="1" shape-rendering="crispEdges"/><path d="M820.5,612V615" stroke="#000" stroke-width="1" shape-rendering="crispEdges"/><path d="M847.5,612V615" stroke="#000" stroke-width="1" shape-rendering="crispEdges"/><path d="M901.5,612V615" stroke="#000" stroke-width="1" shape-rendering="crispEdges"/><path d="M928.5,612V615" stroke="#000" stroke-width="1" shape-rendering="crispEdges"/><path d="M955.5,612V615" stroke="#000" stroke-width="1" shape-rendering="crispEdges"/><path d="M970,35.5 L976,38.5 L970,41.5Z" fill="#000"/><text x="977" y="43" font-family="Liberation Sans, sans-serif" font-size="12" fill="#000" textLength="28" lengthAdjust="spacingAndGlyphs">2.1000</text><path d="M970,81.5 L976,84.5 L970,87.5Z" fill="#000"/><text x="977" y="89" font-family="Liberation Sans, sans-serif" font-size="12" fill="#000" textLength="28" lengthAdjust="spacingAndGlyphs">2.0000</text><path d="M970,127.5 L976,130.5 L970,133.5Z" fill="#000"/><text x="977" y="135" font-family="Liberation Sans, sans-serif" font-size="12" fill="#000" textLength="28" lengthAdjust="spacingAndGlyphs">1.9000</text><path d="M970,174.5 L976,177.5 L970,180.5Z" fill="#000"/><text x="977" y="182" font-family="Liberation Sans, sans-serif" font-size="12" fill="#000" textLength="28" lengthAdjust="spacingAndGlyphs">1.8000</text><path d="M970,220.5 L976,223.5 L970,226.5Z" fill="#000"/><text x="977" y="228" font-family="Liberation Sans, sans-serif" font-size="12" fill="#000" textLength="28" lengthAdjust="spacingAndGlyphs">1.7000</text><path d="M970,267.5 L976,270.5 L970,273.5Z" fill="#000"/><text x="977" y="275" font-family="Liberation Sans, sans-serif" font-size="12" fill="#000" textLength="28" lengthAdjust="spacingAndGlyphs">1.6000</text><path d="M970,312.5 L976,315.5 L970,318.5Z" fill="#000"/><text x="977" y="320" font-family="Liberation Sans, sans-serif" font-size="12" fill="#000" textLength="28" lengthAdjust="spacingAndGlyphs">1.5000</text><path d="M970,358.5 L976,361.5 L970,364.5Z" fill="#000"/><text x="977" y="366" font-family="Liberation Sans, sans-serif" font-size="12" fill="#000" textLength="28" lengthAdjust="spacingAndGlyphs">1.4000</text><path d="M970,61.5H975" stroke="#000" stroke-width="1"/><path d="M970,107.5H975" stroke="#000" stroke-width="1"/><path d="M970,153.5H975" stroke="#000" stroke-width="1"/><path d="M970,199.5H975" stroke="#000" stroke-width="1"/><path d="M970,246.5H975" stroke="#000" stroke-width="1"/><path d="M970,292.5H975" stroke="#000" stroke-width="1"/><path d="M970,338.5H975" stroke="#000" stroke-width="1"/><path d="M970,384.5H975" stroke="#000" stroke-width="1"/><path d="M970,417 L976,420 L970,423Z" fill="#000"/><text x="977" y="425" font-family="Liberation Sans, sans-serif" font-size="12" fill="#000" textLength="10" lengthAdjust="spacingAndGlyphs">50</text><path d="M970,460 L976,463 L970,466Z" fill="#000"/><text x="977" y="468" font-family="Liberation Sans, sans-serif" font-size="12" fill="#000" textLength="10" lengthAdjust="spacingAndGlyphs">40</text><path d="M970,411.5H975" stroke="#000" stroke-width="1"/><path d="M970,444.5H975" stroke="#000" stroke-width="1"/><path d="M970,481.5H975" stroke="#000" stroke-width="1"/><path d="M970,495.5H975" stroke="#000" stroke-width="1"/><path d="M970,546.5H975" stroke="#000" stroke-width="1"/><path d="M970,573.5H975" stroke="#000" stroke-width="1"/><path d="M970,604.5H975" stroke="#000" stroke-width="1"/><path d="M970.5,253.5 L975,245 H1012 V262 H975 Z" fill="#000" stroke="#000" stroke-width="1"/><text x="975.8" y="257.6" font-family="Liberation Sans, sans-serif" font-size="11.5" fill="#fff" textLength="27.5" lengthAdjust="spacingAndGlyphs">1.6346</text><path d="M972,283 L976,292 H1012 V286 Z" fill="#20c020" stroke="#000" stroke-width="1"/><path d="M970.5,279.5 L975,272 H1012 V287 H975 Z" fill="#ff0000" stroke="#000" stroke-width="1"/><text x="975.8" y="283.8" font-family="Liberation Sans, sans-serif" font-size="11.5" fill="#fff" textLength="27.5" lengthAdjust="spacingAndGlyphs">1.5779</text><path d="M970.5,433.5 L975,425.5 H1012 V441.5 H975 Z" fill="#18b4f0" stroke="#000" stroke-width="1"/><text x="975.8" y="438.4" font-family="Liberation Sans, sans-serif" font-size="11.5" fill="#000" textLength="22.4" lengthAdjust="spacingAndGlyphs">5.185</text><path d="M972,480 L976,496 H1012 V482 Z" fill="#ff0000" stroke="#000" stroke-width="1"/><text x="978" y="495" font-family="Liberation Sans, sans-serif" font-size="11.5" fill="#fff" textLength="34" lengthAdjust="spacingAndGlyphs">19.0703</text><path d="M970.5,481.75 L975,474 H1012 V489.5 H975 Z" fill="#00ee00" stroke="#000" stroke-width="1"/><text x="975.8" y="487" font-family="Liberation Sans, sans-serif" font-size="11.5" fill="#000" textLength="32.6" lengthAdjust="spacingAndGlyphs">21.2697</text><path d="M970.5,513.25 L975,505.5 H1012 V521 H975 Z" fill="#fff" stroke="#000" stroke-width="1"/><text x="975.8" y="517.6" font-family="Liberation Sans, sans-serif" font-size="11.5" fill="#000" textLength="27.5" lengthAdjust="spacingAndGlyphs">0.0216</text><path d="M970.5,529.0 L975,522 H1012 V536 H975 Z" fill="#00ee00" stroke="#000" stroke-width="1"/><text x="975.8" y="531.5" font-family="Liberation Sans, sans-serif" font-size="11.5" fill="#000" textLength="22.4" lengthAdjust="spacingAndGlyphs">0.001</text><path d="M970,580 L976,583 L970,586Z" fill="#000"/><text x="977" y="588.5" font-family="Liberation Sans, sans-serif" font-size="12" fill="#000" textLength="10" lengthAdjust="spacingAndGlyphs">50</text><path d="M970.5,575.25 L975,567 H1012 V583.5 H975 Z" fill="#0000f0" stroke="#000" stroke-width="1"/><text x="975.8" y="580" font-family="Liberation Sans, sans-serif" font-size="11.5" fill="#fff" textLength="32.6" lengthAdjust="spacingAndGlyphs">59.8381</text><text x="60.5" y="638" font-family="Liberation Sans, sans-serif" font-size="11.5" fill="#000" text-anchor="middle" textLength="22" lengthAdjust="spacingAndGlyphs">2007</text><text x="168.5" y="638" font-family="Liberation Sans, sans-serif" font-size="11.5" fill="#000" text-anchor="middle" textLength="22" lengthAdjust="spacingAndGlyphs">2008</text><text x="276.5" y="638" font-family="Liberation Sans, sans-serif" font-size="11.5" fill="#000" text-anchor="middle" textLength="22" lengthAdjust="spacingAndGlyphs">2009</text><text x="386.0" y="638" font-family="Liberation Sans, sans-serif" font-size="11.5" fill="#000" text-anchor="middle" textLength="22" lengthAdjust="spacingAndGlyphs">2010</text><text x="495.5" y="638" font-family="Liberation Sans, sans-serif" font-size="11.5" fill="#000" text-anchor="middle" textLength="22" lengthAdjust="spacingAndGlyphs">2011</text><text x="603.8" y="638" font-family="Liberation Sans, sans-serif" font-size="11.5" fill="#000" text-anchor="middle" textLength="22" lengthAdjust="spacingAndGlyphs">2012</text><text x="712.2" y="638" font-family="Liberation Sans, sans-serif" font-size="11.5" fill="#000" text-anchor="middle" textLength="22" lengthAdjust="spacingAndGlyphs">2013</text><text x="820.5" y="638" font-family="Liberation Sans, sans-serif" font-size="11.5" fill="#000" text-anchor="middle" textLength="22" lengthAdjust="spacingAndGlyphs">2014</text><text x="921.5" y="638" font-family="Liberation Sans, sans-serif" font-size="11.5" fill="#000" text-anchor="middle" textLength="22" lengthAdjust="spacingAndGlyphs">2015</text><text x="4.5" y="653" font-family="Liberation Sans, sans-serif" font-size="10.5" fill="#000" textLength="188" lengthAdjust="spacingAndGlyphs">GBP Curncy (British Pound Spot) Graph 64</text><text x="260" y="653" font-family="Liberation Sans, sans-serif" font-size="10.5" fill="#000" textLength="112" lengthAdjust="spacingAndGlyphs">Неделя 17JAN2012-16JAN</text><text x="553" y="653" font-family="Liberation Sans, sans-serif" font-size="10.5" fill="#000" textLength="179" lengthAdjust="spacingAndGlyphs">Copyright© 2014 Bloomberg Finance L.P.</text><text x="912.5" y="653" font-family="Liberation Sans, sans-serif" font-size="10.5" fill="#000" textLength="97.5" lengthAdjust="spacingAndGlyphs">16-Jan-2014 13:54:35</text><text x="3.5" y="21" font-family="Liberation Serif, serif" font-weight="bold" font-style="italic" font-size="15" fill="#e8700e" stroke="#e8700e" stroke-width="0.5" textLength="84" lengthAdjust="spacingAndGlyphs">График 1.</text><text x="102.6" y="21" font-family="Liberation Serif, serif" font-weight="bold" font-style="italic" font-size="15" fill="#e8700e" stroke="#e8700e" stroke-width="0.5" textLength="469" lengthAdjust="spacingAndGlyphs">Динамика валютной пары GBP/USD, интервал 1 неделя</text><rect x="0" y="662" width="1015" height="28" fill="#3c3c3c"/><text x="11" y="681" font-family="Liberation Sans, sans-serif" font-size="13" fill="#e8e8e8" textLength="248" lengthAdjust="spacing">Элитный Трейдер, ELITETRADER.RU</text><defs><linearGradient id="ga" x1="0" y1="0" x2="0" y2="1"><stop offset="0" stop-color="#c8f070"/><stop offset="1" stop-color="#3a9010"/></linearGradient><linearGradient id="gb" x1="0" y1="0" x2="0" y2="1"><stop offset="0" stop-color="#f8b040"/><stop offset="1" stop-color="#e03010"/></linearGradient><linearGradient id="gc" x1="0" y1="0" x2="1" y2="1"><stop offset="0" stop-color="#b0d030"/><stop offset="0.5" stop-color="#f0a020"/><stop offset="1" stop-color="#f05030"/></linearGradient></defs><path d="M900,666 L908.5,674.5 H904 V683 H896.5 V674.5 H892 Z" fill="url(#ga)"/><rect x="890.5" y="677.5" width="9" height="5.5" fill="url(#gb)"/><text x="912" y="681.5" font-family="Liberation Sans, sans-serif" font-weight="bold" font-size="15.5" fill="#fff" textLength="22.5" lengthAdjust="spacingAndGlyphs">clip</text><circle cx="942" cy="675.7" r="8" fill="url(#gc)"/><text x="942" y="681" font-family="Liberation Sans, sans-serif" font-weight="bold" font-size="14" fill="#fff" text-anchor="middle">2</text><text x="950" y="681.5" font-family="Liberation Sans, sans-serif" font-weight="bold" font-size="15.5" fill="#fff" textLength="21.5" lengthAdjust="spacingAndGlyphs">net</text><text x="972" y="681.5" font-family="Liberation Sans, sans-serif" font-weight="bold" font-size="15.5" fill="#9a9a9a" textLength="33.5" lengthAdjust="spacingAndGlyphs">.com</text></svg>
</body></html>
